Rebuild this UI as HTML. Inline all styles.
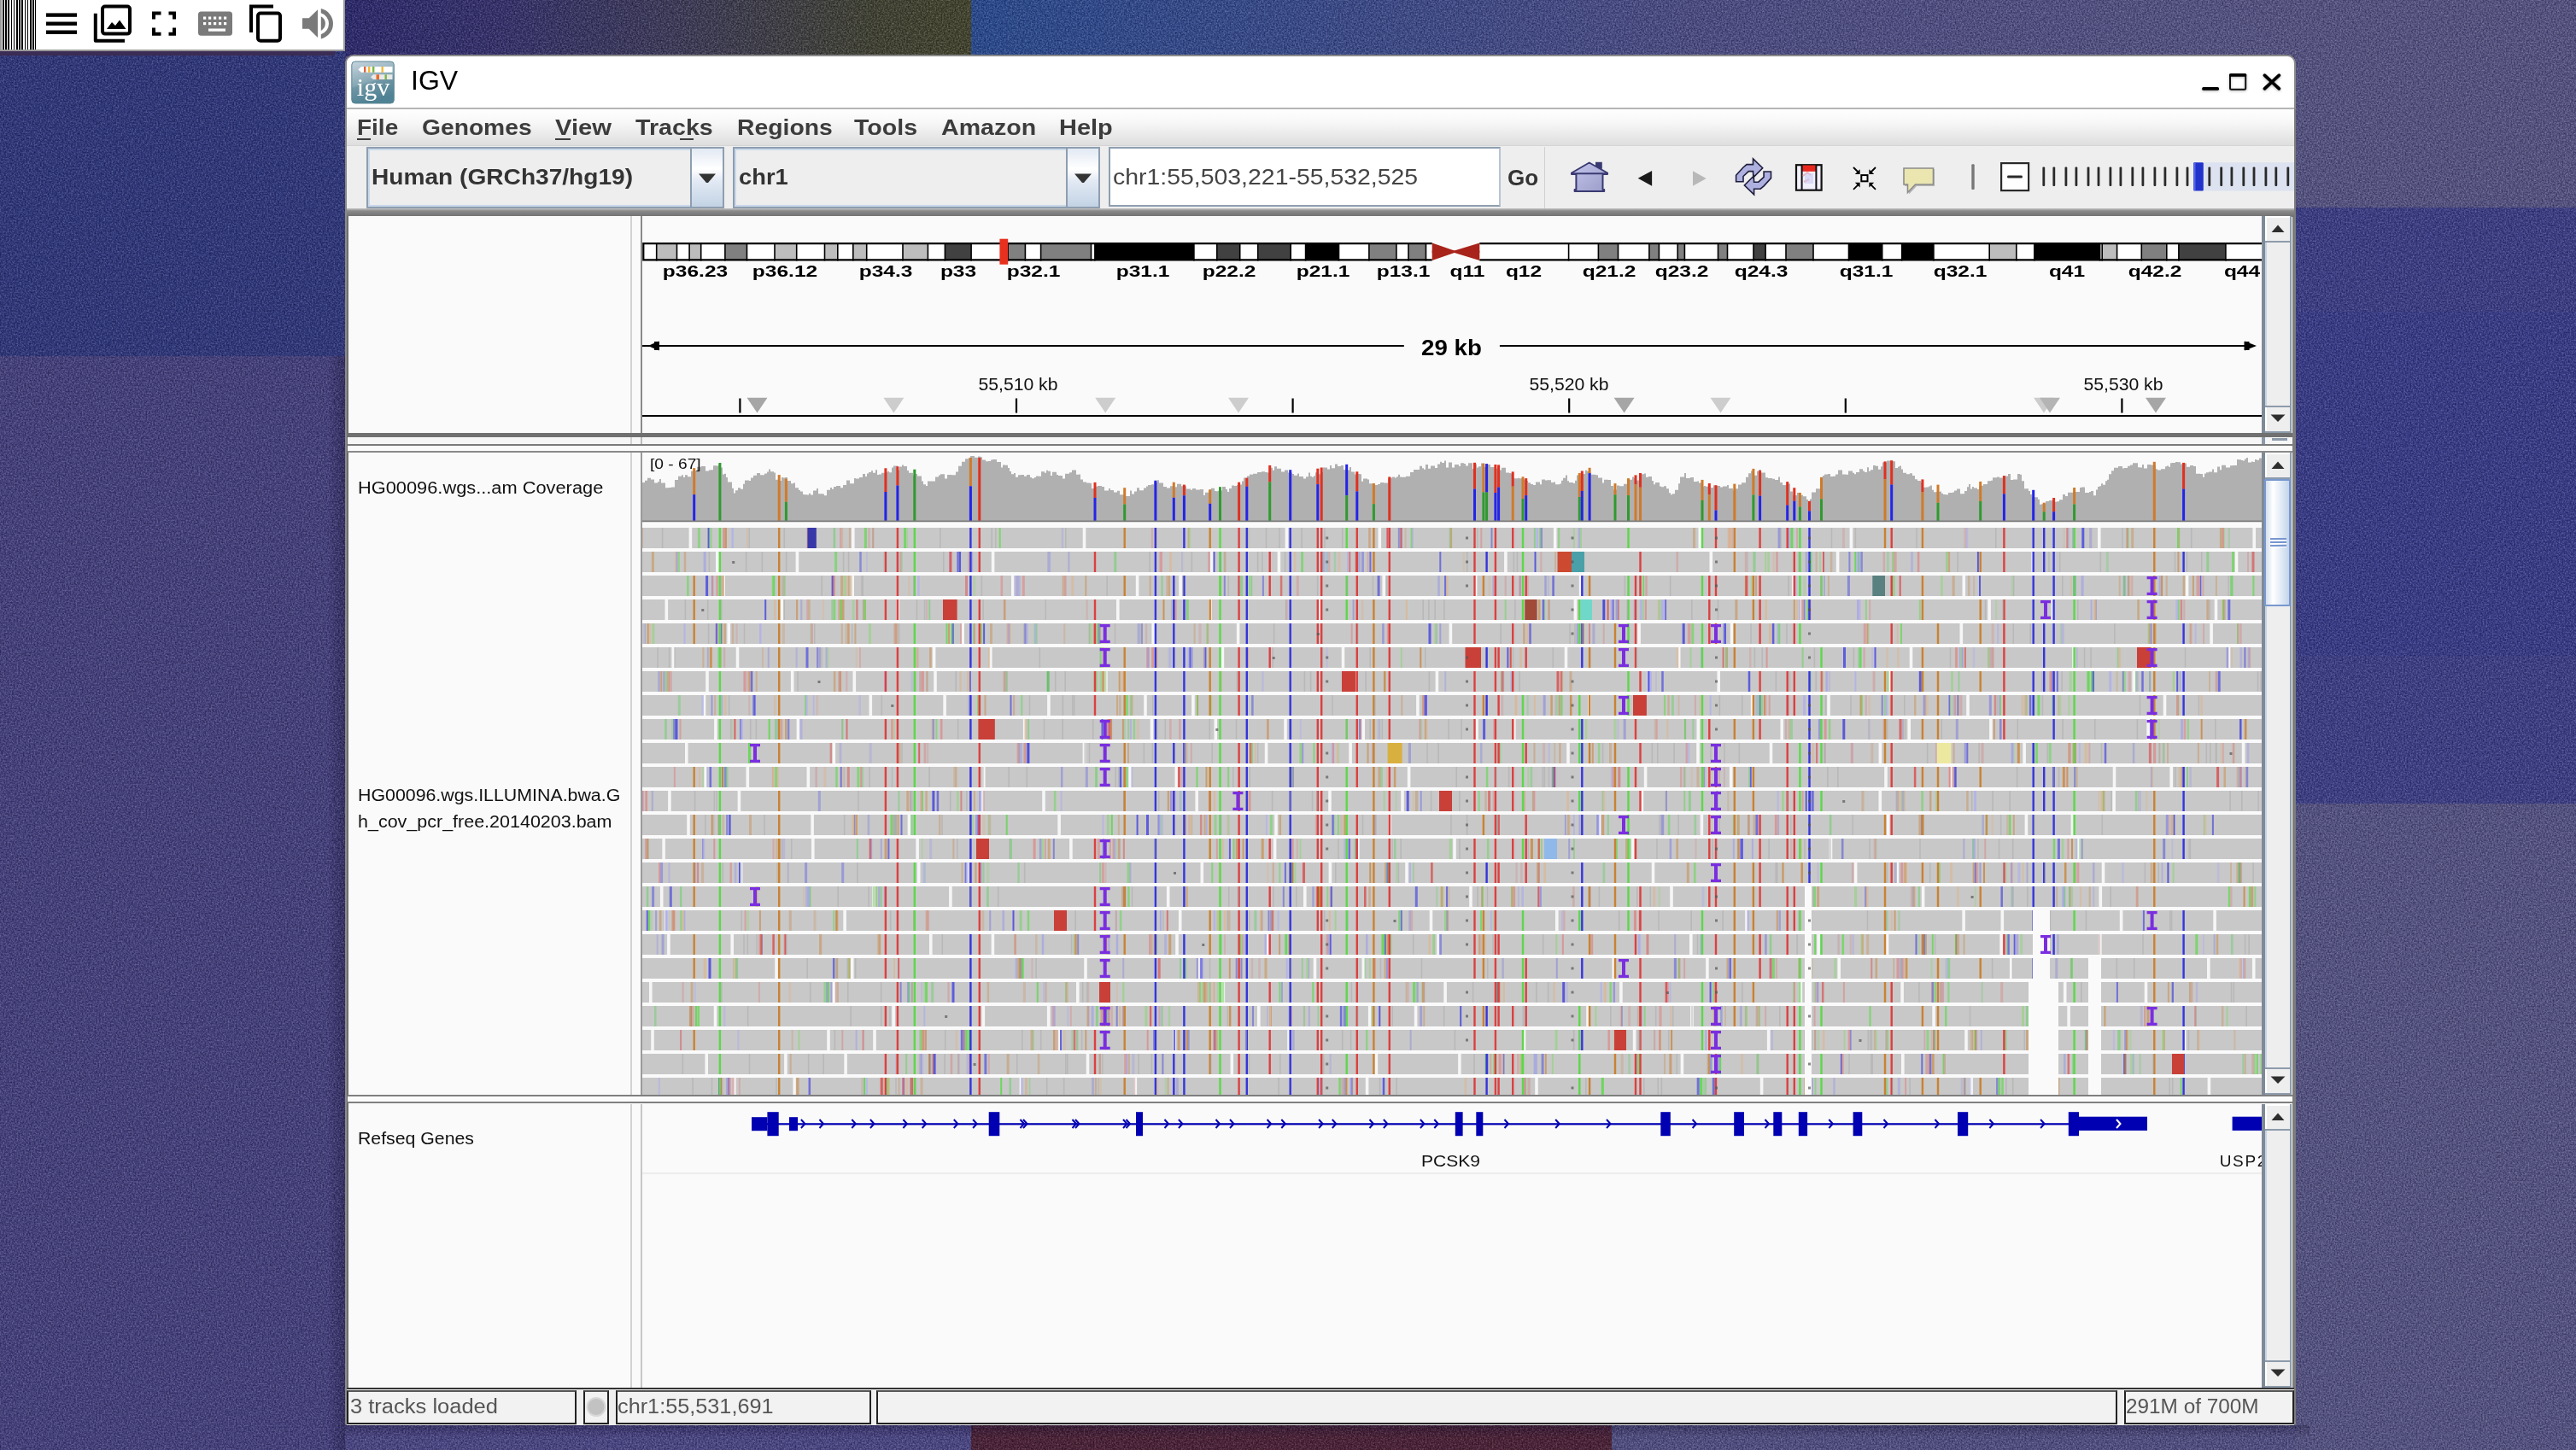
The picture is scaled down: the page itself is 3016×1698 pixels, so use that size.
<!DOCTYPE html><html><head><meta charset="utf-8"><title>IGV</title><style>
html,body{margin:0;padding:0;width:3016px;height:1698px;overflow:hidden;background:#4a4777;font-family:"Liberation Sans",sans-serif;}
.b{position:absolute;box-sizing:border-box;}
.t{position:absolute;white-space:nowrap;}
svg{position:absolute;overflow:hidden;}
</style></head><body>
<div class="b" style="left:0px;top:0px;width:3016px;height:1698px;background:#4a4778;"></div>
<div class="b" style="left:404px;top:0px;width:733px;height:66px;background:linear-gradient(90deg,#2f2b6b 0%,#37336a 25%,#3e3c56 55%,#414234 85%,#43442f 100%);"></div>
<div class="b" style="left:1137px;top:0px;width:1551px;height:66px;background:linear-gradient(90deg,#2c4a8a 0%,#3a4a86 25%,#4c4c80 55%,#55537f 100%);"></div>
<div class="b" style="left:0px;top:58px;width:404px;height:359px;background:#313878;"></div>
<div class="b" style="left:0px;top:417px;width:404px;height:1281px;background:#45417a;"></div>
<div class="b" style="left:2688px;top:0px;width:328px;height:243px;background:#55537f;"></div>
<div class="b" style="left:2688px;top:243px;width:328px;height:122px;background:#3c3e82;"></div>
<div class="b" style="left:2688px;top:365px;width:328px;height:403px;background:#3a3c84;"></div>
<div class="b" style="left:2688px;top:768px;width:328px;height:173px;background:#3d3f82;"></div>
<div class="b" style="left:2688px;top:941px;width:328px;height:757px;background:#54527f;"></div>
<div class="b" style="left:404px;top:1669px;width:733px;height:29px;background:#4a4680;"></div>
<div class="b" style="left:1137px;top:1669px;width:750px;height:29px;background:#4a2438;"></div>
<div class="b" style="left:1887px;top:1669px;width:801px;height:29px;background:#504e7e;"></div>
<div class="b" style="left:384px;top:417px;width:20px;height:1281px;background:linear-gradient(90deg,rgba(20,15,50,0) 0%,rgba(20,15,50,0.35) 100%);"></div>
<div class="b" style="left:404px;top:1669px;width:2300px;height:14px;background:linear-gradient(rgba(20,15,50,0.35) 0%,rgba(20,15,50,0) 100%);"></div>
<svg style="left:0;top:0;mix-blend-mode:soft-light;opacity:0.8" width="3016" height="1698"><filter id="nz" x="0" y="0" width="100%" height="100%" color-interpolation-filters="sRGB"><feTurbulence type="fractalNoise" baseFrequency="0.55" numOctaves="3" seed="3"/><feColorMatrix type="matrix" values="1.0 0 0 0 0  1.0 0 0 0 0  1.0 0 0 0 0  0 0 0 0 1"/></filter><rect width="3016" height="1698" filter="url(#nz)"/></svg>
<div class="b" style="left:0px;top:58px;width:392px;height:7px;background:#3b2c55;"></div>
<div class="b" style="left:0px;top:0px;width:404px;height:60px;background:#fff;border-right:2px solid #9a9a9a;border-bottom:2px solid #9a9a9a;border-left:2px solid #9a9a9a;"></div>
<div class="b" style="left:3px;top:0px;width:39px;height:58px;background:repeating-linear-gradient(90deg,#000 0px,#000 1.6px,#fff 1.6px,#fff 3.2px);"></div>
<svg style="left:0;top:0" width="404" height="60" viewBox="0 0 404 60">
<g fill="#000"><rect x="54" y="15.4" width="36" height="4.4"/><rect x="54" y="25.5" width="36" height="4.4"/><rect x="54" y="35.5" width="36" height="4.4"/></g>
<path d="M111.8 15.7 V47.7 H146" fill="none" stroke="#000" stroke-width="4" stroke-linejoin="round"/>
<rect x="120" y="7.6" width="32" height="32" rx="3" fill="none" stroke="#000" stroke-width="4"/>
<path d="M125 34 L131 26 L135 30 L140 23.5 L147.5 34 Z" fill="#000"/>
<path d="M180 22.5 V15.5 H188.5 M197.5 15.5 H204 V22.5 M204 32.5 V39.7 H197.5 M188.5 39.7 H180 V32.5" fill="none" stroke="#000" stroke-width="4"/>
<rect x="232" y="13.5" width="40" height="28.2" rx="3.5" fill="#7a7a7a"/>
<g fill="#fff"><rect x="238" y="19.5" width="3.2" height="3.2"/><rect x="244" y="19.5" width="3.2" height="3.2"/><rect x="250" y="19.5" width="3.2" height="3.2"/><rect x="256" y="19.5" width="3.2" height="3.2"/><rect x="262" y="19.5" width="3.2" height="3.2"/>
<rect x="238" y="26" width="3.2" height="3.2"/><rect x="244" y="26" width="3.2" height="3.2"/><rect x="250" y="26" width="3.2" height="3.2"/><rect x="256" y="26" width="3.2" height="3.2"/><rect x="262" y="26" width="3.2" height="3.2"/>
<rect x="244" y="33.5" width="20" height="3.2"/></g>
<path d="M294 38 V7.6 H320" fill="none" stroke="#000" stroke-width="4"/>
<rect x="302" y="15.5" width="26" height="32.2" rx="3" fill="none" stroke="#000" stroke-width="4"/>
<path d="M354 21.3 H361.7 L372 11.3 V44 L361.7 33.7 H354 Z" fill="#7a7a7a"/>
<path d="M375.8 19.2 A9.4 9.4 0 0 1 375.8 35.9 Z" fill="#7a7a7a"/>
<path d="M375.8 10 A18.2 18.2 0 0 1 375.8 45.5 V40.25 A13.1 13.1 0 0 0 375.8 15.25 Z" fill="#7a7a7a"/>
</svg>
<div class="b" style="left:404px;top:64px;width:2284px;height:1605px;background:#fafafa;border:2px solid #8a8a8a;border-radius:10px 10px 3px 3px;"></div>
<div class="b" style="left:2684px;top:128px;width:4px;height:1537px;background:#7c7c7c;"></div>
<div class="b" style="left:406px;top:66px;width:2278px;height:60px;background:#fff;border-radius:8px 8px 0 0;"></div>
<div class="b" style="left:406px;top:126px;width:2280px;height:2px;background:#b5b5b5;"></div>
<svg style="left:411px;top:71px" width="52" height="52" viewBox="0 0 52 52">
<defs><linearGradient id="ig" x1="0" y1="0" x2="0.3" y2="1"><stop offset="0" stop-color="#c7d5df"/><stop offset="0.55" stop-color="#86a7b4"/><stop offset="0.6" stop-color="#6f96a5"/><stop offset="1" stop-color="#4f8294"/></linearGradient></defs>
<rect x="0.8" y="1" width="49.5" height="49" rx="4" fill="url(#ig)" stroke="#5b8795" stroke-width="1"/>
<path d="M8.3 10.5 L12 7 H48.5 V13.8 H12 Z" fill="#fff"/>
<rect x="15" y="7" width="2.4" height="6.8" fill="#e0643a"/><rect x="20" y="7" width="2.4" height="6.8" fill="#f3b83c"/><rect x="25" y="7" width="2.4" height="6.8" fill="#79b643"/><rect x="35.5" y="7" width="2.4" height="6.8" fill="#f3b83c"/>
<path d="M22.9 19.2 L26 16.3 H48.5 V22.1 H26 Z" fill="#e9e9e9"/>
<rect x="29.5" y="16.3" width="3.5" height="5.8" fill="#ea6a2a"/><rect x="39.5" y="16.3" width="2.4" height="5.8" fill="#79b643"/>
<text x="26" y="41" text-anchor="middle" font-family="Liberation Serif" font-size="30" fill="#fff">igv</text>
</svg>
<div class="t" style="left:481.0px;top:77.9px;font-size:32px;line-height:32px;font-weight:400;color:#000;letter-spacing:0px;">IGV</div>
<svg style="left:2570px;top:80px;filter:drop-shadow(0 1.5px 1.5px rgba(0,0,0,0.3))" width="110" height="34" viewBox="2570 80 110 34">
<rect x="2578.2" y="101.9" width="19.8" height="3.9" rx="1.6" fill="#000"/>
<rect x="2611" y="87.3" width="18.2" height="17.4" rx="1.5" fill="none" stroke="#111" stroke-width="2"/>
<rect x="2610" y="86.2" width="20.2" height="3.6" rx="1.2" fill="#000"/>
<path d="M2651.4 88.2 L2668.4 103.8 M2668.4 88.2 L2651.4 103.8" stroke="#000" stroke-width="3.8" stroke-linecap="round"/>
</svg>
<div class="b" style="left:406px;top:128px;width:2280px;height:42px;background:linear-gradient(#ffffff 0%,#f6f6f6 40%,#dedede 100%);"></div>
<div class="t" style="left:418.2px;top:136.8px;font-size:25px;line-height:25px;font-weight:700;color:#3c3c3c;letter-spacing:0px;transform:scaleX(1.1189);transform-origin:left top;">File</div>
<div class="t" style="left:493.6px;top:136.8px;font-size:25px;line-height:25px;font-weight:700;color:#3c3c3c;letter-spacing:0px;transform:scaleX(1.1287);transform-origin:left top;">Genomes</div>
<div class="t" style="left:650.2px;top:136.8px;font-size:25px;line-height:25px;font-weight:700;color:#3c3c3c;letter-spacing:0px;transform:scaleX(1.1675);transform-origin:left top;">View</div>
<div class="t" style="left:744.2px;top:136.8px;font-size:25px;line-height:25px;font-weight:700;color:#3c3c3c;letter-spacing:0px;transform:scaleX(1.1457);transform-origin:left top;">Tracks</div>
<div class="t" style="left:863.0px;top:136.8px;font-size:25px;line-height:25px;font-weight:700;color:#3c3c3c;letter-spacing:0px;transform:scaleX(1.1338);transform-origin:left top;">Regions</div>
<div class="t" style="left:1000.3px;top:136.8px;font-size:25px;line-height:25px;font-weight:700;color:#3c3c3c;letter-spacing:0px;transform:scaleX(1.1420);transform-origin:left top;">Tools</div>
<div class="t" style="left:1102.3px;top:136.8px;font-size:25px;line-height:25px;font-weight:700;color:#3c3c3c;letter-spacing:0px;transform:scaleX(1.1428);transform-origin:left top;">Amazon</div>
<div class="t" style="left:1240.3px;top:136.8px;font-size:25px;line-height:25px;font-weight:700;color:#3c3c3c;letter-spacing:0px;transform:scaleX(1.1574);transform-origin:left top;">Help</div>
<div class="b" style="left:418px;top:162px;width:16px;height:2px;background:#3c3c3c;"></div>
<div class="b" style="left:650px;top:162px;width:18px;height:2px;background:#3c3c3c;"></div>
<div class="b" style="left:796px;top:162px;width:16px;height:2px;background:#3c3c3c;"></div>
<div class="b" style="left:406px;top:170px;width:2280px;height:76px;background:#eeeeee;border-top:1px solid #d4d4d4;"></div>
<div class="b" style="left:406px;top:244px;width:2280px;height:10px;background:linear-gradient(#c4c4c4 0%,#8a8a8a 30%,#6f6f6f 100%);"></div>
<div class="b" style="left:429px;top:172px;width:419px;height:72px;background:#eeeeee;border:2px solid #8e9eb0;box-shadow:inset 0 2px 0 #c9d9ea, inset 2px 0 0 #c9d9ea, inset 0 -2px 0 #c9d9ea;"></div><div class="b" style="left:807.6px;top:172px;width:40.39999999999998px;height:72px;background:linear-gradient(#e2e9f3 0%,#ffffff 35%,#e3eaf4 55%,#c3d3e5 100%);border:2px solid #8e9eb0;"></div><svg style="left:816.8px;top:203px" width="22" height="12" viewBox="0 0 22 12"><path d="M1 0.5 H21 L12 11 H10 Z" fill="#333"/></svg>
<div class="t" style="left:435.0px;top:194.0px;font-size:26px;line-height:26px;font-weight:700;color:#333;letter-spacing:0px;transform:scaleX(1.0810);transform-origin:left top;">Human (GRCh37/hg19)</div>
<div class="b" style="left:858px;top:172px;width:430px;height:72px;background:#eeeeee;border:2px solid #8e9eb0;box-shadow:inset 0 2px 0 #c9d9ea, inset 2px 0 0 #c9d9ea, inset 0 -2px 0 #c9d9ea;"></div><div class="b" style="left:1248px;top:172px;width:40px;height:72px;background:linear-gradient(#e2e9f3 0%,#ffffff 35%,#e3eaf4 55%,#c3d3e5 100%);border:2px solid #8e9eb0;"></div><svg style="left:1257.0px;top:203px" width="22" height="12" viewBox="0 0 22 12"><path d="M1 0.5 H21 L12 11 H10 Z" fill="#333"/></svg>
<div class="t" style="left:864.7px;top:194.0px;font-size:26px;line-height:26px;font-weight:700;color:#333;letter-spacing:0px;transform:scaleX(1.0509);transform-origin:left top;">chr1</div>
<div class="b" style="left:1298px;top:172px;width:459px;height:70px;background:#fff;border:2px solid #8e9eb0;border-right-color:#b8c4d2;"></div>
<div class="t" style="left:1303.0px;top:194.0px;font-size:26px;line-height:26px;font-weight:400;color:#444;letter-spacing:0px;transform:scaleX(1.0932);transform-origin:left top;">chr1:55,503,221-55,532,525</div>
<div class="b" style="left:1757px;top:172px;width:52px;height:72px;background:#eeeeee;border-right:1px solid #d0d0d0;"></div>
<div class="t" style="left:1765.0px;top:195.0px;font-size:26px;line-height:26px;font-weight:700;color:#333;letter-spacing:0px;">Go</div>
<svg style="left:0;top:0" width="3016" height="260" viewBox="0 0 3016 260"><defs><linearGradient id="hg" x1="0" y1="0" x2="1" y2="1"><stop offset="0" stop-color="#c4c6ec"/><stop offset="1" stop-color="#9a9cc8"/></linearGradient></defs>
<rect x="1868" y="189.8" width="7.8" height="8" fill="#3a3a72"/>
<path d="M1840 202.5 L1860.7 190.5 L1882 202.5 L1882 204 L1876.5 204 L1876.5 222 L1878.2 222 L1878.2 224 L1843.6 224 L1843.6 222 L1845.4 222 L1845.4 204 L1840 204 Z" fill="url(#hg)" stroke="#3a3a72" stroke-width="2" stroke-linejoin="round"/>
<path d="M1841 203.2 H1881" stroke="#3a3a72" stroke-width="2"/>
<path d="M1917.7 208.7 L1934.1 199.9 V217.7 Z" fill="#1a1a1a"/>
<path d="M1997.7 209 L1982 200.3 V217.7 Z" fill="#b8b8b8"/>
<path d="M2032.6 212.8 L2032.6 205.2 L2041.0 196.0 L2045.0 192.6 L2052.5 192.6 L2052.5 185.9 L2063.7 196.8 L2052.8 207.8 L2052.5 200.6 L2047.3 200.6 L2041.0 206.5 L2041.0 212.8 Z M2073.5 201.0 L2073.5 208.6 L2065.1 217.8 L2061.1 221.2 L2053.6 221.2 L2053.6 227.9 L2042.4 217.0 L2053.3 206.0 L2053.6 213.2 L2058.8 213.2 L2065.1 207.3 L2065.1 201.0 Z" fill="#aeb0e0" stroke="#1e1e3c" stroke-width="1.6" stroke-linejoin="miter"/>
<rect x="2103" y="193.2" width="29.6" height="29.5" fill="#f2f0fa" stroke="#111" stroke-width="2.2"/>
<rect x="2109" y="193.5" width="17.8" height="7.3" fill="#e8281e"/>
<path d="M2109.6 193 V223 M2126.4 193 V223" stroke="#111" stroke-width="2"/>
<path d="M2111 206 l5 -4 l4 3 M2112 213 l6 -3" stroke="#f0b0b0" stroke-width="2" fill="none"/>
<rect x="2113" y="203" width="10" height="12" fill="#c8ccf4" opacity="0.6"/>
<rect x="2179.3" y="205.1" width="7.2" height="7.2" fill="#fff" stroke="#000" stroke-width="2"/>
<g stroke="#000" stroke-width="1.8"><path d="M2170 196 L2175.5 201.5 M2196 196 L2190.5 201.5 M2170 221.8 L2175.5 216.3 M2196 221.8 L2190.5 216.3"/></g>
<g fill="#000"><path d="M2177.6 198.2 V204 H2171.8 Z"/><path d="M2188.4 198.2 V204 H2194.2 Z"/><path d="M2177.6 219.6 V213.8 H2171.8 Z"/><path d="M2188.4 219.6 V213.8 H2194.2 Z"/></g>
<path d="M2230 198 H2265 V218 H2244 L2235 227.5 V218 H2230 Z" fill="#909090" opacity="0.6"/>
<path d="M2229 197 H2263.5 V216 H2242.5 L2233.5 225.5 V216 H2229 Z" fill="#ebe6b0" stroke="#8c8c8c" stroke-width="1.6"/>
<rect x="2308.3" y="192.2" width="3.4" height="29.7" rx="1" fill="#777"/>
<rect x="2343.1" y="191.1" width="32" height="32" fill="#fff" stroke="#2a2a2a" stroke-width="2.2"/><rect x="2350.1" y="205.5" width="17.8" height="3" rx="1.2" fill="#2a2a2a"/>
<rect x="2580" y="190.2" width="106" height="33.3" fill="#dce2f0"/>
<g fill="#2a2a2a"><rect x="2391.4" y="195.5" width="2.8" height="22.4" rx="1"/><rect x="2403.4" y="195.5" width="2.8" height="22.4" rx="1"/><rect x="2417.5" y="195.5" width="2.8" height="22.4" rx="1"/><rect x="2429.5" y="195.5" width="2.8" height="22.4" rx="1"/><rect x="2443.6" y="195.5" width="2.8" height="22.4" rx="1"/><rect x="2455.6" y="195.5" width="2.8" height="22.4" rx="1"/><rect x="2469.5" y="195.5" width="2.8" height="22.4" rx="1"/><rect x="2481.5" y="195.5" width="2.8" height="22.4" rx="1"/><rect x="2495.4" y="195.5" width="2.8" height="22.4" rx="1"/><rect x="2507.5" y="195.5" width="2.8" height="22.4" rx="1"/><rect x="2521.5" y="195.5" width="2.8" height="22.4" rx="1"/><rect x="2533.5" y="195.5" width="2.8" height="22.4" rx="1"/><rect x="2547.5" y="195.5" width="2.8" height="22.4" rx="1"/><rect x="2559.6" y="195.5" width="2.8" height="22.4" rx="1"/><rect x="2585.4" y="195.5" width="2.8" height="22.4" rx="1"/><rect x="2599.3" y="195.5" width="2.8" height="22.4" rx="1"/><rect x="2611.5" y="195.5" width="2.8" height="22.4" rx="1"/><rect x="2625.4" y="195.5" width="2.8" height="22.4" rx="1"/><rect x="2637.6" y="195.5" width="2.8" height="22.4" rx="1"/><rect x="2651.5" y="195.5" width="2.8" height="22.4" rx="1"/><rect x="2663.4" y="195.5" width="2.8" height="22.4" rx="1"/><rect x="2677.4" y="195.5" width="2.8" height="22.4" rx="1"/></g>
<rect x="2568.2" y="190.2" width="11.6" height="33.3" rx="1" fill="#2233cc"/><rect x="2568.5" y="190.5" width="2" height="32.5" fill="#5566ee"/></svg>
<div class="b" style="left:406px;top:253px;width:2px;height:1372px;background:#6e6e6e;"></div>
<div class="b" style="left:408px;top:253px;width:2240px;height:254px;background:#fafafa;"></div>
<div class="b" style="left:738px;top:253px;width:2px;height:254px;background:#d2d2d2;"></div>
<div class="b" style="left:750px;top:253px;width:2px;height:254px;background:#8a8a8a;"></div>
<div class="b" style="left:2648px;top:253px;width:3.5px;height:254px;background:#7f8a96;"></div><div class="b" style="left:2651.5px;top:253px;width:31px;height:254px;background:#eeeeee;border-right:2px solid #8d9bab;box-shadow:inset 2px 0 0 #c6d5e6;"></div><div class="b" style="left:2651.5px;top:253px;width:31px;height:31px;background:#eeeeee;border-right:2px solid #8d9bab;border-bottom:2px solid #8d9bab;box-shadow:inset 2px 2px 0 #fff;"></div><svg style="left:2659px;top:263px" width="16" height="10" viewBox="0 0 16 10"><path d="M8 0.5 L15.5 9 H0.5 Z" fill="#2e2e2e"/></svg><div class="b" style="left:2651.5px;top:475px;width:31px;height:32px;background:#eeeeee;border-right:2px solid #8d9bab;border-bottom:2px solid #8d9bab;border-top:2px solid #8d9bab;box-shadow:inset 2px 0 0 #fff;"></div><svg style="left:2658px;top:485px" width="18" height="10" viewBox="0 0 18 10"><path d="M0.5 0.5 H17.5 L9 9 Z" fill="#2e2e2e"/></svg>
<div class="b" style="left:407px;top:507px;width:2277px;height:5px;background:#707070;"></div>
<div class="b" style="left:407px;top:512px;width:2277px;height:8px;background:#f6f6f6;"></div>
<div class="b" style="left:738px;top:512px;width:2px;height:8px;background:#d2d2d2;"></div>
<div class="b" style="left:750px;top:512px;width:2px;height:8px;background:#bbbbbb;"></div>
<div class="b" style="left:2648px;top:512px;width:3.5px;height:8px;background:#8d9bab;"></div>
<div class="b" style="left:2660px;top:513px;width:18px;height:3px;background:#8d9bab;"></div>
<div class="b" style="left:407px;top:520px;width:2277px;height:2px;background:#7a7a7a;"></div>
<div class="b" style="left:407px;top:522px;width:2277px;height:6px;background:#fafafa;"></div>
<div class="b" style="left:407px;top:528px;width:2277px;height:2px;background:#8a8a8a;"></div>
<div class="b" style="left:408px;top:530px;width:2240px;height:752px;background:#fafafa;"></div>
<div class="b" style="left:738px;top:530px;width:2px;height:752px;background:#d2d2d2;"></div>
<div class="b" style="left:750px;top:530px;width:2px;height:752px;background:#9a9a9a;"></div>
<div class="b" style="left:2648px;top:530px;width:3.5px;height:752px;background:#7f8a96;"></div><div class="b" style="left:2651.5px;top:530px;width:31px;height:752px;background:#eeeeee;border-right:2px solid #8d9bab;box-shadow:inset 2px 0 0 #c6d5e6;"></div><div class="b" style="left:2651.5px;top:530px;width:31px;height:31px;background:#eeeeee;border-right:2px solid #8d9bab;border-bottom:2px solid #8d9bab;box-shadow:inset 2px 2px 0 #fff;"></div><svg style="left:2659px;top:540px" width="16" height="10" viewBox="0 0 16 10"><path d="M8 0.5 L15.5 9 H0.5 Z" fill="#2e2e2e"/></svg><div class="b" style="left:2651.5px;top:1250px;width:31px;height:32px;background:#eeeeee;border-right:2px solid #8d9bab;border-bottom:2px solid #8d9bab;border-top:2px solid #8d9bab;box-shadow:inset 2px 0 0 #fff;"></div><svg style="left:2658px;top:1260px" width="18" height="10" viewBox="0 0 18 10"><path d="M0.5 0.5 H17.5 L9 9 Z" fill="#2e2e2e"/></svg><div class="b" style="left:2651px;top:560.6px;width:31px;height:149.0px;background:linear-gradient(90deg,#d4e0ee 0%,#ffffff 30%,#e6eef7 60%,#c4d5ea 100%);border:2px solid #7898d0;border-radius:2px;"></div><div class="b" style="left:2658px;top:630.1px;width:19px;height:2.2px;background:#7896d0;box-shadow:0 1px 0 #fff;"></div><div class="b" style="left:2658px;top:634.1px;width:19px;height:2.2px;background:#7896d0;box-shadow:0 1px 0 #fff;"></div><div class="b" style="left:2658px;top:638.1px;width:19px;height:2.2px;background:#7896d0;box-shadow:0 1px 0 #fff;"></div>
<div class="b" style="left:407px;top:1282px;width:2277px;height:2px;background:#7f7f7f;"></div>
<div class="b" style="left:407px;top:1284px;width:2277px;height:6px;background:#fbfbfb;"></div>
<div class="b" style="left:407px;top:1290px;width:2277px;height:2px;background:#7f7f7f;"></div>
<div class="b" style="left:408px;top:1292px;width:2240px;height:333px;background:#fafafa;"></div>
<div class="b" style="left:738px;top:1292.5px;width:2px;height:332.5px;background:#d2d2d2;"></div>
<div class="b" style="left:750px;top:1292.5px;width:2px;height:332.5px;background:#c6c6c6;"></div>
<div class="b" style="left:2648px;top:1292.5px;width:3.5px;height:332.5px;background:#7f8a96;"></div><div class="b" style="left:2651.5px;top:1292.5px;width:31px;height:332.5px;background:#eeeeee;border-right:2px solid #8d9bab;box-shadow:inset 2px 0 0 #c6d5e6;"></div><div class="b" style="left:2651.5px;top:1292.5px;width:31px;height:31px;background:#eeeeee;border-right:2px solid #8d9bab;border-bottom:2px solid #8d9bab;box-shadow:inset 2px 2px 0 #fff;"></div><svg style="left:2659px;top:1302.5px" width="16" height="10" viewBox="0 0 16 10"><path d="M8 0.5 L15.5 9 H0.5 Z" fill="#2e2e2e"/></svg><div class="b" style="left:2651.5px;top:1593px;width:31px;height:32px;background:#eeeeee;border-right:2px solid #8d9bab;border-bottom:2px solid #8d9bab;border-top:2px solid #8d9bab;box-shadow:inset 2px 0 0 #fff;"></div><svg style="left:2658px;top:1603px" width="18" height="10" viewBox="0 0 18 10"><path d="M0.5 0.5 H17.5 L9 9 Z" fill="#2e2e2e"/></svg>
<div class="b" style="left:752px;top:1373px;width:1896px;height:1.5px;background:#ececec;"></div>
<div class="b" style="left:406px;top:1625px;width:2280px;height:44px;background:#eeeeee;border-top:2px solid #333;"></div>
<div class="b" style="left:406px;top:1628px;width:269px;height:40px;background:#f2f2f2;border:2px solid #222;border-top-color:#555;"></div>
<div class="b" style="left:682.6px;top:1628px;width:30.399999999999977px;height:40px;background:#f2f2f2;border:2px solid #222;border-top-color:#555;"></div>
<div class="b" style="left:720.6px;top:1628px;width:299.0px;height:40px;background:#f2f2f2;border:2px solid #222;border-top-color:#555;"></div>
<div class="b" style="left:1026px;top:1628px;width:1453px;height:40px;background:#f2f2f2;border:2px solid #222;border-top-color:#555;"></div>
<div class="b" style="left:2486.8px;top:1628px;width:199.19999999999982px;height:40px;background:#f2f2f2;border:2px solid #222;border-top-color:#555;"></div>
<svg style="left:684px;top:1630px" width="28" height="36" viewBox="0 0 28 36"><circle cx="14" cy="17.5" r="10.5" fill="#c2c2c2" stroke="#d8d8d8" stroke-width="2"/></svg>
<div class="t" style="left:409.5px;top:1636.1px;font-size:23px;line-height:23px;font-weight:400;color:#555;letter-spacing:0px;transform:scaleX(1.1089);transform-origin:left top;">3 tracks loaded</div>
<div class="t" style="left:722.8px;top:1636.1px;font-size:23px;line-height:23px;font-weight:400;color:#555;letter-spacing:0px;transform:scaleX(1.0980);transform-origin:left top;">chr1:55,531,691</div>
<div class="t" style="left:2489.0px;top:1636.1px;font-size:23px;line-height:23px;font-weight:400;color:#555;letter-spacing:0px;transform:scaleX(1.0581);transform-origin:left top;">291M of 700M</div>
<svg style="left:0;top:0" width="3016" height="520" viewBox="0 0 3016 520"><rect x="752.3" y="285.3" width="16.4" height="18.9" fill="#ffffff"/><rect x="768.7" y="285.3" width="23.8" height="18.9" fill="#bdbdbd"/><rect x="792.5" y="285.3" width="14.6" height="18.9" fill="#ffffff"/><rect x="807.1" y="285.3" width="13.6" height="18.9" fill="#bdbdbd"/><rect x="820.7" y="285.3" width="28.2" height="18.9" fill="#ffffff"/><rect x="848.9" y="285.3" width="25.6" height="18.9" fill="#808080"/><rect x="874.5" y="285.3" width="32.5" height="18.9" fill="#ffffff"/><rect x="907.0" y="285.3" width="25.7" height="18.9" fill="#bdbdbd"/><rect x="932.7" y="285.3" width="32.8" height="18.9" fill="#ffffff"/><rect x="965.5" y="285.3" width="15.3" height="18.9" fill="#bdbdbd"/><rect x="980.8" y="285.3" width="18.0" height="18.9" fill="#ffffff"/><rect x="998.8" y="285.3" width="15.9" height="18.9" fill="#bdbdbd"/><rect x="1014.7" y="285.3" width="42.3" height="18.9" fill="#ffffff"/><rect x="1057.0" y="285.3" width="29.4" height="18.9" fill="#bdbdbd"/><rect x="1086.4" y="285.3" width="20.0" height="18.9" fill="#ffffff"/><rect x="1106.4" y="285.3" width="30.7" height="18.9" fill="#414141"/><rect x="1137.1" y="285.3" width="43.1" height="18.9" fill="#ffffff"/><rect x="1180.2" y="285.3" width="20.2" height="18.9" fill="#808080"/><rect x="1200.4" y="285.3" width="18.2" height="18.9" fill="#ffffff"/><rect x="1218.6" y="285.3" width="58.9" height="18.9" fill="#808080"/><rect x="1277.5" y="285.3" width="4.4" height="18.9" fill="#ffffff"/><rect x="1281.9" y="285.3" width="116.0" height="18.9" fill="#000000"/><rect x="1397.9" y="285.3" width="26.9" height="18.9" fill="#ffffff"/><rect x="1424.8" y="285.3" width="26.9" height="18.9" fill="#414141"/><rect x="1451.7" y="285.3" width="21.0" height="18.9" fill="#ffffff"/><rect x="1472.7" y="285.3" width="38.5" height="18.9" fill="#414141"/><rect x="1511.2" y="285.3" width="17.4" height="18.9" fill="#ffffff"/><rect x="1528.6" y="285.3" width="38.9" height="18.9" fill="#000000"/><rect x="1567.5" y="285.3" width="35.4" height="18.9" fill="#ffffff"/><rect x="1602.9" y="285.3" width="32.0" height="18.9" fill="#808080"/><rect x="1634.9" y="285.3" width="14.1" height="18.9" fill="#ffffff"/><rect x="1649.0" y="285.3" width="20.5" height="18.9" fill="#808080"/><rect x="1669.5" y="285.3" width="7.2" height="18.9" fill="#ffffff"/><rect x="1732.3" y="285.3" width="104.3" height="18.9" fill="#ffffff"/><rect x="1836.6" y="285.3" width="34.8" height="18.9" fill="#ffffff"/><rect x="1871.4" y="285.3" width="23.1" height="18.9" fill="#808080"/><rect x="1894.5" y="285.3" width="36.4" height="18.9" fill="#ffffff"/><rect x="1930.9" y="285.3" width="11.5" height="18.9" fill="#808080"/><rect x="1942.4" y="285.3" width="21.8" height="18.9" fill="#ffffff"/><rect x="1964.2" y="285.3" width="8.2" height="18.9" fill="#808080"/><rect x="1972.4" y="285.3" width="39.1" height="18.9" fill="#ffffff"/><rect x="2011.5" y="285.3" width="11.0" height="18.9" fill="#808080"/><rect x="2022.5" y="285.3" width="30.5" height="18.9" fill="#ffffff"/><rect x="2053.0" y="285.3" width="14.1" height="18.9" fill="#414141"/><rect x="2067.1" y="285.3" width="23.9" height="18.9" fill="#ffffff"/><rect x="2091.0" y="285.3" width="32.0" height="18.9" fill="#808080"/><rect x="2123.0" y="285.3" width="41.5" height="18.9" fill="#ffffff"/><rect x="2164.5" y="285.3" width="39.2" height="18.9" fill="#000000"/><rect x="2203.7" y="285.3" width="23.0" height="18.9" fill="#ffffff"/><rect x="2226.7" y="285.3" width="37.2" height="18.9" fill="#000000"/><rect x="2263.9" y="285.3" width="65.3" height="18.9" fill="#ffffff"/><rect x="2329.2" y="285.3" width="31.6" height="18.9" fill="#bdbdbd"/><rect x="2360.8" y="285.3" width="21.0" height="18.9" fill="#ffffff"/><rect x="2381.8" y="285.3" width="76.8" height="18.9" fill="#000000"/><rect x="2458.6" y="285.3" width="2.6" height="18.9" fill="#ffffff"/><rect x="2461.2" y="285.3" width="17.4" height="18.9" fill="#bdbdbd"/><rect x="2478.6" y="285.3" width="28.7" height="18.9" fill="#ffffff"/><rect x="2507.3" y="285.3" width="29.5" height="18.9" fill="#808080"/><rect x="2536.8" y="285.3" width="14.1" height="18.9" fill="#ffffff"/><rect x="2550.9" y="285.3" width="55.0" height="18.9" fill="#414141"/><rect x="2605.9" y="285.3" width="42.3" height="18.9" fill="#ffffff"/><path d="M753.3 285.1 H1676.7 M753.3 304.4 H1676.7 M753.3 284.1 V305.4 M1732.3 285.1 H2648 M1732.3 304.4 H2648" stroke="#000" stroke-width="2.2" fill="none"/><path d="M768.7 284.1 V305.4 M792.5 284.1 V305.4 M807.1 284.1 V305.4 M820.7 284.1 V305.4 M848.9 284.1 V305.4 M874.5 284.1 V305.4 M907.0 284.1 V305.4 M932.7 284.1 V305.4 M965.5 284.1 V305.4 M980.8 284.1 V305.4 M998.8 284.1 V305.4 M1014.7 284.1 V305.4 M1057.0 284.1 V305.4 M1086.4 284.1 V305.4 M1106.4 284.1 V305.4 M1137.1 284.1 V305.4 M1180.2 284.1 V305.4 M1200.4 284.1 V305.4 M1218.6 284.1 V305.4 M1277.5 284.1 V305.4 M1281.9 284.1 V305.4 M1397.9 284.1 V305.4 M1424.8 284.1 V305.4 M1451.7 284.1 V305.4 M1472.7 284.1 V305.4 M1511.2 284.1 V305.4 M1528.6 284.1 V305.4 M1567.5 284.1 V305.4 M1602.9 284.1 V305.4 M1634.9 284.1 V305.4 M1649.0 284.1 V305.4 M1669.5 284.1 V305.4 M1836.6 284.1 V305.4 M1871.4 284.1 V305.4 M1894.5 284.1 V305.4 M1930.9 284.1 V305.4 M1942.4 284.1 V305.4 M1964.2 284.1 V305.4 M1972.4 284.1 V305.4 M2011.5 284.1 V305.4 M2022.5 284.1 V305.4 M2053.0 284.1 V305.4 M2067.1 284.1 V305.4 M2091.0 284.1 V305.4 M2123.0 284.1 V305.4 M2164.5 284.1 V305.4 M2203.7 284.1 V305.4 M2226.7 284.1 V305.4 M2263.9 284.1 V305.4 M2329.2 284.1 V305.4 M2360.8 284.1 V305.4 M2381.8 284.1 V305.4 M2458.6 284.1 V305.4 M2461.2 284.1 V305.4 M2478.6 284.1 V305.4 M2507.3 284.1 V305.4 M2536.8 284.1 V305.4 M2550.9 284.1 V305.4 M2605.9 284.1 V305.4" stroke="#000" stroke-width="1.6" fill="none"/><path d="M1676.7 284.6 L1702.8 293.5 L1732.3 284.6 V304.9 L1702.8 296 L1676.7 304.9 Z" fill="#a8231a"/><path d="M1676.7 294.8 H1732.3" stroke="#a8231a" stroke-width="2.5"/><rect x="1170.4" y="279.7" width="9.8" height="30" fill="#e8301f"/></svg>
<div class="t" style="left:-185.7px;width:2000px;text-align:center;top:308.2px;font-size:19px;line-height:19px;font-weight:700;color:#000;letter-spacing:0px;transform:scaleX(1.2900);transform-origin:center top;">p36.23</div>
<div class="t" style="left:-80.7px;width:2000px;text-align:center;top:308.2px;font-size:19px;line-height:19px;font-weight:700;color:#000;letter-spacing:0px;transform:scaleX(1.2900);transform-origin:center top;">p36.12</div>
<div class="t" style="left:37.2px;width:2000px;text-align:center;top:308.2px;font-size:19px;line-height:19px;font-weight:700;color:#000;letter-spacing:0px;transform:scaleX(1.2900);transform-origin:center top;">p34.3</div>
<div class="t" style="left:121.8px;width:2000px;text-align:center;top:308.2px;font-size:19px;line-height:19px;font-weight:700;color:#000;letter-spacing:0px;transform:scaleX(1.2900);transform-origin:center top;">p33</div>
<div class="t" style="left:210.0px;width:2000px;text-align:center;top:308.2px;font-size:19px;line-height:19px;font-weight:700;color:#000;letter-spacing:0px;transform:scaleX(1.2900);transform-origin:center top;">p32.1</div>
<div class="t" style="left:338.3px;width:2000px;text-align:center;top:308.2px;font-size:19px;line-height:19px;font-weight:700;color:#000;letter-spacing:0px;transform:scaleX(1.2900);transform-origin:center top;">p31.1</div>
<div class="t" style="left:438.9px;width:2000px;text-align:center;top:308.2px;font-size:19px;line-height:19px;font-weight:700;color:#000;letter-spacing:0px;transform:scaleX(1.2900);transform-origin:center top;">p22.2</div>
<div class="t" style="left:549.0px;width:2000px;text-align:center;top:308.2px;font-size:19px;line-height:19px;font-weight:700;color:#000;letter-spacing:0px;transform:scaleX(1.2900);transform-origin:center top;">p21.1</div>
<div class="t" style="left:642.6px;width:2000px;text-align:center;top:308.2px;font-size:19px;line-height:19px;font-weight:700;color:#000;letter-spacing:0px;transform:scaleX(1.2900);transform-origin:center top;">p13.1</div>
<div class="t" style="left:717.7px;width:2000px;text-align:center;top:308.2px;font-size:19px;line-height:19px;font-weight:700;color:#000;letter-spacing:0px;transform:scaleX(1.2900);transform-origin:center top;">q11</div>
<div class="t" style="left:784.3px;width:2000px;text-align:center;top:308.2px;font-size:19px;line-height:19px;font-weight:700;color:#000;letter-spacing:0px;transform:scaleX(1.2900);transform-origin:center top;">q12</div>
<div class="t" style="left:883.5px;width:2000px;text-align:center;top:308.2px;font-size:19px;line-height:19px;font-weight:700;color:#000;letter-spacing:0px;transform:scaleX(1.2900);transform-origin:center top;">q21.2</div>
<div class="t" style="left:969.3px;width:2000px;text-align:center;top:308.2px;font-size:19px;line-height:19px;font-weight:700;color:#000;letter-spacing:0px;transform:scaleX(1.2900);transform-origin:center top;">q23.2</div>
<div class="t" style="left:1061.5px;width:2000px;text-align:center;top:308.2px;font-size:19px;line-height:19px;font-weight:700;color:#000;letter-spacing:0px;transform:scaleX(1.2900);transform-origin:center top;">q24.3</div>
<div class="t" style="left:1184.5px;width:2000px;text-align:center;top:308.2px;font-size:19px;line-height:19px;font-weight:700;color:#000;letter-spacing:0px;transform:scaleX(1.2900);transform-origin:center top;">q31.1</div>
<div class="t" style="left:1294.6px;width:2000px;text-align:center;top:308.2px;font-size:19px;line-height:19px;font-weight:700;color:#000;letter-spacing:0px;transform:scaleX(1.2900);transform-origin:center top;">q32.1</div>
<div class="t" style="left:1420.2px;width:2000px;text-align:center;top:308.2px;font-size:19px;line-height:19px;font-weight:700;color:#000;letter-spacing:0px;transform:scaleX(1.2900);transform-origin:center top;">q41</div>
<div class="t" style="left:1522.7px;width:2000px;text-align:center;top:308.2px;font-size:19px;line-height:19px;font-weight:700;color:#000;letter-spacing:0px;transform:scaleX(1.2900);transform-origin:center top;">q42.2</div>
<div class="t" style="left:1625.0px;width:2000px;text-align:center;top:308.2px;font-size:19px;line-height:19px;font-weight:700;color:#000;letter-spacing:0px;transform:scaleX(1.2900);transform-origin:center top;">q44</div>
<div class="b" style="left:2648px;top:300px;width:40px;height:40px;background:transparent;"></div>
<svg style="left:0;top:0" width="3016" height="520" viewBox="0 0 3016 520"><path d="M752 405 H1643.8 M1755.9 405 H2640" stroke="#000" stroke-width="2.2"/><path d="M758.6 405 L771.7 399.5 V410.5 Z" fill="#000"/><rect x="766" y="400" width="6" height="10" fill="#000"/><path d="M2642 405 L2628 399.5 V410.5 Z" fill="#000"/><rect x="2627.5" y="400" width="6" height="10" fill="#000"/><path d="M866.4 466.5 V483.5 M1190.0 466.5 V483.5 M1513.6 466.5 V483.5 M1837.2 466.5 V483.5 M2160.8 466.5 V483.5 M2484.4 466.5 V483.5" stroke="#000" stroke-width="2.2"/><path d="M752 487 H2648" stroke="#000" stroke-width="2.2"/><path d="M874.5 465.7 H898.5 L886.5 483.6 Z" fill="#a6a6a6"/><path d="M1034.4 465.7 H1058.4 L1046.4 483.6 Z" fill="#cdcdcd"/><path d="M1282.2 465.7 H1306.2 L1294.2 483.6 Z" fill="#cdcdcd"/><path d="M1438.0 465.7 H1462.0 L1450.0 483.6 Z" fill="#cdcdcd"/><path d="M1889.6 465.7 H1913.6 L1901.6 483.6 Z" fill="#a6a6a6"/><path d="M2002.5 465.7 H2026.5 L2014.5 483.6 Z" fill="#cdcdcd"/><path d="M2381.0 465.7 H2405.0 L2393.0 483.6 Z" fill="#cdcdcd"/><path d="M2388.0 465.7 H2412.0 L2400.0 483.6 Z" fill="#b4b4b4"/><path d="M2512.0 465.7 H2536.0 L2524.0 483.6 Z" fill="#a6a6a6"/></svg>
<div class="t" style="left:1663.6px;top:395.0px;font-size:25px;line-height:25px;font-weight:700;color:#000;letter-spacing:0px;transform:scaleX(1.1073);transform-origin:left top;">29 kb</div>
<div class="t" style="left:191.9px;width:2000px;text-align:center;top:439.5px;font-size:20px;line-height:20px;font-weight:400;color:#111;letter-spacing:0px;transform:scaleX(1.0583);transform-origin:center top;">55,510 kb</div>
<div class="t" style="left:837.4px;width:2000px;text-align:center;top:439.5px;font-size:20px;line-height:20px;font-weight:400;color:#111;letter-spacing:0px;transform:scaleX(1.0583);transform-origin:center top;">55,520 kb</div>
<div class="t" style="left:1485.7px;width:2000px;text-align:center;top:439.5px;font-size:20px;line-height:20px;font-weight:400;color:#111;letter-spacing:0px;transform:scaleX(1.0583);transform-origin:center top;">55,530 kb</div>
<div class="t" style="left:419.4px;top:561.1px;font-size:20px;line-height:20px;font-weight:400;color:#111;letter-spacing:0px;transform:scaleX(1.0903);transform-origin:left top;">HG00096.wgs...am Coverage</div>
<div class="t" style="left:419.0px;top:920.8px;font-size:20px;line-height:20px;font-weight:400;color:#111;letter-spacing:0px;transform:scaleX(1.0672);transform-origin:left top;">HG00096.wgs.ILLUMINA.bwa.G</div>
<div class="t" style="left:419.0px;top:952.3px;font-size:20px;line-height:20px;font-weight:400;color:#111;letter-spacing:0px;transform:scaleX(1.0744);transform-origin:left top;">h_cov_pcr_free.20140203.bam</div>
<div class="t" style="left:419.0px;top:1323.1px;font-size:20px;line-height:20px;font-weight:400;color:#111;letter-spacing:0px;transform:scaleX(1.0635);transform-origin:left top;">Refseq Genes</div>
<svg style="left:752px;top:530px" width="1896" height="752" viewBox="752 530 1896 752"><path d="M752 610 V565.0 H755.0 V562.7 H758.0 V559.8 H762.0 V561.6 H766.0 V565.4 H770.0 V564.3 H772.0 V561.0 H774.0 V565.6 H779.0 V571.3 H783.0 V570.9 H786.0 V570.4 H790.0 V561.9 H794.0 V557.7 H798.0 V556.3 H800.0 V558.9 H802.0 V556.2 H805.0 V558.2 H809.0 V551.7 H813.0 V551.1 H816.0 V546.7 H821.0 V546.0 H826.0 V551.6 H830.0 V550.6 H832.0 V550.3 H835.0 V545.3 H839.0 V545.6 H841.0 V544.0 H843.0 V547.4 H846.0 V555.6 H848.0 V554.7 H850.0 V558.9 H852.0 V564.5 H857.0 V571.8 H859.0 V577.6 H861.0 V574.3 H864.0 V571.2 H867.0 V572.7 H870.0 V566.7 H872.0 V562.5 H877.0 V562.9 H879.0 V559.6 H882.0 V556.8 H886.0 V554.1 H890.0 V556.3 H895.0 V554.4 H898.0 V552.6 H900.0 V549.4 H902.0 V552.3 H906.0 V553.5 H908.0 V561.8 H911.0 V563.0 H915.0 V558.9 H917.0 V559.6 H919.0 V559.0 H922.0 V563.0 H926.0 V566.2 H929.0 V565.4 H931.0 V571.2 H935.0 V573.9 H937.0 V575.6 H940.0 V579.0 H942.0 V579.2 H945.0 V579.6 H947.0 V577.7 H949.0 V579.6 H952.0 V574.5 H956.0 V572.0 H958.0 V578.3 H963.0 V578.4 H965.0 V580.2 H968.0 V573.8 H972.0 V570.9 H974.0 V572.8 H976.0 V570.1 H979.0 V569.0 H984.0 V571.2 H987.0 V567.9 H991.0 V562.5 H995.0 V566.3 H1000.0 V559.9 H1002.0 V560.6 H1006.0 V559.1 H1010.0 V554.9 H1013.0 V558.1 H1015.0 V554.6 H1017.0 V552.9 H1020.0 V551.3 H1022.0 V553.7 H1025.0 V550.3 H1027.0 V556.0 H1029.0 V555.6 H1032.0 V553.7 H1037.0 V553.2 H1039.0 V552.0 H1041.0 V553.3 H1044.0 V547.4 H1046.0 V545.5 H1051.0 V550.4 H1053.0 V546.5 H1056.0 V544.4 H1058.0 V546.0 H1062.0 V551.1 H1064.0 V553.7 H1069.0 V556.8 H1071.0 V554.9 H1074.0 V557.5 H1079.0 V563.5 H1081.0 V567.2 H1084.0 V568.9 H1086.0 V563.4 H1090.0 V563.5 H1095.0 V558.4 H1099.0 V556.6 H1101.0 V555.2 H1106.0 V560.4 H1109.0 V556.1 H1114.0 V556.3 H1119.0 V552.4 H1122.0 V545.8 H1126.0 V540.7 H1130.0 V537.3 H1134.0 V536.0 H1136.0 V534.0 H1141.0 V535.7 H1145.0 V534.4 H1148.0 V535.3 H1150.0 V538.6 H1152.0 V538.6 H1154.0 V540.3 H1157.0 V539.9 H1160.0 V538.5 H1162.0 V537.9 H1167.0 V541.1 H1172.0 V547.6 H1174.0 V544.6 H1177.0 V544.7 H1180.0 V548.1 H1182.0 V551.9 H1184.0 V555.2 H1187.0 V554.0 H1189.0 V558.8 H1192.0 V556.2 H1195.0 V555.9 H1199.0 V557.8 H1202.0 V556.1 H1206.0 V558.9 H1208.0 V560.2 H1211.0 V559.0 H1213.0 V557.5 H1216.0 V557.8 H1219.0 V552.2 H1223.0 V553.7 H1225.0 V550.8 H1227.0 V551.7 H1230.0 V557.0 H1232.0 V552.8 H1237.0 V555.9 H1239.0 V557.1 H1244.0 V560.4 H1247.0 V554.7 H1252.0 V553.2 H1255.0 V550.5 H1260.0 V555.8 H1263.0 V555.4 H1265.0 V561.6 H1268.0 V564.5 H1272.0 V565.4 H1276.0 V565.7 H1278.0 V571.9 H1283.0 V569.7 H1285.0 V569.0 H1290.0 V569.9 H1293.0 V574.6 H1298.0 V572.0 H1300.0 V573.9 H1304.0 V576.4 H1308.0 V574.7 H1311.0 V579.2 H1316.0 V578.9 H1318.0 V581.0 H1323.0 V574.6 H1325.0 V578.6 H1328.0 V575.4 H1331.0 V571.3 H1334.0 V574.3 H1339.0 V571.4 H1342.0 V569.5 H1344.0 V568.0 H1348.0 V567.3 H1351.0 V564.3 H1353.0 V564.8 H1355.0 V562.3 H1357.0 V565.5 H1360.0 V565.5 H1362.0 V569.9 H1366.0 V571.6 H1370.0 V569.3 H1375.0 V570.3 H1378.0 V566.8 H1383.0 V569.3 H1385.0 V569.2 H1389.0 V572.4 H1394.0 V573.7 H1396.0 V572.1 H1400.0 V573.5 H1405.0 V573.1 H1409.0 V580.1 H1411.0 V576.8 H1415.0 V574.2 H1418.0 V571.8 H1422.0 V575.0 H1424.0 V575.2 H1426.0 V574.8 H1428.0 V574.5 H1431.0 V569.9 H1435.0 V572.9 H1437.0 V575.9 H1439.0 V571.9 H1442.0 V568.6 H1445.0 V569.0 H1448.0 V568.1 H1451.0 V567.6 H1454.0 V563.5 H1456.0 V559.4 H1460.0 V557.6 H1463.0 V555.4 H1465.0 V555.7 H1467.0 V554.8 H1472.0 V553.0 H1477.0 V552.2 H1481.0 V552.9 H1484.0 V553.6 H1486.0 V547.7 H1490.0 V550.8 H1492.0 V546.2 H1495.0 V548.8 H1500.0 V552.4 H1504.0 V550.5 H1508.0 V553.6 H1513.0 V555.1 H1515.0 V556.8 H1519.0 V554.5 H1521.0 V557.9 H1526.0 V560.6 H1529.0 V558.2 H1532.0 V553.6 H1534.0 V557.7 H1536.0 V558.8 H1538.0 V557.3 H1540.0 V553.3 H1543.0 V555.3 H1546.0 V552.9 H1549.0 V547.5 H1554.0 V549.4 H1557.0 V545.0 H1559.0 V548.2 H1563.0 V543.5 H1566.0 V545.9 H1570.0 V545.0 H1573.0 V550.0 H1578.0 V550.4 H1580.0 V547.0 H1582.0 V552.6 H1586.0 V555.5 H1590.0 V554.9 H1592.0 V555.3 H1594.0 V563.7 H1596.0 V560.5 H1601.0 V561.4 H1603.0 V566.2 H1608.0 V568.3 H1610.0 V568.0 H1613.0 V566.9 H1616.0 V564.9 H1620.0 V565.6 H1625.0 V560.3 H1627.0 V559.5 H1630.0 V558.6 H1633.0 V559.4 H1635.0 V558.3 H1637.0 V555.7 H1639.0 V558.4 H1641.0 V558.8 H1646.0 V557.7 H1651.0 V553.0 H1655.0 V550.1 H1659.0 V550.1 H1662.0 V545.7 H1665.0 V548.3 H1667.0 V549.8 H1669.0 V544.1 H1672.0 V548.7 H1675.0 V545.6 H1680.0 V547.9 H1683.0 V543.6 H1686.0 V540.8 H1688.0 V541.9 H1691.0 V539.5 H1693.0 V547.5 H1696.0 V541.6 H1700.0 V547.6 H1703.0 V543.9 H1708.0 V545.9 H1710.0 V542.3 H1714.0 V542.9 H1716.0 V545.6 H1719.0 V542.2 H1724.0 V548.9 H1727.0 V543.6 H1729.0 V547.5 H1731.0 V546.3 H1734.0 V542.6 H1738.0 V546.9 H1740.0 V543.5 H1742.0 V544.1 H1745.0 V546.9 H1748.0 V546.9 H1752.0 V548.6 H1756.0 V550.6 H1758.0 V547.7 H1763.0 V553.6 H1767.0 V553.9 H1769.0 V554.4 H1771.0 V559.5 H1773.0 V560.2 H1777.0 V559.8 H1779.0 V560.3 H1782.0 V561.6 H1786.0 V562.9 H1789.0 V565.3 H1792.0 V567.0 H1795.0 V567.9 H1798.0 V564.5 H1803.0 V567.3 H1805.0 V561.5 H1809.0 V562.5 H1811.0 V562.3 H1816.0 V565.1 H1819.0 V564.5 H1821.0 V567.2 H1826.0 V566.5 H1828.0 V562.8 H1830.0 V559.7 H1833.0 V556.5 H1835.0 V563.3 H1837.0 V565.0 H1842.0 V566.0 H1844.0 V562.8 H1846.0 V556.6 H1848.0 V556.4 H1851.0 V558.5 H1853.0 V554.9 H1856.0 V550.8 H1858.0 V551.8 H1860.0 V553.4 H1863.0 V555.7 H1868.0 V556.2 H1871.0 V559.4 H1876.0 V565.6 H1878.0 V561.8 H1883.0 V562.0 H1886.0 V569.1 H1889.0 V573.6 H1893.0 V568.5 H1896.0 V569.3 H1901.0 V566.8 H1906.0 V561.7 H1911.0 V558.4 H1913.0 V559.7 H1915.0 V562.6 H1920.0 V555.3 H1925.0 V554.6 H1927.0 V558.7 H1930.0 V558.0 H1934.0 V563.1 H1936.0 V567.3 H1938.0 V564.9 H1943.0 V569.4 H1945.0 V570.3 H1948.0 V569.2 H1951.0 V572.3 H1954.0 V577.2 H1956.0 V579.2 H1958.0 V578.2 H1961.0 V573.8 H1965.0 V566.3 H1967.0 V558.6 H1972.0 V554.1 H1974.0 V560.0 H1979.0 V559.1 H1983.0 V564.0 H1987.0 V563.5 H1989.0 V565.4 H1992.0 V569.8 H1995.0 V569.0 H1997.0 V569.8 H2000.0 V573.4 H2003.0 V571.0 H2006.0 V568.3 H2008.0 V574.5 H2010.0 V569.0 H2014.0 V570.6 H2017.0 V569.5 H2022.0 V568.0 H2024.0 V571.9 H2029.0 V574.6 H2032.0 V572.2 H2035.0 V567.4 H2039.0 V565.3 H2044.0 V558.7 H2047.0 V554.2 H2050.0 V551.5 H2052.0 V556.7 H2057.0 V551.8 H2059.0 V550.0 H2062.0 V553.6 H2067.0 V559.3 H2070.0 V560.0 H2075.0 V560.8 H2078.0 V561.9 H2082.0 V558.5 H2084.0 V564.9 H2087.0 V568.0 H2090.0 V568.0 H2092.0 V566.6 H2096.0 V575.6 H2099.0 V580.1 H2104.0 V576.9 H2107.0 V579.8 H2111.0 V581.3 H2115.0 V585.0 H2117.0 V592.7 H2119.0 V584.4 H2121.0 V576.4 H2126.0 V572.2 H2131.0 V561.0 H2134.0 V557.1 H2136.0 V555.4 H2140.0 V554.9 H2143.0 V558.1 H2146.0 V557.7 H2149.0 V555.5 H2152.0 V550.4 H2157.0 V555.6 H2161.0 V555.7 H2164.0 V551.5 H2169.0 V553.8 H2171.0 V555.2 H2173.0 V553.0 H2177.0 V549.2 H2181.0 V551.5 H2183.0 V553.1 H2186.0 V547.3 H2188.0 V551.7 H2190.0 V550.2 H2193.0 V545.0 H2196.0 V545.7 H2199.0 V549.7 H2202.0 V546.3 H2204.0 V541.5 H2209.0 V539.5 H2214.0 V545.4 H2216.0 V540.2 H2219.0 V548.1 H2222.0 V546.5 H2224.0 V545.5 H2226.0 V549.6 H2228.0 V553.7 H2232.0 V555.2 H2236.0 V554.2 H2239.0 V556.9 H2242.0 V561.2 H2245.0 V562.9 H2249.0 V565.0 H2252.0 V570.7 H2255.0 V570.6 H2258.0 V569.4 H2260.0 V568.6 H2262.0 V573.7 H2264.0 V576.2 H2267.0 V576.1 H2271.0 V575.5 H2273.0 V577.7 H2275.0 V579.1 H2278.0 V579.3 H2281.0 V576.9 H2286.0 V576.6 H2288.0 V574.4 H2291.0 V572.4 H2295.0 V578.2 H2300.0 V575.0 H2303.0 V570.3 H2305.0 V566.9 H2307.0 V572.6 H2309.0 V569.9 H2311.0 V571.5 H2315.0 V572.9 H2317.0 V568.7 H2322.0 V567.0 H2327.0 V563.2 H2331.0 V562.8 H2333.0 V559.2 H2338.0 V558.4 H2341.0 V559.6 H2345.0 V557.2 H2348.0 V557.5 H2351.0 V555.0 H2354.0 V562.1 H2357.0 V561.4 H2362.0 V554.9 H2365.0 V555.8 H2367.0 V563.3 H2370.0 V572.3 H2375.0 V575.1 H2377.0 V578.9 H2379.0 V582.2 H2384.0 V582.3 H2386.0 V584.7 H2388.0 V590.7 H2390.0 V590.2 H2395.0 V587.1 H2399.0 V586.1 H2404.0 V587.7 H2408.0 V587.3 H2411.0 V585.3 H2415.0 V579.1 H2418.0 V580.9 H2421.0 V576.8 H2424.0 V576.7 H2427.0 V575.9 H2432.0 V575.9 H2435.0 V571.1 H2437.0 V570.5 H2441.0 V576.9 H2446.0 V576.0 H2448.0 V575.0 H2451.0 V580.2 H2454.0 V573.5 H2456.0 V570.0 H2458.0 V569.3 H2460.0 V566.3 H2462.0 V567.8 H2465.0 V563.3 H2467.0 V561.7 H2469.0 V555.3 H2472.0 V551.2 H2475.0 V547.8 H2480.0 V546.1 H2485.0 V548.4 H2487.0 V547.9 H2491.0 V545.7 H2494.0 V544.6 H2497.0 V542.3 H2500.0 V542.2 H2503.0 V547.3 H2506.0 V547.4 H2508.0 V544.1 H2510.0 V548.6 H2514.0 V544.0 H2518.0 V544.5 H2522.0 V545.3 H2524.0 V549.2 H2526.0 V550.5 H2530.0 V549.2 H2535.0 V546.2 H2537.0 V545.6 H2539.0 V546.7 H2541.0 V542.2 H2543.0 V542.0 H2547.0 V541.1 H2550.0 V541.3 H2553.0 V543.6 H2555.0 V542.4 H2560.0 V546.8 H2564.0 V544.9 H2568.0 V545.9 H2571.0 V554.7 H2576.0 V555.1 H2579.0 V558.7 H2581.0 V554.5 H2583.0 V553.2 H2586.0 V552.4 H2590.0 V549.5 H2592.0 V553.3 H2596.0 V546.5 H2599.0 V550.3 H2601.0 V544.7 H2606.0 V547.4 H2611.0 V545.2 H2614.0 V545.0 H2619.0 V538.1 H2621.0 V538.2 H2624.0 V538.9 H2626.0 V539.5 H2628.0 V537.5 H2630.0 V536.0 H2632.0 V541.4 H2636.0 V540.5 H2638.0 V540.9 H2640.0 V538.1 H2642.0 V538.7 H2645.0 V536.5 H2648.0 V610 Z" fill="#b0b0b0"/><rect x="811.2" y="548.1" width="3" height="30.9" fill="#d07a2a"/><rect x="811.2" y="579.1" width="3" height="30.9" fill="#2424e8"/><rect x="841.4" y="542.0" width="3" height="68.0" fill="#2f9a2f"/><rect x="910.7" y="556.1" width="3" height="53.9" fill="#d07a2a"/><rect x="918.9" y="560.6" width="3" height="27.2" fill="#d07a2a"/><rect x="918.9" y="587.8" width="3" height="22.2" fill="#2f9a2f"/><rect x="1035.4" y="548.3" width="3" height="27.8" fill="#e03020"/><rect x="1035.4" y="576.0" width="3" height="34.0" fill="#2424e8"/><rect x="1049.4" y="546.2" width="3" height="22.3" fill="#e03020"/><rect x="1049.4" y="568.5" width="3" height="41.5" fill="#2424e8"/><rect x="1069.3" y="549.7" width="3" height="60.3" fill="#2f9a2f"/><rect x="1134.9" y="536.0" width="3" height="33.3" fill="#d07a2a"/><rect x="1134.9" y="569.3" width="3" height="40.7" fill="#2424e8"/><rect x="1145.3" y="536.0" width="3" height="74.0" fill="#e03020"/><rect x="1280.5" y="564.9" width="3" height="18.0" fill="#e03020"/><rect x="1280.5" y="582.9" width="3" height="27.1" fill="#2424e8"/><rect x="1315.2" y="571.2" width="3" height="19.4" fill="#d07a2a"/><rect x="1315.2" y="590.6" width="3" height="19.4" fill="#2f9a2f"/><rect x="1351.4" y="562.7" width="3" height="47.3" fill="#2424e8"/><rect x="1372.8" y="564.7" width="3" height="18.1" fill="#d07a2a"/><rect x="1372.8" y="582.8" width="3" height="27.2" fill="#2424e8"/><rect x="1384.9" y="567.6" width="3" height="12.7" fill="#e03020"/><rect x="1384.9" y="580.3" width="3" height="29.7" fill="#2424e8"/><rect x="1415.2" y="573.2" width="3" height="16.6" fill="#d07a2a"/><rect x="1415.2" y="589.8" width="3" height="20.2" fill="#2424e8"/><rect x="1427.0" y="570.2" width="3" height="39.8" fill="#2f9a2f"/><rect x="1449.1" y="564.7" width="3" height="45.3" fill="#e03020"/><rect x="1458.3" y="559.7" width="3" height="10.1" fill="#e03020"/><rect x="1458.3" y="569.7" width="3" height="40.3" fill="#2424e8"/><rect x="1485.2" y="544.9" width="3" height="19.5" fill="#e03020"/><rect x="1485.2" y="564.4" width="3" height="45.6" fill="#2f9a2f"/><rect x="1509.2" y="550.2" width="3" height="59.8" fill="#2424e8"/><rect x="1541.3" y="548.7" width="3" height="18.4" fill="#e03020"/><rect x="1541.3" y="567.1" width="3" height="42.9" fill="#2424e8"/><rect x="1545.7" y="547.5" width="3" height="62.5" fill="#e03020"/><rect x="1575.2" y="543.8" width="3" height="36.4" fill="#2424e8"/><rect x="1575.2" y="580.2" width="3" height="29.8" fill="#2f9a2f"/><rect x="1587.3" y="552.3" width="3" height="23.1" fill="#e03020"/><rect x="1587.3" y="575.4" width="3" height="34.6" fill="#2424e8"/><rect x="1606.9" y="566.0" width="3" height="24.2" fill="#d07a2a"/><rect x="1606.9" y="590.2" width="3" height="19.8" fill="#2f9a2f"/><rect x="1625.3" y="558.4" width="3" height="51.6" fill="#e03020"/><rect x="1725.0" y="541.8" width="3" height="30.7" fill="#e03020"/><rect x="1725.0" y="572.5" width="3" height="37.5" fill="#2424e8"/><rect x="1735.4" y="542.8" width="3" height="33.6" fill="#d07a2a"/><rect x="1735.4" y="576.4" width="3" height="33.6" fill="#2f9a2f"/><rect x="1739.1" y="543.1" width="3" height="33.5" fill="#2424e8"/><rect x="1739.1" y="576.5" width="3" height="33.5" fill="#2f9a2f"/><rect x="1749.4" y="544.0" width="3" height="33.0" fill="#e03020"/><rect x="1749.4" y="577.0" width="3" height="33.0" fill="#2424e8"/><rect x="1753.1" y="544.4" width="3" height="26.3" fill="#e03020"/><rect x="1753.1" y="570.6" width="3" height="39.4" fill="#2424e8"/><rect x="1769.7" y="552.4" width="3" height="17.3" fill="#e03020"/><rect x="1769.7" y="569.7" width="3" height="40.3" fill="#d07a2a"/><rect x="1781.5" y="558.3" width="3" height="25.9" fill="#d07a2a"/><rect x="1781.5" y="584.1" width="3" height="25.9" fill="#2f9a2f"/><rect x="1785.2" y="560.1" width="3" height="19.9" fill="#e03020"/><rect x="1785.2" y="580.1" width="3" height="29.9" fill="#2424e8"/><rect x="1847.8" y="554.0" width="3" height="28.0" fill="#d07a2a"/><rect x="1847.8" y="582.0" width="3" height="28.0" fill="#2f9a2f"/><rect x="1850.8" y="551.5" width="3" height="23.4" fill="#e03020"/><rect x="1850.8" y="574.9" width="3" height="35.1" fill="#2424e8"/><rect x="1859.6" y="547.8" width="3" height="6.2" fill="#d07a2a"/><rect x="1859.6" y="554.1" width="3" height="55.9" fill="#2424e8"/><rect x="1889.5" y="566.1" width="3" height="13.2" fill="#d07a2a"/><rect x="1889.5" y="579.3" width="3" height="30.7" fill="#2f9a2f"/><rect x="1905.0" y="560.1" width="3" height="20.0" fill="#d07a2a"/><rect x="1905.0" y="580.1" width="3" height="29.9" fill="#2f9a2f"/><rect x="1913.5" y="556.4" width="3" height="10.7" fill="#e03020"/><rect x="1913.5" y="567.1" width="3" height="42.9" fill="#d07a2a"/><rect x="1919.0" y="554.0" width="3" height="16.8" fill="#e03020"/><rect x="1919.0" y="570.8" width="3" height="39.2" fill="#d07a2a"/><rect x="1991.5" y="561.9" width="3" height="24.1" fill="#d07a2a"/><rect x="1991.5" y="585.9" width="3" height="24.1" fill="#2f9a2f"/><rect x="1999.8" y="566.0" width="3" height="13.2" fill="#e03020"/><rect x="1999.8" y="579.2" width="3" height="30.8" fill="#d07a2a"/><rect x="2007.5" y="568.2" width="3" height="29.3" fill="#e03020"/><rect x="2007.5" y="597.5" width="3" height="12.5" fill="#2424e8"/><rect x="2029.3" y="566.6" width="3" height="43.4" fill="#d07a2a"/><rect x="2051.4" y="548.9" width="3" height="30.5" fill="#d07a2a"/><rect x="2051.4" y="579.5" width="3" height="30.5" fill="#2f9a2f"/><rect x="2059.1" y="551.2" width="3" height="29.4" fill="#e03020"/><rect x="2059.1" y="580.6" width="3" height="29.4" fill="#2424e8"/><rect x="2091.2" y="564.1" width="3" height="27.6" fill="#e03020"/><rect x="2091.2" y="591.6" width="3" height="18.4" fill="#2424e8"/><rect x="2099.3" y="571.2" width="3" height="15.5" fill="#e03020"/><rect x="2099.3" y="586.7" width="3" height="23.3" fill="#2424e8"/><rect x="2105.9" y="577.0" width="3" height="16.5" fill="#d07a2a"/><rect x="2105.9" y="593.5" width="3" height="16.5" fill="#2f9a2f"/><rect x="2117.0" y="586.8" width="3" height="11.6" fill="#e03020"/><rect x="2117.0" y="598.4" width="3" height="11.6" fill="#2424e8"/><rect x="2131.0" y="558.9" width="3" height="25.6" fill="#d07a2a"/><rect x="2131.0" y="584.4" width="3" height="25.6" fill="#2f9a2f"/><rect x="2205.5" y="540.4" width="3" height="20.9" fill="#e03020"/><rect x="2205.5" y="561.3" width="3" height="48.7" fill="#d07a2a"/><rect x="2213.2" y="539.2" width="3" height="28.3" fill="#e03020"/><rect x="2213.2" y="567.5" width="3" height="42.5" fill="#2424e8"/><rect x="2249.4" y="561.4" width="3" height="14.6" fill="#e03020"/><rect x="2249.4" y="576.0" width="3" height="34.0" fill="#d07a2a"/><rect x="2267.5" y="567.6" width="3" height="21.2" fill="#d07a2a"/><rect x="2267.5" y="588.8" width="3" height="21.2" fill="#2f9a2f"/><rect x="2317.2" y="563.9" width="3" height="23.1" fill="#d07a2a"/><rect x="2317.2" y="586.9" width="3" height="23.1" fill="#2f9a2f"/><rect x="2344.9" y="557.1" width="3" height="21.2" fill="#e03020"/><rect x="2344.9" y="578.3" width="3" height="31.7" fill="#2424e8"/><rect x="2379.2" y="573.8" width="3" height="36.2" fill="#2424e8"/><rect x="2391.7" y="588.7" width="3" height="10.7" fill="#d07a2a"/><rect x="2391.7" y="599.3" width="3" height="10.7" fill="#2f9a2f"/><rect x="2403.1" y="583.0" width="3" height="16.2" fill="#e03020"/><rect x="2403.1" y="599.2" width="3" height="10.8" fill="#2424e8"/><rect x="2427.1" y="571.0" width="3" height="19.5" fill="#d07a2a"/><rect x="2427.1" y="590.5" width="3" height="19.5" fill="#2f9a2f"/><rect x="2520.8" y="540.8" width="3" height="69.2" fill="#d07a2a"/><rect x="2555.1" y="541.9" width="3" height="30.7" fill="#e03020"/><rect x="2555.1" y="572.5" width="3" height="37.5" fill="#2424e8"/><rect x="752" y="609.5" width="1896" height="2" fill="#7a7a7a"/><rect x="752" y="611.5" width="1896" height="6.5" fill="#fafafa"/><rect x="752" y="618" width="1896" height="24" fill="#c8c8c8"/><rect x="752" y="646" width="1896" height="24" fill="#c8c8c8"/><rect x="752" y="674" width="1896" height="24" fill="#c8c8c8"/><rect x="752" y="702" width="1896" height="24" fill="#c8c8c8"/><rect x="752" y="730" width="1896" height="24" fill="#c8c8c8"/><rect x="752" y="758" width="1896" height="24" fill="#c8c8c8"/><rect x="752" y="786" width="1896" height="24" fill="#c8c8c8"/><rect x="752" y="814" width="1896" height="24" fill="#c8c8c8"/><rect x="752" y="842" width="1896" height="24" fill="#c8c8c8"/><rect x="752" y="870" width="1896" height="24" fill="#c8c8c8"/><rect x="752" y="898" width="1896" height="24" fill="#c8c8c8"/><rect x="752" y="926" width="1896" height="24" fill="#c8c8c8"/><rect x="752" y="954" width="1896" height="24" fill="#c8c8c8"/><rect x="752" y="982" width="1896" height="24" fill="#c8c8c8"/><rect x="752" y="1010" width="1896" height="24" fill="#c8c8c8"/><rect x="752" y="1038" width="1896" height="24" fill="#c8c8c8"/><rect x="752" y="1066" width="1896" height="24" fill="#c8c8c8"/><rect x="752" y="1094" width="1896" height="24" fill="#c8c8c8"/><rect x="752" y="1122" width="1896" height="24" fill="#c8c8c8"/><rect x="752" y="1150" width="1896" height="24" fill="#c8c8c8"/><rect x="752" y="1178" width="1896" height="24" fill="#c8c8c8"/><rect x="752" y="1206" width="1896" height="24" fill="#c8c8c8"/><rect x="752" y="1234" width="1896" height="24" fill="#c8c8c8"/><rect x="752" y="1262" width="1896" height="24" fill="#c8c8c8"/><path d="M808.4 618v24M998.8 618v24M1269.5 618v24M1506.4 618v24M1615.3 618v24M1820.7 618v24M1990.3 618v24M2167.4 618v24M2457.8 618v24M2639.2 618v24M839.8 646v24M933.4 646v24M1162.6 646v24M1418.8 646v24M1497.4 646v24M1762.9 646v24M2003.3 646v24M2151.6 646v24M2380.2 646v24M2618.5 646v24M847.2 674v24M998.2 674v24M1185.8 674v24M1331.6 674v24M1382.1 674v24M1620.2 674v24M1727.6 674v24M1850.6 674v24M2099.7 674v24M2299.3 674v24M2560.6 674v24M780.3 702v24M915.4 702v24M1051.3 702v24M1308.8 702v24M1416.9 702v24M1544.6 702v24M1844.4 702v24M2108.3 702v24M2329.1 702v24M2403.5 702v24M2594.5 702v24M853.2 730v24M1127.2 730v24M1350.2 730v24M1449.6 730v24M1698.4 730v24M1919.1 730v24M2027.6 730v24M2296.3 730v24M2589.1 730v24M788.2 758v24M863.5 758v24M1093.6 758v24M1159.8 758v24M1431.4 758v24M1572.5 758v24M1833.5 758v24M1965.7 758v24M2237.5 758v24M2428.0 758v24M2609.5 758v24M828.0 786v24M927.7 786v24M1000.3 786v24M1095.0 786v24M1294.9 786v24M1580.9 786v24M1682.4 786v24M1930.1 786v24M2012.2 786v24M2212.8 786v24M2498.2 786v24M824.5 814v24M1019.3 814v24M1106.1 814v24M1227.9 814v24M1341.0 814v24M1396.9 814v24M1659.9 814v24M1861.0 814v24M2051.6 814v24M2141.0 814v24M2304.0 814v24M2534.5 814v24M837.9 842v24M934.4 842v24M1199.7 842v24M1348.5 842v24M1423.3 842v24M1505.0 842v24M1596.2 842v24M1729.0 842v24M1772.8 842v24M1988.3 842v24M2086.2 842v24M2235.2 842v24M2330.9 842v24M2515.1 842v24M803.8 870v24M976.3 870v24M1269.4 870v24M1482.6 870v24M1581.1 870v24M1836.0 870v24M1988.0 870v24M2073.5 870v24M2201.4 870v24M2370.1 870v24M2626.6 870v24M825.6 898v24M875.3 898v24M946.3 898v24M1151.8 898v24M1323.2 898v24M1377.3 898v24M1649.6 898v24M1926.6 898v24M2026.7 898v24M2208.0 898v24M2283.7 898v24M2475.5 898v24M2542.2 898v24M783.9 926v24M865.4 926v24M1149.6 926v24M1222.0 926v24M1401.2 926v24M1557.0 926v24M1642.0 926v24M1922.4 926v24M2201.3 926v24M2475.1 926v24M806.0 954v24M951.1 954v24M1064.4 954v24M1240.1 954v24M1494.0 954v24M1627.1 954v24M1872.2 954v24M1992.4 954v24M2210.6 954v24M2372.4 954v24M2426.4 954v24M777.1 982v24M951.8 982v24M1074.1 982v24M1253.9 982v24M1492.6 982v24M1589.9 982v24M1703.0 982v24M1911.4 982v24M2143.5 982v24M2433.9 982v24M868.1 1010v24M1075.7 1010v24M1132.4 1010v24M1407.3 1010v24M1557.4 1010v24M1647.0 1010v24M1935.5 1010v24M2172.6 1010v24M2221.2 1010v24M2462.5 1010v24M774.7 1038v24M1022.9 1038v24M1112.9 1038v24M1367.7 1038v24M1527.8 1038v24M1722.0 1038v24M1957.0 1038v24M2251.6 1038v24M2459.3 1038v24M780.1 1066v24M989.1 1066v24M1241.5 1066v24M1381.7 1066v24M1675.5 1066v24M1822.8 1066v24M2045.0 1066v24M2299.1 1066v24M2344.3 1066v24M2483.6 1066v24M2593.1 1066v24M782.9 1094v24M857.2 1094v24M1089.8 1094v24M1162.4 1094v24M1378.0 1094v24M1483.7 1094v24M1684.0 1094v24M1979.8 1094v24M2129.1 1094v24M2209.6 1094v24M2343.1 1094v24M2458.8 1094v24M860.8 1122v24M909.0 1122v24M997.7 1122v24M1271.0 1122v24M1404.9 1122v24M1539.5 1122v24M1596.3 1122v24M1889.2 1122v24M1998.9 1122v24M2153.2 1122v24M2354.7 1122v24M2585.8 1122v24M2638.7 1122v24M761.8 1150v24M976.3 1150v24M1261.8 1150v24M1432.4 1150v24M1692.1 1150v24M1897.9 1150v24M2108.4 1150v24M2227.1 1150v24M2417.7 1150v24M2512.5 1150v24M837.5 1178v24M1046.1 1178v24M1151.3 1178v24M1227.7 1178v24M1473.8 1178v24M1603.7 1178v24M1657.6 1178v24M1859.0 1178v24M1980.9 1178v24M2264.1 1178v24M2422.1 1178v24M764.0 1206v24M970.0 1206v24M1024.0 1206v24M1240.9 1206v24M1375.3 1206v24M1509.0 1206v24M1784.5 1206v24M1913.6 1206v24M2070.7 1206v24M2302.0 1206v24M2557.6 1206v24M827.2 1234v24M919.9 1234v24M990.1 1234v24M1273.5 1234v24M1442.3 1234v24M1611.4 1234v24M1708.9 1234v24M1969.4 1234v24M2227.8 1234v24M2404.5 1234v24M859.8 1262v24M930.2 1262v24M1195.4 1262v24M1329.3 1262v24M1600.6 1262v24M1799.0 1262v24M2062.6 1262v24M2308.1 1262v24M2586.4 1262v24" stroke="#f6f6f6" stroke-width="3.6"/><path d="M1746.5 618v24M1844.7 646v24M2112.5 702v24M2018.6 730v24M1336.8 730v24M2485.8 786v24M2203.7 814v24M1511.2 842v24M851.2 954v24M823.1 982v24M1233.8 982v24M1485.5 1066v24M2566.2 1150v24M1054.6 1150v24M809.0 1178v24M1307.7 1178v24M2166.6 1206v24M1088.4 1234v24M1361.4 1234v24M2300.1 1262v24" stroke="#3535dc" stroke-opacity="0.45" stroke-width="2"/><path d="M923.1 842v24M1092.5 842v24M1820.2 898v24M1048.8 954v24M2157.2 982v24" stroke="#3535dc" stroke-opacity="0.45" stroke-width="2.5"/><path d="M1804.4 618v24M1638.4 618v24M2630.7 898v24M1806.1 1234v24" stroke="#3535dc" stroke-opacity="0.45" stroke-width="3"/><path d="M2176.0 646v24M1878.4 702v24M1136.0 786v24M1183.5 814v24M984.8 898v24M2590.9 954v24M1504.9 1010v24M1694.0 1038v24M1694.6 1066v24M1488.5 1066v24M980.0 1122v24M2442.3 1206v24M1127.9 1206v24M1760.4 1234v24" stroke="#3535dc" stroke-opacity="0.6" stroke-width="2"/><path d="M1818.6 674v24M2518.5 842v24M867.3 842v24M1097.9 926v24M1356.9 954v24M1130.9 1010v24M2343.7 1038v24M976.2 1122v24M1570.1 1178v24" stroke="#3535dc" stroke-opacity="0.6" stroke-width="2.5"/><path d="M1614.1 674v24M2122.2 926v24M2250.8 954v24M2313.3 1010v24M785.3 1038v24M1406.4 1122v24M2259.8 1234v24M2006.3 1262v24" stroke="#3535dc" stroke-opacity="0.6" stroke-width="3"/><path d="M1421.5 646v24M2315.9 646v24M1797.5 646v24M974.6 674v24M2318.0 674v24M2549.2 786v24M2623.3 898v24M2114.7 926v24M2545.4 954v24M866.0 1010v24M2538.4 1010v24M1186.5 1066v24M2253.3 1094v24M2262.6 1150v24M1615.3 1178v24M1898.4 1178v24M1710.2 1178v24M1242.0 1206v24M2155.9 1234v24M1741.3 1234v24M842.2 1262v24" stroke="#3535dc" stroke-opacity="0.75" stroke-width="2"/><path d="M1123.8 646v24M1877.5 702v24M2623.3 842v24M1558.6 1038v24M2025.6 1122v24M853.5 1262v24M1582.6 1262v24" stroke="#3535dc" stroke-opacity="0.75" stroke-width="2.5"/><path d="M830.1 618v24M1971.2 730v24M2248.3 786v24M792.0 842v24M2158.8 842v24M1818.4 898v24M2289.2 898v24M1092.9 926v24M1544.5 1038v24M831.0 1122v24M1830.7 1150v24M1753.9 1150v24M1094.1 1234v24M2487.7 1234v24" stroke="#3535dc" stroke-opacity="0.75" stroke-width="3"/><path d="M2165.4 646v24M1478.9 674v24M1433.8 674v24M1992.7 758v24M957.1 758v24M882.1 814v24M2356.2 870v24M2429.1 898v24M1065.7 926v24M2010.4 926v24M1950.9 926v24M1000.2 954v24M842.2 954v24M1291.8 982v24M1502.8 1038v24M1262.2 1094v24M891.8 1094v24M1447.7 1122v24M1453.5 1122v24M1467.0 1178v24M1129.1 1206v24M1154.4 1234v24" stroke="#4a4ae0" stroke-opacity="0.5" stroke-width="2"/><path d="M2179.6 646v24M1007.5 646v24M1200.4 730v24M2628.4 758v24M2402.0 786v24M1466.4 814v24M2342.3 842v24M1351.3 1206v24M1153.5 1234v24M2338.3 1262v24" stroke="#4a4ae0" stroke-opacity="0.5" stroke-width="2.5"/><path d="M2164.4 674v24M2428.9 674v24M1286.9 730v24M789.5 842v24M849.4 898v24M1870.9 954v24M2038.3 982v24M2533.7 982v24M764.6 1038v24M1316.7 1038v24M1686.4 1094v24M1961.4 1122v24M1510.3 1178v24" stroke="#4a4ae0" stroke-opacity="0.5" stroke-width="3"/><path d="M1686.3 646v24M1604.4 646v24M1121.4 646v24M2492.5 674v24M1950.1 702v24M2408.8 786v24M2060.7 814v24M2282.5 814v24M1592.3 842v24M2303.3 870v24M1055.5 954v24M1040.4 982v24M1587.9 982v24M1640.8 1066v24M2509.9 1066v24M2243.5 1094v24M2478.9 1150v24M1315.6 1178v24M1125.8 1206v24M2250.3 1234v24" stroke="#4a4ae0" stroke-opacity="0.7" stroke-width="2"/><path d="M1692.3 674v24M1791.5 730v24M880.1 786v24M2508.5 786v24M1946.5 786v24M2377.1 814v24M2465.0 870v24M831.8 898v24M1560.7 954v24M1145.5 954v24M1579.8 982v24M2184.7 1038v24M757.9 1066v24M947.8 1262v24" stroke="#4a4ae0" stroke-opacity="0.7" stroke-width="2.5"/><path d="M2609.8 702v24M1888.1 702v24M844.2 730v24M945.0 758v24M2598.2 786v24M2056.9 954v24M2410.4 982v24M1658.3 1038v24M2351.3 1094v24M1988.2 1262v24" stroke="#4a4ae0" stroke-opacity="0.7" stroke-width="3"/><path d="M1428.7 646v24M2576.3 674v24M896.2 702v24M2020.0 730v24M1152.1 730v24M1765.4 758v24M2195.5 758v24M1226.9 786v24M2292.4 814v24M883.6 814v24M1667.0 814v24M1290.5 842v24M1297.0 842v24M1204.3 870v24M1627.9 870v24M2049.7 898v24M2119.1 926v24M1331.6 954v24M1439.9 982v24M2358.7 1094v24M1621.8 1094v24M1557.7 1094v24M2543.8 1150v24M2002.6 1150v24M1375.1 1206v24" stroke="#4a4ae0" stroke-opacity="0.85" stroke-width="2"/><path d="M1807.1 702v24M839.1 730v24M1115.5 730v24M2076.1 730v24M1393.2 758v24M2048.0 786v24M1312.0 898v24M854.4 954v24M2039.6 982v24M1620.0 1262v24" stroke="#4a4ae0" stroke-opacity="0.85" stroke-width="2.5"/><path d="M2438.8 618v24M827.6 674v24M1674.0 730v24M1410.9 758v24M2159.5 758v24M1930.4 786v24M2450.5 786v24M1669.4 814v24M1737.6 842v24M1203.7 870v24M1648.2 926v24M1343.5 954v24M2622.1 1010v24M1625.0 1010v24M1116.0 1150v24M1574.3 1178v24" stroke="#4a4ae0" stroke-opacity="0.85" stroke-width="3"/><path d="M1462.7 674v24M2184.9 702v24M2247.8 702v24M1762.7 702v24M1942.5 702v24M1048.8 730v24M1758.6 786v24M2501.2 786v24M1794.8 926v24M1804.8 982v24M1498.4 1010v24M797.2 1038v24M1769.8 1038v24M1554.2 1038v24M965.5 1150v24M1261.4 1206v24M2210.3 1206v24M2125.5 1262v24" stroke="#5cd84a" stroke-opacity="0.45" stroke-width="2"/><path d="M2487.4 786v24M1327.9 842v24M1872.1 870v24M1756.1 870v24M847.1 898v24M1731.6 926v24M1235.1 926v24M1742.2 982v24M2116.5 1122v24M2281.3 1150v24M2348.4 1206v24M2002.9 1234v24" stroke="#5cd84a" stroke-opacity="0.45" stroke-width="2.5"/><path d="M2216.5 646v24M2487.0 674v24M983.0 786v24M2058.0 814v24M2380.8 814v24M1283.5 898v24M1048.4 954v24M1423.0 954v24M2270.5 1010v24M1692.5 1066v24M1195.1 1066v24M1618.4 1094v24" stroke="#5cd84a" stroke-opacity="0.45" stroke-width="3"/><path d="M1825.1 618v24M794.8 646v24M2279.3 646v24M2117.9 702v24M2110.6 758v24M2328.1 758v24M1196.3 814v24M844.5 814v24M1096.4 842v24M2561.9 842v24M1972.3 926v24M1026.3 1038v24M2640.4 1038v24M976.3 1066v24M2424.8 1122v24M2005.7 1150v24M1753.3 1150v24M1665.6 1150v24M1925.6 1178v24M2060.0 1178v24M1360.6 1178v24M1061.2 1234v24M2497.8 1234v24M2647.5 1234v24" stroke="#5cd84a" stroke-opacity="0.5" stroke-width="2"/><path d="M2217.4 674v24M2507.4 758v24M2142.1 842v24M1538.5 870v24M2250.6 926v24M1566.9 954v24M1954.1 954v24M1312.1 1066v24M797.5 1066v24M1678.7 1094v24M1432.0 1150v24M1135.4 1206v24M1600.2 1206v24M2639.4 1234v24M843.5 1262v24" stroke="#5cd84a" stroke-opacity="0.5" stroke-width="2.5"/><path d="M818.4 618v24M1011.5 702v24M1285.3 730v24M1178.0 786v24M2207.3 814v24M2062.3 814v24M2400.1 870v24M1522.9 870v24M1488.4 954v24M1321.0 1010v24M1387.8 1122v24M2044.3 1178v24M2257.0 1206v24M2057.9 1234v24" stroke="#5cd84a" stroke-opacity="0.5" stroke-width="3"/><path d="M1652.6 618v24M904.8 674v24M2602.8 702v24M1789.4 702v24M1211.7 730v24M1413.5 730v24M1288.6 758v24M2179.9 814v24M943.0 814v24M986.4 842v24M1438.2 898v24M1893.0 982v24M1444.6 982v24M1310.3 982v24M1419.3 1010v24M1405.1 1150v24M1918.0 1234v24" stroke="#5cd84a" stroke-opacity="0.6" stroke-width="2"/><path d="M979.5 898v24M1741.1 898v24M1321.4 1038v24M1204.0 1066v24M2254.7 1094v24M1885.7 1150v24M1297.0 1178v24" stroke="#5cd84a" stroke-opacity="0.6" stroke-width="2.5"/><path d="M978.6 646v24M1390.3 702v24M1981.8 730v24M1145.6 814v24M1004.9 898v24M2124.5 1038v24M861.8 1122v24M1078.0 1206v24" stroke="#5cd84a" stroke-opacity="0.6" stroke-width="3"/><path d="M1170.7 618v24M805.4 674v24M2638.4 674v24M2550.6 702v24M2116.8 702v24M2226.0 730v24M1949.0 814v24M1319.3 898v24M1401.5 898v24M1046.3 954v24M1752.0 954v24M1513.4 1010v24M1734.1 1066v24M2179.9 1094v24M1498.5 1150v24M2265.5 1150v24M2107.3 1150v24M1537.3 1150v24M2189.5 1178v24M818.0 1178v24M1920.3 1234v24M2553.7 1262v24" stroke="#5cd84a" stroke-opacity="0.7" stroke-width="2"/><path d="M1524.6 646v24M1428.8 674v24M2550.0 814v24M1319.4 814v24M2462.4 926v24M2405.0 982v24M1625.6 1010v24M2157.8 1094v24M2344.5 1262v24M1568.6 1262v24" stroke="#5cd84a" stroke-opacity="0.7" stroke-width="2.5"/><path d="M1013.4 618v24M2614.6 646v24M2176.0 646v24M2120.0 646v24M2082.8 730v24M2021.5 758v24M2384.4 870v24M1513.5 898v24M2571.8 1094v24M2076.4 1122v24M969.8 1150v24" stroke="#5cd84a" stroke-opacity="0.7" stroke-width="3"/><path d="M1924.2 674v24M1108.5 730v24M1114.4 730v24M2341.9 814v24M1828.5 814v24M2281.9 870v24M1080.0 926v24M1178.7 954v24M1984.3 1010v24M2609.9 1038v24M1735.8 1038v24M2262.8 1094v24M1214.8 1150v24M2278.3 1178v24M2264.7 1206v24M1780.9 1234v24M1749.4 1234v24M2642.8 1234v24" stroke="#5cd84a" stroke-opacity="0.75" stroke-width="2"/><path d="M1148.9 730v24M2449.1 786v24M1043.7 954v24M2634.1 1038v24M2290.2 1094v24M2226.4 1122v24M2340.9 1262v24" stroke="#5cd84a" stroke-opacity="0.75" stroke-width="2.5"/><path d="M984.5 702v24M2386.9 814v24M908.9 898v24M1049.7 954v24M947.8 1038v24M1619.8 1094v24M1084.5 1150v24" stroke="#5cd84a" stroke-opacity="0.75" stroke-width="3"/><path d="M2172.4 646v24M906.3 674v24M977.1 702v24M2620.0 730v24M1402.0 814v24M1972.9 842v24M900.7 842v24M2353.3 954v24M1301.8 954v24M2310.3 982v24M2423.1 1038v24M760.2 1066v24M1638.5 1066v24M1452.1 1094v24M1429.4 1094v24M2125.2 1094v24M2425.8 1122v24M1965.8 1122v24M1064.3 1150v24M1134.6 1206v24M2014.1 1234v24M1172.2 1262v24M1012.0 1262v24" stroke="#5cd84a" stroke-opacity="0.85" stroke-width="2"/><path d="M1059.6 618v24M1012.7 702v24M2178.3 758v24M2622.5 1010v24M1545.3 1038v24M1655.5 1150v24M815.2 1178v24M1131.5 1206v24M1040.1 1262v24" stroke="#5cd84a" stroke-opacity="0.85" stroke-width="2.5"/><path d="M2097.9 618v24M2550.6 618v24M2612.9 674v24M1227.3 786v24M2445.0 786v24M2445.1 786v24M877.5 870v24M2462.4 926v24M1511.3 1010v24M2416.7 1038v24M1505.8 1094v24M1197.1 1122v24M2276.1 1234v24M1991.5 1262v24M1876.3 1262v24" stroke="#5cd84a" stroke-opacity="0.85" stroke-width="3"/><path d="M2609.9 618v24M1852.2 646v24M2115.7 702v24M1808.3 702v24M2119.9 786v24M1788.6 814v24M1316.8 842v24M1664.2 842v24M1562.4 954v24M2435.1 982v24M2196.3 982v24M1082.6 1010v24M1654.9 1010v24M1682.4 1038v24M1257.5 1094v24M2350.0 1094v24M1598.3 1122v24M979.7 1122v24M2320.6 1150v24M2057.2 1178v24M1606.4 1178v24M2482.1 1206v24M2505.6 1234v24M1205.5 1262v24" stroke="#88cc88" stroke-opacity="0.5" stroke-width="2"/><path d="M1835.9 646v24M1563.0 646v24M1085.4 786v24M1972.8 898v24M1438.2 954v24M2425.8 1038v24M2223.4 1066v24M2124.8 1150v24M1915.8 1234v24M1907.5 1234v24M1994.3 1262v24" stroke="#88cc88" stroke-opacity="0.5" stroke-width="2.5"/><path d="M1850.4 618v24M2210.4 646v24M2467.3 646v24M1893.5 702v24M1923.8 702v24M1823.5 814v24M2533.1 870v24M1359.7 954v24M1297.3 954v24M1158.1 954v24M2209.2 1066v24M1255.8 1206v24" stroke="#88cc88" stroke-opacity="0.5" stroke-width="3"/><path d="M1055.6 646v24M2488.2 674v24M1139.9 730v24M1851.2 730v24M2514.7 758v24M2517.0 786v24M2293.4 786v24M1321.2 842v24M1982.4 842v24M1009.8 898v24M1818.0 898v24M1283.8 898v24M2048.1 898v24M1052.4 926v24M1051.2 954v24M2580.8 954v24M2326.2 954v24M1842.9 982v24M1151.5 1010v24M797.3 1038v24M2355.7 1038v24M1628.6 1094v24M2118.4 1094v24M1524.8 1122v24M1247.9 1150v24M1543.6 1178v24M2441.7 1206v24M2626.4 1234v24M2427.2 1234v24" stroke="#88cc88" stroke-opacity="0.7" stroke-width="2"/><path d="M1803.2 618v24M1360.6 674v24M2612.6 674v24M1792.9 898v24M1067.5 954v24M1984.8 954v24M1633.3 982v24M1192.5 1010v24M1877.9 1010v24M1031.8 1038v24M2613.3 1094v24M2114.3 1094v24M767.3 1178v24M2444.8 1206v24M2265.0 1206v24M1996.8 1262v24" stroke="#88cc88" stroke-opacity="0.7" stroke-width="2.5"/><path d="M918.3 674v24M974.8 702v24M2480.1 758v24M841.7 758v24M779.9 786v24M795.3 814v24M1958.4 814v24M2097.5 842v24M1617.4 898v24M2030.4 954v24M1469.9 1066v24M1091.7 1150v24M1416.2 1150v24" stroke="#88cc88" stroke-opacity="0.7" stroke-width="3"/><path d="M1796.9 618v24M1465.3 674v24M1088.3 702v24M2176.5 758v24M1282.5 786v24M1204.1 842v24M2621.0 898v24M2561.0 898v24M851.5 898v24M1876.6 926v24M2221.0 926v24M1882.8 954v24M1003.8 982v24M1288.1 1010v24M2246.9 1038v24M1638.6 1066v24M1382.0 1122v24M967.5 1150v24M1287.6 1234v24M2209.2 1262v24" stroke="#88cc88" stroke-opacity="0.85" stroke-width="2"/><path d="M976.9 618v24M1213.3 730v24M1282.7 786v24M779.5 842v24M1465.8 870v24M2501.1 926v24M2143.1 954v24M758.1 1038v24M1156.5 1038v24M2073.0 1094v24M1192.1 1122v24M2100.7 1150v24M1209.3 1206v24M2312.1 1206v24M1182.8 1262v24" stroke="#88cc88" stroke-opacity="0.85" stroke-width="2.5"/><path d="M832.0 618v24M2054.0 646v24M2584.8 646v24M1549.4 646v24M1305.8 646v24M1453.6 674v24M842.9 674v24M1324.4 814v24M908.4 842v24M1978.4 926v24M1183.5 982v24M2281.7 1122v24M862.6 1122v24M1284.4 1178v24M2373.4 1178v24M2480.6 1206v24" stroke="#88cc88" stroke-opacity="0.85" stroke-width="3"/><path d="M2427.1 618v24M1251.4 646v24M1050.8 646v24M2136.0 674v24M2487.1 674v24M2107.0 702v24M1913.8 702v24M938.3 702v24M899.8 758v24M828.8 758v24M2517.1 786v24M1760.1 786v24M1134.4 814v24M911.2 842v24M2136.6 870v24M1316.1 898v24M763.8 926v24M2299.4 982v24M1031.8 982v24M1323.4 1010v24M2373.5 1010v24M2416.0 1038v24M2239.6 1038v24M1860.3 1038v24M2207.4 1066v24M2409.5 1094v24M1961.2 1094v24M2152.6 1094v24M2592.6 1094v24M1532.1 1122v24M1315.2 1122v24M1297.9 1178v24M1651.6 1206v24M2122.0 1262v24" stroke="#9090d8" stroke-opacity="0.5" stroke-width="2"/><path d="M1227.6 646v24M1137.9 646v24M1813.6 702v24M2632.9 758v24M2498.1 870v24M1734.2 870v24M1610.3 954v24M2081.8 954v24M1016.9 954v24M2321.7 954v24M2451.3 1010v24M1148.7 1010v24M1029.3 1038v24M1577.3 1066v24M1555.2 1094v24M1759.6 1122v24M851.2 1262v24" stroke="#9090d8" stroke-opacity="0.5" stroke-width="2.5"/><path d="M2447.7 618v24M2115.2 646v24M1591.4 646v24M1190.9 674v24M1865.9 730v24M2332.0 758v24M771.5 786v24M2219.4 1010v24M1650.8 1066v24M2361.8 1094v24M2407.8 1122v24M968.7 1150v24M1514.2 1206v24M1279.7 1262v24M1378.4 1262v24" stroke="#9090d8" stroke-opacity="0.5" stroke-width="3"/><path d="M2575.1 674v24M1779.8 674v24M1584.6 702v24M2118.3 702v24M2453.8 702v24M1686.3 730v24M1846.7 730v24M1181.5 730v24M848.1 758v24M777.3 786v24M2225.5 842v24M1316.2 926v24M1832.9 954v24M1020.1 982v24M1837.2 982v24M2318.4 1010v24M1159.2 1066v24M768.1 1066v24M1822.8 1122v24M1501.0 1150v24M973.4 1150v24M1234.5 1178v24M1860.9 1178v24" stroke="#9090d8" stroke-opacity="0.7" stroke-width="2"/><path d="M1638.3 618v24M792.2 646v24M1809.5 674v24M959.6 758v24M1243.2 898v24M1143.3 954v24M1955.9 982v24M1537.5 1038v24M2083.7 1066v24M2024.5 1122v24M1063.2 1150v24M2015.4 1178v24M2011.7 1234v24" stroke="#9090d8" stroke-opacity="0.7" stroke-width="2.5"/><path d="M1893.1 702v24M2297.2 758v24M1344.2 758v24M1808.2 814v24M1902.2 842v24M2291.3 842v24M1650.5 870v24M1272.3 898v24M1147.6 926v24M959.3 926v24M1218.3 982v24M776.1 1094v24M1659.2 1150v24M1663.7 1178v24M1574.2 1262v24" stroke="#9090d8" stroke-opacity="0.7" stroke-width="3"/><path d="M833.9 674v24M1681.6 730v24M833.5 814v24M2289.1 814v24M1525.2 870v24M1193.3 870v24M2300.8 870v24M1995.2 898v24M1514.0 898v24M1663.7 926v24M1050.2 954v24M1947.2 954v24M2437.7 982v24M2355.1 1010v24M1195.3 1122v24M1401.8 1122v24M2128.2 1150v24M1921.6 1178v24M1422.3 1206v24M1078.5 1234v24" stroke="#9090d8" stroke-opacity="0.85" stroke-width="2"/><path d="M2518.6 730v24M1619.4 730v24M2608.0 758v24M1395.3 758v24M2519.3 898v24M1371.1 926v24M1945.7 954v24M1803.7 1038v24M2067.4 1094v24M1624.2 1122v24M1889.8 1150v24M1391.5 1206v24M2488.5 1206v24M1057.8 1262v24" stroke="#9090d8" stroke-opacity="0.85" stroke-width="2.5"/><path d="M2083.1 618v24M1595.5 646v24M2330.3 814v24M2253.1 814v24M2227.0 842v24M2130.4 842v24M2537.3 954v24M986.7 1010v24M774.6 1010v24M943.6 1010v24M2002.9 1234v24" stroke="#9090d8" stroke-opacity="0.85" stroke-width="3"/><path d="M1247.0 674v24M977.4 702v24M2337.2 702v24M2110.3 702v24M2332.3 758v24M2527.9 842v24M857.3 842v24M2358.3 870v24M1567.2 870v24M1993.8 898v24M1634.6 926v24M1079.7 982v24M1307.3 982v24M2348.8 1010v24M1983.7 1010v24M2312.8 1038v24M1942.9 1038v24M762.7 1066v24M1292.2 1178v24M1788.3 1262v24" stroke="#a0d090" stroke-opacity="0.5" stroke-width="2"/><path d="M2112.6 674v24M2187.6 730v24M1281.2 786v24M2208.0 814v24M1949.1 814v24M1297.8 954v24M2034.3 954v24M1801.3 1010v24M1749.1 1066v24M1354.1 1094v24M1678.5 1094v24M2246.7 1094v24M2261.5 1122v24M1425.9 1150v24M2444.4 1206v24M2128.9 1206v24" stroke="#a0d090" stroke-opacity="0.5" stroke-width="2.5"/><path d="M989.8 674v24M2356.4 674v24M1140.8 674v24M2422.5 814v24M2284.5 814v24M1156.7 1010v24M875.7 1066v24M2494.2 1206v24M1365.1 1262v24" stroke="#a0d090" stroke-opacity="0.5" stroke-width="3"/><path d="M1062.2 618v24M1850.9 618v24M1842.8 618v24M2131.0 646v24M1943.7 702v24M2412.8 730v24M1294.4 786v24M2251.7 786v24M1771.5 842v24M1789.4 898v24M823.4 898v24M1620.6 926v24M1635.5 1010v24M1603.9 1122v24M2099.9 1150v24M1658.0 1150v24M1082.2 1150v24M1425.5 1206v24M2159.5 1206v24" stroke="#a0d090" stroke-opacity="0.7" stroke-width="2"/><path d="M2051.1 674v24M2515.7 730v24M1277.6 730v24M2512.9 758v24M2296.0 758v24M969.1 758v24M1284.4 786v24M2373.0 814v24M1857.1 842v24M1908.8 982v24M1586.2 982v24M1527.0 1178v24M1369.0 1178v24M2495.3 1234v24" stroke="#a0d090" stroke-opacity="0.7" stroke-width="2.5"/><path d="M1392.6 618v24M999.2 702v24M2424.2 786v24M2411.8 814v24M1891.0 842v24M1046.3 842v24M1121.3 926v24M2267.4 926v24M1382.6 926v24M1138.5 954v24M1023.1 1038v24M2366.6 1094v24M2148.7 1122v24" stroke="#a0d090" stroke-opacity="0.7" stroke-width="3"/><path d="M831.7 618v24M2491.7 618v24M2603.8 618v24M2067.2 646v24M949.5 730v24M1275.7 730v24M1979.5 758v24M1640.9 758v24M2403.0 814v24M787.1 842v24M1522.4 982v24M912.8 982v24M1516.4 1010v24M2544.6 1010v24M1688.4 1038v24M1563.7 1066v24M1822.3 1094v24M1407.5 1150v24M2607.6 1178v24M1868.4 1178v24M2196.6 1206v24M935.5 1206v24M1147.4 1234v24M1817.9 1234v24" stroke="#a0d090" stroke-opacity="0.85" stroke-width="2"/><path d="M1433.8 646v24M2070.6 646v24M2273.4 674v24M988.7 674v24M1288.9 786v24M2545.0 786v24M2210.4 786v24M2415.0 982v24M1530.5 1122v24M1315.3 1150v24M2532.6 1206v24M2649.9 1234v24" stroke="#a0d090" stroke-opacity="0.85" stroke-width="2.5"/><path d="M1698.1 618v24M1553.6 646v24M1681.0 730v24M764.9 730v24M1018.4 730v24M2285.5 786v24M1417.6 814v24M2226.9 926v24M2087.5 926v24M1698.3 982v24M1220.9 982v24M2172.6 1038v24M1425.9 1066v24M994.0 1122v24M1341.9 1178v24M2368.4 1178v24M2533.0 1206v24M1822.1 1206v24M1739.4 1234v24" stroke="#a0d090" stroke-opacity="0.85" stroke-width="3"/><path d="M2421.7 618v24M1624.9 618v24M1653.9 618v24M1384.1 646v24M1812.8 674v24M2415.6 730v24M2431.7 758v24M2141.8 786v24M1200.6 870v24M1886.8 898v24M1048.5 954v24M2431.4 982v24M2451.2 1038v24M1777.9 1038v24M1455.1 1094v24M1484.0 1178v24M1458.5 1206v24M2106.5 1234v24M1783.8 1262v24M2296.8 1262v24" stroke="#a8a8e0" stroke-opacity="0.5" stroke-width="2"/><path d="M2095.2 618v24M1244.0 618v24M754.6 730v24M1370.4 758v24M1607.5 870v24M2564.6 898v24M2505.6 926v24M783.5 1010v24M2355.9 1038v24M2169.5 1094v24M2360.3 1094v24M2572.0 1150v24M808.9 1178v24M2074.7 1206v24M1557.7 1234v24M1915.8 1234v24M1132.9 1234v24" stroke="#a8a8e0" stroke-opacity="0.5" stroke-width="2.5"/><path d="M953.2 618v24M1019.1 870v24M2622.3 898v24M1375.1 926v24M1089.7 982v24M1293.1 982v24M917.6 982v24M2115.6 1094v24M2279.2 1122v24M2274.4 1150v24M1667.1 1150v24M1319.8 1234v24M1326.9 1234v24" stroke="#a8a8e0" stroke-opacity="0.5" stroke-width="3"/><path d="M1229.2 646v24M1202.6 730v24M932.7 758v24M2294.4 758v24M2502.5 786v24M1692.3 786v24M2340.9 814v24M845.3 814v24M1323.9 842v24M1304.6 982v24M2531.5 1010v24M769.7 1094v24M2010.4 1178v24M2319.8 1206v24M1002.7 1206v24M1796.5 1234v24" stroke="#a8a8e0" stroke-opacity="0.7" stroke-width="2"/><path d="M1848.7 618v24M2238.5 646v24M1193.3 674v24M1893.8 702v24M1946.1 702v24M2623.8 758v24M2552.6 786v24M984.0 870v24M2632.0 870v24M861.1 1010v24M1798.8 1234v24M2147.5 1262v24" stroke="#a8a8e0" stroke-opacity="0.7" stroke-width="2.5"/><path d="M985.0 618v24M938.0 842v24M2227.8 926v24M944.5 1038v24M1489.7 1066v24M1364.7 1094v24M1457.9 1094v24M2223.3 1262v24" stroke="#a8a8e0" stroke-opacity="0.7" stroke-width="3"/><path d="M2448.6 702v24M967.5 758v24M1769.6 786v24M2047.6 954v24M1412.7 954v24M1849.3 954v24M2029.8 982v24M2051.9 982v24M1861.3 1038v24M1358.9 1066v24M801.4 1066v24M2046.5 1066v24M2627.1 1122v24M1190.2 1122v24M1067.6 1150v24M1997.3 1206v24M1196.4 1262v24M1581.6 1262v24" stroke="#a8a8e0" stroke-opacity="0.85" stroke-width="2"/><path d="M2093.9 618v24M1549.9 646v24M1684.5 674v24M2528.7 674v24M2175.3 702v24M2138.7 786v24M1293.4 842v24M1195.5 870v24M814.0 1010v24M1036.1 1038v24M780.3 1066v24M1174.8 1066v24M1600.3 1094v24M1991.8 1094v24M1919.0 1094v24M1221.0 1094v24M1308.0 1094v24M1481.9 1094v24M2224.9 1122v24M2038.1 1178v24M2417.3 1234v24M1545.2 1262v24" stroke="#a8a8e0" stroke-opacity="0.85" stroke-width="2.5"/><path d="M825.2 646v24M2438.1 674v24M1748.9 674v24M1333.0 730v24M2554.6 842v24M2221.1 926v24M2311.3 982v24M946.8 1038v24M1297.9 1094v24M1279.1 1178v24M1797.6 1234v24" stroke="#a8a8e0" stroke-opacity="0.85" stroke-width="3"/><path d="M1022.1 618v24M1550.6 646v24M1015.0 646v24M1368.7 758v24M1553.5 758v24M2192.3 758v24M1939.0 786v24M1775.0 814v24M1782.6 814v24M1826.2 814v24M956.3 814v24M1894.4 842v24M2523.9 842v24M2188.9 842v24M1522.8 842v24M1813.7 870v24M828.4 898v24M1374.6 926v24M2543.4 982v24M922.8 1010v24M2128.6 1010v24M2580.0 1094v24M1408.7 1122v24M1079.1 1150v24M813.8 1150v24M1233.5 1178v24M1250.4 1178v24M2447.5 1206v24M2306.7 1262v24" stroke="#b0b0e8" stroke-opacity="0.5" stroke-width="2"/><path d="M2177.0 646v24M1188.3 674v24M1787.5 702v24M2311.0 758v24M1067.7 786v24M1006.7 814v24M2092.3 814v24M1325.3 898v24M1242.7 926v24M1360.4 954v24M1570.2 954v24M2597.1 1010v24M1782.7 1038v24M2416.8 1038v24M1834.6 1150v24M1353.9 1178v24M1358.7 1178v24M848.2 1178v24M1574.0 1178v24M2475.0 1206v24M864.3 1206v24M1080.0 1234v24M2497.3 1234v24" stroke="#b0b0e8" stroke-opacity="0.5" stroke-width="2.5"/><path d="M1850.5 646v24M1994.0 1038v24M1049.5 1234v24" stroke="#b0b0e8" stroke-opacity="0.5" stroke-width="3"/><path d="M1112.3 646v24M1578.0 646v24M2081.5 730v24M2339.1 730v24M2570.7 730v24M1478.4 786v24M952.7 814v24M1613.8 842v24M2434.8 870v24M2081.7 926v24M1148.1 926v24M1357.3 954v24M1482.9 954v24M1046.8 954v24M1291.4 954v24M1842.9 954v24M2485.4 1010v24M1782.6 1038v24M1496.6 1066v24M1828.9 1066v24M1745.9 1066v24M1477.5 1066v24M1920.3 1094v24M2073.4 1122v24M1354.1 1122v24M1955.5 1150v24M1222.4 1150v24M2508.0 1178v24M2314.5 1206v24M1319.6 1234v24M771.8 1262v24" stroke="#b0b0e8" stroke-opacity="0.7" stroke-width="2"/><path d="M2303.0 618v24M1554.0 646v24M1075.5 674v24M2177.3 702v24M1212.4 730v24M2414.3 730v24M822.8 814v24M1753.7 954v24M823.9 982v24M1132.2 1010v24M1490.0 1066v24M1014.7 1262v24" stroke="#b0b0e8" stroke-opacity="0.7" stroke-width="2.5"/><path d="M2548.8 702v24M1036.6 786v24M868.4 842v24M1976.7 870v24M2355.5 870v24M1082.1 1010v24M2363.9 1010v24M1233.3 1178v24" stroke="#b0b0e8" stroke-opacity="0.7" stroke-width="3"/><path d="M801.5 730v24M1391.6 758v24M2172.4 786v24M944.5 814v24M844.1 814v24M2056.3 814v24M2002.7 814v24M2168.6 870v24M1381.7 926v24M752.7 926v24M1305.6 982v24M813.8 1010v24M1651.0 1010v24M2414.9 1038v24M780.7 1066v24M1506.7 1122v24M1874.7 1150v24M1532.6 1178v24M1082.3 1178v24M2125.1 1206v24" stroke="#b0b0e8" stroke-opacity="0.85" stroke-width="2"/><path d="M857.7 618v24M1799.7 618v24M2174.7 646v24M1886.7 702v24M1921.1 702v24M1947.3 702v24M890.3 730v24M1932.7 786v24M2208.6 814v24M1889.3 898v24M1574.5 982v24M1421.9 1066v24M1189.7 1122v24M2228.6 1122v24M1274.4 1178v24M1122.4 1234v24" stroke="#b0b0e8" stroke-opacity="0.85" stroke-width="2.5"/><path d="M2101.9 674v24M2470.7 786v24M2556.6 786v24M2112.5 814v24M1560.4 870v24M2312.5 926v24M2272.4 1150v24M1374.6 1262v24" stroke="#b0b0e8" stroke-opacity="0.85" stroke-width="3"/><path d="M1391.5 618v24M994.9 618v24M985.5 618v24M2536.7 674v24M2594.9 674v24M2305.2 674v24M2140.9 674v24M2523.7 730v24M985.8 730v24M823.4 758v24M885.7 786v24M1079.4 786v24M2595.1 786v24M1641.3 814v24M1402.2 814v24M2094.8 842v24M2538.0 870v24M1512.5 898v24M1836.0 954v24M1116.4 982v24M1126.5 1010v24M2446.7 1038v24M1067.9 1150v24M1421.5 1150v24M1412.8 1150v24M2533.9 1206v24M2208.7 1206v24M2546.8 1234v24M2628.8 1234v24M1745.4 1234v24M1322.0 1234v24M932.8 1262v24M1367.7 1262v24" stroke="#c89868" stroke-opacity="0.5" stroke-width="2"/><path d="M2453.2 702v24M1953.5 814v24M1666.3 814v24M1200.8 842v24M1053.3 870v24M1451.3 1122v24M1403.2 1150v24M1156.9 1150v24" stroke="#c89868" stroke-opacity="0.5" stroke-width="2.5"/><path d="M982.7 702v24M947.3 702v24M1885.5 870v24M1784.3 926v24M2053.9 954v24M2519.1 1010v24M2502.3 1038v24M925.3 1066v24M1624.1 1094v24M1249.0 1150v24" stroke="#c89868" stroke-opacity="0.5" stroke-width="3"/><path d="M1603.5 618v24M2056.0 674v24M1271.3 674v24M2584.5 702v24M1141.0 730v24M1001.4 730v24M1769.0 758v24M1071.4 786v24M1153.5 814v24M1200.3 870v24M2615.3 870v24M2357.8 954v24M1410.5 954v24M1800.1 1010v24M1541.6 1038v24M1735.1 1038v24M1188.2 1094v24M2230.9 1122v24M2022.5 1122v24M2538.9 1150v24M2309.3 1206v24M2447.2 1206v24M2125.2 1206v24M2410.4 1262v24" stroke="#c89868" stroke-opacity="0.7" stroke-width="2"/><path d="M2281.9 646v24M2503.6 702v24M848.7 730v24M1784.4 730v24M2513.6 758v24M1089.4 758v24M782.8 786v24M2133.2 786v24M1826.0 814v24M1669.0 842v24M1601.5 870v24M2554.5 898v24M2260.2 926v24M1062.6 926v24M1387.7 954v24M1498.8 954v24M1963.7 982v24M1142.4 1010v24M2241.1 1038v24M773.2 1066v24M1085.5 1066v24M1732.2 1094v24M2596.0 1094v24M2196.8 1122v24M2272.8 1150v24M2564.2 1150v24M1273.8 1178v24" stroke="#c89868" stroke-opacity="0.7" stroke-width="2.5"/><path d="M2600.4 618v24M846.4 674v24M2032.9 702v24M2422.7 870v24M2035.3 954v24M1228.2 982v24M1976.3 1010v24M1770.9 1038v24M2128.6 1038v24M787.9 1066v24M960.6 1094v24M1290.0 1178v24M2007.4 1178v24M2373.5 1206v24M2455.1 1206v24M934.2 1262v24" stroke="#c89868" stroke-opacity="0.7" stroke-width="3"/><path d="M847.7 618v24M751.5 618v24M2550.4 646v24M2567.9 674v24M2043.9 674v24M933.1 702v24M2186.5 730v24M1111.0 730v24M1854.0 730v24M774.3 786v24M2334.8 842v24M2427.6 870v24M1864.8 870v24M2310.7 1010v24M979.1 1066v24M2218.6 1066v24M2080.8 1066v24M889.9 1066v24M1625.0 1094v24M1498.1 1094v24M807.9 1178v24M2443.7 1206v24M1271.3 1206v24M1084.0 1206v24" stroke="#c89868" stroke-opacity="0.85" stroke-width="2"/><path d="M2490.6 618v24M1176.2 702v24M993.4 730v24M1484.4 842v24M2629.0 842v24M2047.3 954v24M1801.4 982v24M1448.0 982v24M1914.6 1066v24M1234.2 1206v24" stroke="#c89868" stroke-opacity="0.85" stroke-width="2.5"/><path d="M987.0 702v24M1876.7 954v24M1037.1 982v24M2636.7 1038v24M1029.7 1094v24M1666.5 1150v24M2515.0 1178v24M1487.5 1178v24M1380.1 1206v24M1080.7 1206v24M1955.9 1234v24" stroke="#c89868" stroke-opacity="0.85" stroke-width="3"/><path d="M2551.0 618v24M1645.6 618v24M2311.1 674v24M1288.2 730v24M1246.3 730v24M2506.9 758v24M893.0 758v24M2478.6 786v24M1965.5 814v24M2410.2 814v24M1937.9 842v24M2136.5 870v24M2528.6 870v24M1820.2 870v24M1972.0 898v24M1117.2 898v24M2229.6 926v24M2023.4 926v24M757.1 926v24M910.3 1010v24M1696.2 1038v24M2121.2 1122v24M1417.1 1150v24M2020.0 1178v24M2261.6 1206v24M2616.5 1206v24M927.7 1206v24" stroke="#c8a888" stroke-opacity="0.5" stroke-width="2"/><path d="M917.6 674v24M846.8 954v24M1213.3 1094v24M1028.1 1094v24M2227.4 1122v24M1756.0 1150v24M2255.4 1234v24M1201.5 1262v24" stroke="#c8a888" stroke-opacity="0.5" stroke-width="2.5"/><path d="M1833.4 646v24M2217.8 646v24M917.4 730v24M991.0 730v24M2292.9 814v24M2191.8 870v24M1394.9 954v24M1158.7 954v24M2350.7 954v24M1150.7 1066v24M954.0 1066v24M1199.4 1150v24M2307.6 1206v24M1899.1 1234v24M1999.8 1234v24M1034.0 1262v24" stroke="#c8a888" stroke-opacity="0.5" stroke-width="3"/><path d="M1352.0 618v24M2126.6 646v24M1821.1 646v24M2481.7 674v24M1414.2 730v24M1398.6 730v24M844.2 758v24M2587.0 786v24M837.1 814v24M2254.6 814v24M1309.9 954v24M909.9 982v24M2612.0 1010v24M2424.1 1038v24M2217.3 1122v24M2398.8 1122v24M1755.4 1150v24M1646.7 1150v24M1224.7 1150v24M2007.8 1150v24M2194.9 1206v24M1949.0 1234v24M1122.0 1234v24M1052.5 1262v24M2299.7 1262v24" stroke="#c8a888" stroke-opacity="0.7" stroke-width="2"/><path d="M2144.1 646v24M1813.3 702v24M1011.6 702v24M858.0 730v24M1325.4 814v24M1389.0 870v24M2431.4 898v24M1615.2 898v24M1739.6 926v24M1100.2 954v24M886.3 1038v24M1454.5 1094v24M1348.4 1094v24M2602.2 1178v24M1216.0 1234v24" stroke="#c8a888" stroke-opacity="0.7" stroke-width="2.5"/><path d="M1366.8 674v24M2346.2 702v24M1074.0 758v24M2371.9 814v24M1988.0 898v24M2222.1 926v24M2181.0 926v24M2463.0 926v24M2543.4 954v24M1836.7 954v24M822.6 1010v24M1438.9 1066v24M2186.7 1094v24M859.7 1122v24M2058.8 1178v24M1079.1 1262v24M843.3 1262v24" stroke="#c8a888" stroke-opacity="0.7" stroke-width="3"/><path d="M2602.6 618v24M1346.7 674v24M1244.6 674v24M1813.3 702v24M1280.8 730v24M781.9 786v24M1187.1 814v24M1311.3 814v24M2207.7 842v24M1796.5 870v24M2287.6 870v24M2573.9 870v24M1140.9 926v24M1490.7 1010v24M2299.6 1094v24M980.8 1150v24M2511.2 1178v24M1667.3 1178v24M2573.8 1206v24M925.7 1234v24M1283.0 1262v24M1576.5 1262v24" stroke="#c8a888" stroke-opacity="0.85" stroke-width="2"/><path d="M1603.5 618v24M802.0 646v24M2585.0 702v24M2242.2 814v24M1666.2 814v24M1119.2 898v24M905.1 898v24M1078.7 926v24M1084.6 926v24M2303.4 926v24M1658.2 926v24M1603.5 1038v24M1489.7 1066v24M2292.9 1094v24M1424.3 1206v24" stroke="#c8a888" stroke-opacity="0.85" stroke-width="2.5"/><path d="M2496.7 618v24M1983.5 618v24M2287.2 674v24M1050.0 730v24M1160.5 730v24M1047.9 730v24M1839.0 786v24M1614.7 898v24M878.5 954v24M1051.6 954v24M2619.9 1010v24M979.8 1122v24M810.1 1150v24M1208.0 1206v24M1180.2 1234v24" stroke="#c8a888" stroke-opacity="0.85" stroke-width="3"/><path d="M1699.1 618v24M1022.2 618v24M1608.6 646v24M993.7 674v24M1369.1 674v24M2564.7 730v24M2516.6 730v24M2290.7 758v24M1308.1 814v24M1464.7 870v24M1826.4 870v24M1321.0 870v24M1993.4 898v24M1622.0 1010v24M2180.9 1094v24M994.4 1122v24M1621.7 1122v24" stroke="#c98232" stroke-opacity="0.45" stroke-width="2"/><path d="M2556.9 674v24M2603.8 702v24M1429.1 786v24M1828.8 786v24M977.1 786v24M1607.9 870v24M2604.8 898v24M1314.5 1038v24M1389.6 1038v24" stroke="#c98232" stroke-opacity="0.45" stroke-width="2.5"/><path d="M764.4 646v24M985.6 674v24M2247.9 954v24M1904.6 982v24M1688.1 1038v24M1482.0 1122v24" stroke="#c98232" stroke-opacity="0.45" stroke-width="3"/><path d="M2492.3 674v24M2100.8 702v24M1310.7 786v24M2251.1 786v24M2178.5 814v24M1314.9 842v24M920.1 842v24M2629.4 842v24M1412.5 898v24M1367.8 926v24M1455.6 982v24M891.1 1094v24M1439.8 1122v24M2464.4 1178v24M809.7 1178v24M1809.8 1234v24" stroke="#c98232" stroke-opacity="0.6" stroke-width="2"/><path d="M1802.2 702v24M877.5 786v24M1816.6 814v24M1633.1 898v24M1002.7 954v24M1574.6 954v24M980.0 1066v24M789.1 1066v24M1477.0 1066v24M1352.0 1094v24M2490.2 1206v24" stroke="#c98232" stroke-opacity="0.6" stroke-width="2.5"/><path d="M1291.7 786v24M1478.2 982v24M1369.7 1094v24M1410.2 1150v24M1389.7 1206v24M2263.2 1234v24" stroke="#c98232" stroke-opacity="0.6" stroke-width="3"/><path d="M2531.1 674v24M1362.5 702v24M759.0 730v24M1663.3 758v24M2065.9 814v24M2577.7 842v24M2420.4 898v24M751.6 926v24M833.7 954v24M2426.0 982v24M2087.5 1010v24M2323.0 1010v24M1604.3 1010v24M2627.6 1038v24M1509.5 1094v24M2232.4 1122v24M2313.3 1206v24M1957.1 1206v24M1943.6 1206v24M2000.7 1234v24M2488.4 1234v24M1088.4 1234v24M1576.2 1262v24" stroke="#c98232" stroke-opacity="0.75" stroke-width="2"/><path d="M849.6 618v24M1621.2 786v24M983.8 786v24M1839.2 814v24M1300.8 842v24M2325.8 954v24M2035.4 982v24M2109.7 1010v24M2418.2 1010v24M1545.5 1038v24M1259.5 1094v24M1193.9 1122v24M1293.1 1178v24M1920.0 1178v24M1440.1 1178v24M1050.7 1234v24M2113.8 1262v24" stroke="#c98232" stroke-opacity="0.75" stroke-width="2.5"/><path d="M832.3 758v24M2363.3 870v24M2416.3 898v24M1793.4 982v24M757.9 982v24M2231.1 1010v24" stroke="#c98232" stroke-opacity="0.75" stroke-width="3"/><path d="M1085.1 702v24M1272.6 702v24M1342.1 730v24M862.6 730v24M877.3 814v24M2018.9 898v24M2419.5 898v24M1392.3 954v24M2081.5 954v24M2097.1 982v24M1985.5 982v24M913.2 982v24M1294.5 1010v24M2237.7 1038v24M2458.1 1094v24M2166.6 1094v24M1734.6 1094v24M1434.0 1094v24M1208.5 1122v24M1648.7 1150v24M2262.1 1150v24M1274.2 1150v24M1346.6 1178v24M2044.1 1178v24M2119.9 1234v24M1328.2 1262v24M1009.4 1262v24" stroke="#d0a0a0" stroke-opacity="0.5" stroke-width="2"/><path d="M1358.1 646v24M840.4 730v24M1291.5 758v24M2049.2 758v24M991.3 786v24M1086.0 870v24M1200.4 870v24M2012.8 898v24M1151.8 926v24M2540.2 954v24M1518.9 982v24M1775.5 1010v24M1781.4 1010v24M1474.5 1122v24M1466.0 1122v24" stroke="#d0a0a0" stroke-opacity="0.5" stroke-width="2.5"/><path d="M2300.9 618v24M1017.5 618v24M2158.5 618v24M1749.7 674v24M1506.4 702v24M2565.3 730v24M2333.2 730v24M1405.0 730v24M875.8 786v24M1758.7 814v24M2521.2 842v24M1807.6 870v24M1373.0 926v24M1191.7 1122v24M1907.6 1178v24" stroke="#d0a0a0" stroke-opacity="0.5" stroke-width="3"/><path d="M2104.1 618v24M2028.1 618v24M1348.9 618v24M1556.3 646v24M1601.6 646v24M1134.2 646v24M1762.7 674v24M2579.4 674v24M2557.3 702v24M2580.1 730v24M1877.7 730v24M2620.3 730v24M785.9 786v24M1984.9 814v24M2205.4 842v24M2091.1 842v24M2614.7 870v24M2446.4 870v24M2266.9 870v24M1394.8 870v24M1748.6 926v24M1540.9 954v24M905.5 982v24M2355.7 1010v24M1306.8 1066v24M1084.6 1066v24M1861.2 1094v24M2079.9 1122v24M799.6 1150v24M978.7 1150v24M2067.1 1178v24M1357.3 1178v24M2253.4 1206v24M1157.8 1234v24M2009.2 1234v24M845.6 1262v24" stroke="#d0a0a0" stroke-opacity="0.7" stroke-width="2"/><path d="M2205.8 646v24M1179.9 730v24M2296.1 814v24M2619.9 898v24M1384.2 898v24M955.7 898v24M2169.1 1010v24M2430.3 1010v24M1842.4 1038v24M2612.3 1038v24M1652.9 1066v24M1863.6 1094v24M2628.3 1122v24M1110.5 1150v24M2452.3 1206v24M2637.5 1234v24" stroke="#d0a0a0" stroke-opacity="0.7" stroke-width="2.5"/><path d="M984.5 618v24M1519.3 674v24M2623.2 730v24M2330.2 758v24M2493.3 786v24M2194.1 786v24M2321.0 870v24M1346.6 1094v24M2343.7 1150v24M1237.1 1206v24M1790.3 1262v24" stroke="#d0a0a0" stroke-opacity="0.7" stroke-width="3"/><path d="M848.3 618v24M1963.7 646v24M1054.3 646v24M1125.0 730v24M2288.9 814v24M2324.3 982v24M1223.9 982v24M1695.2 1066v24M918.6 1094v24M1972.1 1122v24M1347.6 1178v24M2124.6 1178v24M986.3 1206v24M1937.1 1206v24M2276.6 1234v24M1571.4 1262v24" stroke="#d0a0a0" stroke-opacity="0.85" stroke-width="2"/><path d="M1927.5 674v24M2594.9 786v24M1147.2 814v24M1296.3 842v24M1082.9 870v24M1968.2 898v24M756.2 982v24M1303.6 982v24M1291.8 1178v24M1511.7 1178v24M1114.0 1234v24M2256.0 1234v24" stroke="#d0a0a0" stroke-opacity="0.85" stroke-width="2.5"/><path d="M2219.2 646v24M2080.5 646v24M2574.6 674v24M950.5 730v24M1749.7 842v24M2168.3 870v24M2314.8 1010v24M2274.4 1150v24M1316.1 1178v24" stroke="#d0a0a0" stroke-opacity="0.85" stroke-width="3"/><path d="M847.1 618v24M2043.9 646v24M1804.4 646v24M2632.0 646v24M2496.3 674v24M2189.2 702v24M945.2 702v24M1976.7 730v24M2634.2 758v24M1343.0 758v24M2182.9 758v24M1007.0 758v24M2182.4 758v24M1344.0 758v24M784.0 786v24M2401.4 786v24M1760.0 786v24M1315.5 786v24M2184.8 814v24M1666.4 814v24M2602.9 870v24M1450.8 898v24M841.2 954v24M1046.5 954v24M2501.9 1038v24M1087.1 1066v24M1346.2 1094v24M888.9 1150v24M2126.2 1150v24M2511.2 1178v24M2056.7 1178v24M1301.8 1178v24M1253.8 1178v24M812.1 1178v24M1134.9 1234v24M865.9 1262v24" stroke="#d89090" stroke-opacity="0.5" stroke-width="2"/><path d="M1434.3 646v24M1788.5 674v24M2021.7 758v24M2067.1 814v24M1592.9 842v24M1370.4 842v24M1831.3 1066v24M2623.6 1122v24M1082.3 1206v24M1777.4 1234v24" stroke="#d89090" stroke-opacity="0.5" stroke-width="2.5"/><path d="M1779.5 674v24M2119.1 702v24M1078.2 786v24M2093.7 814v24M1199.6 870v24M2287.0 898v24M2195.3 982v24M1553.8 1094v24M1966.1 1122v24M1233.1 1178v24" stroke="#d89090" stroke-opacity="0.5" stroke-width="3"/><path d="M1734.3 618v24M2603.0 618v24M2572.5 674v24M834.4 674v24M1582.7 730v24M1048.9 730v24M1085.4 786v24M2071.7 814v24M1939.7 842v24M1381.4 842v24M1299.7 842v24M796.5 842v24M1974.6 870v24M789.9 898v24M2110.6 926v24M2421.4 982v24M1299.9 982v24M1424.9 982v24M2624.1 1010v24M1137.1 1010v24M872.6 1066v24M788.8 1066v24M1427.5 1066v24M1864.2 1094v24M1189.0 1094v24M2106.3 1122v24M2227.3 1122v24M2158.9 1150v24M1298.9 1178v24M1943.1 1206v24M2258.4 1234v24M2231.1 1262v24M858.6 1262v24" stroke="#d89090" stroke-opacity="0.7" stroke-width="2"/><path d="M1172.8 674v24M839.6 674v24M1625.1 730v24M2333.4 758v24M1460.8 758v24M2558.0 842v24M2623.5 898v24M2433.1 1010v24M855.7 1010v24M1128.7 1206v24M2164.9 1206v24M2157.4 1234v24" stroke="#d89090" stroke-opacity="0.7" stroke-width="2.5"/><path d="M946.0 618v24M1198.3 674v24M1247.1 674v24M2110.1 702v24M1376.2 702v24M2183.3 730v24M1978.1 730v24M2290.4 758v24M2400.8 786v24M1176.1 786v24M1298.6 842v24M1192.2 870v24M1889.0 898v24M1286.3 982v24M1310.2 982v24M1291.4 1010v24M1944.0 1178v24M1317.7 1234v24" stroke="#d89090" stroke-opacity="0.7" stroke-width="3"/><path d="M1415.5 646v24M1926.9 702v24M2068.6 758v24M1080.9 786v24M915.1 842v24M1662.5 842v24M2423.5 870v24M1561.1 870v24M1008.1 898v24M836.3 982v24M772.1 1010v24M1773.1 1038v24M2254.7 1094v24M1829.9 1094v24M889.4 1094v24M1609.7 1122v24M2100.9 1150v24M1343.7 1206v24M1287.8 1234v24" stroke="#d89090" stroke-opacity="0.85" stroke-width="2"/><path d="M2246.1 646v24M1359.6 646v24M1044.5 842v24M1102.2 842v24M756.6 926v24M2079.1 954v24M1513.4 982v24M1883.7 1206v24M854.3 1262v24" stroke="#d89090" stroke-opacity="0.85" stroke-width="2.5"/><path d="M2024.8 618v24M1349.7 758v24M872.0 786v24M983.2 786v24M2549.5 814v24M2137.1 842v24M2522.6 870v24M1795.8 926v24M1463.0 926v24M751.8 926v24M1211.1 982v24M2226.8 1010v24M1914.4 1066v24M2222.0 1122v24M1952.1 1150v24M1756.1 1234v24" stroke="#d89090" stroke-opacity="0.85" stroke-width="3"/><path d="M2416.7 618v24M875.0 618v24M1841.0 646v24M1713.7 646v24M1064.2 674v24M1743.7 674v24M2424.7 674v24M963.9 702v24M1941.7 702v24M2613.0 758v24M1002.9 758v24M915.7 842v24M1670.8 842v24M986.5 898v24M1980.8 898v24M2628.9 898v24M2513.3 926v24M2457.2 926v24M1437.7 954v24M1151.6 954v24M1152.4 954v24M2332.7 954v24M1484.4 1010v24M941.2 1038v24M1477.1 1066v24M1307.7 1150v24M1403.2 1150v24M1583.7 1262v24" stroke="#d8b898" stroke-opacity="0.5" stroke-width="2"/><path d="M1409.8 758v24M2209.6 758v24M2188.8 814v24M1091.4 842v24M2280.0 870v24M2601.0 870v24M1469.7 870v24M2443.2 870v24M1655.0 926v24M1049.8 954v24M2368.5 1010v24M1557.0 1038v24M2180.1 1094v24M1738.9 1094v24M2152.8 1094v24M1543.8 1150v24M1420.8 1150v24M1119.8 1206v24" stroke="#d8b898" stroke-opacity="0.5" stroke-width="2.5"/><path d="M1567.9 646v24M846.5 730v24M1990.9 814v24M2256.5 814v24M957.0 814v24M1332.2 842v24M2225.1 926v24M2582.1 954v24M924.9 1150v24M1246.1 1206v24M1288.1 1262v24" stroke="#d8b898" stroke-opacity="0.5" stroke-width="3"/><path d="M2026.9 618v24M1516.2 646v24M791.2 646v24M2076.7 646v24M996.5 674v24M991.1 674v24M1595.1 702v24M1148.0 730v24M2221.8 730v24M1183.0 730v24M2513.7 758v24M1158.1 758v24M2222.5 758v24M848.1 758v24M907.2 814v24M1952.3 842v24M1046.0 842v24M1623.9 898v24M2551.6 898v24M905.3 898v24M1431.7 982v24M908.2 982v24M2435.9 1038v24M2214.8 1066v24M2622.3 1122v24M2229.9 1122v24M1956.3 1178v24M2007.5 1206v24M1237.5 1206v24M1780.0 1234v24M1759.2 1234v24M1201.4 1262v24M1355.3 1262v24M1041.0 1262v24" stroke="#d8b898" stroke-opacity="0.7" stroke-width="2"/><path d="M985.9 618v24M2104.1 702v24M2452.5 702v24M2577.7 814v24M819.1 898v24M965.9 898v24M910.6 898v24M1878.0 926v24M2092.1 926v24M1427.8 1010v24M2407.8 1038v24M2292.5 1038v24M799.7 1066v24M1890.2 1206v24M2039.5 1234v24M1061.9 1262v24M1715.9 1262v24" stroke="#d8b898" stroke-opacity="0.7" stroke-width="2.5"/><path d="M1370.6 646v24M1255.8 674v24M760.6 730v24M2481.6 758v24M1780.5 758v24M2368.1 814v24M849.2 814v24M2226.3 842v24M2122.3 870v24M1835.5 926v24M2284.5 1010v24M1936.6 1038v24M1434.3 1066v24" stroke="#d8b898" stroke-opacity="0.7" stroke-width="3"/><path d="M1646.8 702v24M907.4 702v24M1850.2 730v24M1964.2 758v24M1354.9 758v24M1124.5 786v24M1796.9 814v24M2441.7 870v24M1565.9 870v24M2519.8 898v24M1422.0 926v24M1065.3 926v24M1393.7 954v24M2231.8 1010v24M1426.4 1066v24M1556.9 1066v24M1047.0 1122v24M1819.7 1150v24M1760.8 1150v24M2566.3 1150v24M1487.2 1178v24M1897.7 1178v24M1311.1 1178v24M2135.2 1206v24M2574.7 1206v24" stroke="#d8b898" stroke-opacity="0.85" stroke-width="2"/><path d="M1694.3 674v24M2067.7 702v24M1788.5 730v24M1314.2 786v24M2460.8 926v24M1571.2 954v24M998.7 954v24M2108.7 982v24M1808.8 1010v24M1673.7 1094v24M1296.2 1094v24" stroke="#d8b898" stroke-opacity="0.85" stroke-width="2.5"/><path d="M2024.2 618v24M2493.4 674v24M2072.5 730v24M1133.5 786v24M1774.9 814v24M2186.0 1038v24M825.3 1122v24M2117.0 1122v24M1879.2 1150v24" stroke="#d8b898" stroke-opacity="0.85" stroke-width="3"/><path d="M2420.3 618v24M1894.9 702v24M1861.0 730v24M1451.0 898v24M1125.4 926v24M1315.9 982v24M1801.8 1010v24M817.1 1010v24M1070.5 1066v24M2290.5 1094v24M2191.3 1122v24M2570.3 1178v24M1010.6 1206v24M797.1 1206v24M1092.4 1234v24M1785.6 1262v24" stroke="#dc4040" stroke-opacity="0.45" stroke-width="2"/><path d="M976.4 674v24M2553.9 702v24M1003.4 702v24M2336.0 814v24M972.9 870v24M1406.2 954v24M1489.9 1066v24M891.3 1094v24M2264.3 1206v24" stroke="#dc4040" stroke-opacity="0.45" stroke-width="2.5"/><path d="M1131.5 674v24M1788.0 702v24M1758.7 786v24M993.3 898v24M1895.8 898v24M1929.0 1094v24M1422.0 1206v24M1057.7 1262v24" stroke="#dc4040" stroke-opacity="0.45" stroke-width="3"/><path d="M1580.3 646v24M2300.9 758v24M2017.6 758v24M1827.8 786v24M2132.6 786v24M1299.2 842v24M991.5 842v24M2127.1 870v24M1463.7 870v24M2429.7 870v24M1819.8 898v24M2282.7 898v24M845.8 898v24M1802.0 982v24M1513.3 1010v24M1366.8 1066v24M1919.8 1066v24M1347.0 1178v24" stroke="#dc4040" stroke-opacity="0.6" stroke-width="2"/><path d="M1500.1 674v24M2134.2 1150v24M1258.1 1206v24M2421.8 1234v24" stroke="#dc4040" stroke-opacity="0.6" stroke-width="2.5"/><path d="M2638.0 646v24M2224.9 842v24M2517.4 870v24M1743.6 926v24M2073.1 1122v24M1357.2 1122v24" stroke="#dc4040" stroke-opacity="0.6" stroke-width="3"/><path d="M1624.4 618v24M1640.7 618v24M2135.0 646v24M2224.7 674v24M1882.6 702v24M1768.6 758v24M860.4 842v24M1076.2 870v24M1416.4 926v24M1018.7 982v24M1801.3 1038v24M919.5 1094v24M1052.1 1122v24M843.7 1262v24M1066.5 1262v24" stroke="#dc4040" stroke-opacity="0.75" stroke-width="2"/><path d="M2242.1 898v24M1754.7 954v24M1676.4 1010v24M1598.3 1038v24M905.6 1094v24M1950.8 1150v24M1067.7 1262v24" stroke="#dc4040" stroke-opacity="0.75" stroke-width="2.5"/><path d="M1112.9 646v24M1588.3 646v24M2044.9 674v24M1824.0 786v24M2596.6 898v24M1380.4 898v24M1526.5 1010v24M1032.2 1262v24" stroke="#dc4040" stroke-opacity="0.75" stroke-width="3"/><path d="M842.9 618v24M842.9 646v24M842.9 674v24M842.9 702v24M842.9 730v24M842.9 758v24M842.9 786v24M842.9 814v24M842.9 842v24M842.9 870v24M842.9 898v24M842.9 926v24M842.9 954v24M842.9 982v24M842.9 1010v24M842.9 1038v24M842.9 1066v24M842.9 1094v24M842.9 1122v24M842.9 1150v24M842.9 1178v24M842.9 1206v24M842.9 1234v24M842.9 1262v24M1070.8 618v24M1070.8 646v24M1070.8 674v24M1070.8 730v24M1070.8 758v24M1070.8 786v24M1070.8 814v24M1070.8 842v24M1070.8 870v24M1070.8 898v24M1070.8 926v24M1070.8 954v24M1070.8 1010v24M1070.8 1038v24M1070.8 1066v24M1070.8 1094v24M1070.8 1122v24M1070.8 1150v24M1070.8 1178v24M1070.8 1206v24M1070.8 1234v24M1070.8 1262v24M1428.5 618v24M1428.5 646v24M1428.5 674v24M1428.5 702v24M1428.5 730v24M1428.5 758v24M1428.5 786v24M1428.5 814v24M1428.5 842v24M1428.5 870v24M1428.5 898v24M1428.5 926v24M1428.5 954v24M1428.5 982v24M1428.5 1010v24M1428.5 1038v24M1428.5 1066v24M1428.5 1094v24M1428.5 1122v24M1428.5 1150v24M1428.5 1178v24M1428.5 1206v24M1428.5 1234v24M1428.5 1262v24M1576.7 618v24M1576.7 674v24M1576.7 702v24M1576.7 786v24M1576.7 842v24M1576.7 898v24M1576.7 926v24M1576.7 954v24M1576.7 982v24M1576.7 1010v24M1576.7 1038v24M1576.7 1066v24M1576.7 1094v24M1576.7 1150v24M1576.7 1178v24M1576.7 1234v24M1783.0 618v24M1783.0 646v24M1783.0 674v24M1783.0 702v24M1783.0 814v24M1783.0 842v24M1783.0 870v24M1783.0 898v24M1783.0 926v24M1783.0 982v24M1783.0 1066v24M1783.0 1094v24M1783.0 1122v24M1783.0 1150v24M1783.0 1206v24M1783.0 1234v24M1783.0 1262v24M1849.3 702v24M1849.3 730v24M1849.3 814v24M1849.3 842v24M1849.3 870v24M1849.3 926v24M1849.3 1066v24M1849.3 1178v24M1849.3 1206v24M1849.3 1234v24M1849.3 1262v24M1906.5 618v24M1906.5 674v24M1906.5 702v24M1906.5 730v24M1906.5 786v24M1906.5 814v24M1906.5 898v24M1906.5 926v24M1906.5 954v24M1906.5 982v24M1906.5 1010v24M1906.5 1038v24M1906.5 1066v24M1993.0 618v24M1993.0 674v24M1993.0 730v24M1993.0 758v24M1993.0 814v24M1993.0 842v24M1993.0 870v24M1993.0 898v24M1993.0 926v24M1993.0 1066v24M1993.0 1094v24M1993.0 1150v24M1993.0 1178v24M1993.0 1206v24M2107.4 618v24M2107.4 646v24M2107.4 674v24M2107.4 730v24M2107.4 870v24M2107.4 898v24M2107.4 926v24M2107.4 982v24M2107.4 1066v24M2107.4 1122v24M2107.4 1178v24M2107.4 1206v24M2107.4 1234v24M2107.4 1262v24M2132.5 674v24M2132.5 758v24M2132.5 814v24M2132.5 842v24M2132.5 870v24M2132.5 926v24M2132.5 1010v24M2132.5 1094v24M2132.5 1178v24M2132.5 1234v24M2132.5 1262v24M2428.6 618v24M2428.6 674v24M2428.6 702v24M2428.6 758v24M2428.6 786v24M2428.6 814v24M2428.6 842v24M2428.6 870v24M2428.6 926v24M2428.6 954v24M2428.6 1010v24M2428.6 1066v24M2428.6 1150v24M2428.6 1206v24M2428.6 1234v24M2428.6 1262v24" stroke="#5cd84a" stroke-width="2.4"/><path d="M1136.4 618v24M1136.4 646v24M1136.4 674v24M1136.4 702v24M1136.4 730v24M1136.4 758v24M1136.4 814v24M1136.4 842v24M1136.4 898v24M1136.4 926v24M1136.4 954v24M1136.4 982v24M1136.4 1010v24M1136.4 1038v24M1136.4 1094v24M1136.4 1122v24M1136.4 1150v24M1136.4 1178v24M1136.4 1206v24M1136.4 1234v24M1136.4 1262v24M1352.9 618v24M1352.9 646v24M1352.9 674v24M1352.9 702v24M1352.9 730v24M1352.9 758v24M1352.9 786v24M1352.9 814v24M1352.9 842v24M1352.9 870v24M1352.9 898v24M1352.9 926v24M1352.9 982v24M1352.9 1010v24M1352.9 1038v24M1352.9 1066v24M1352.9 1094v24M1352.9 1122v24M1352.9 1150v24M1352.9 1178v24M1352.9 1206v24M1352.9 1234v24M1352.9 1262v24M1374.3 674v24M1374.3 702v24M1374.3 730v24M1374.3 758v24M1374.3 870v24M1374.3 926v24M1374.3 954v24M1374.3 1234v24M1374.3 1262v24M1386.4 618v24M1386.4 674v24M1386.4 702v24M1386.4 758v24M1386.4 786v24M1386.4 814v24M1386.4 842v24M1386.4 870v24M1386.4 898v24M1386.4 926v24M1386.4 954v24M1386.4 982v24M1386.4 1010v24M1386.4 1038v24M1386.4 1094v24M1386.4 1122v24M1386.4 1178v24M1386.4 1206v24M1386.4 1234v24M1386.4 1262v24M1459.8 618v24M1459.8 646v24M1459.8 674v24M1459.8 702v24M1459.8 730v24M1459.8 758v24M1459.8 786v24M1459.8 814v24M1459.8 842v24M1459.8 870v24M1459.8 898v24M1459.8 926v24M1459.8 954v24M1459.8 982v24M1459.8 1010v24M1459.8 1038v24M1459.8 1066v24M1459.8 1094v24M1459.8 1122v24M1459.8 1150v24M1459.8 1178v24M1459.8 1206v24M1459.8 1234v24M1459.8 1262v24M1510.7 618v24M1510.7 646v24M1510.7 674v24M1510.7 702v24M1510.7 730v24M1510.7 758v24M1510.7 786v24M1510.7 814v24M1510.7 842v24M1510.7 870v24M1510.7 898v24M1510.7 926v24M1510.7 954v24M1510.7 982v24M1510.7 1010v24M1510.7 1038v24M1510.7 1066v24M1510.7 1094v24M1510.7 1122v24M1510.7 1150v24M1510.7 1178v24M1510.7 1206v24M1510.7 1234v24M1510.7 1262v24M1740.6 646v24M1740.6 758v24M1740.6 814v24M1740.6 1010v24M1740.6 1178v24M1740.6 1234v24M1740.6 1262v24M1852.3 646v24M1852.3 674v24M1852.3 730v24M1852.3 758v24M1852.3 842v24M1852.3 870v24M1852.3 898v24M1852.3 926v24M1852.3 954v24M1852.3 1010v24M1852.3 1038v24M1852.3 1066v24M1852.3 1122v24M1852.3 1206v24M2118.5 618v24M2118.5 646v24M2118.5 674v24M2118.5 702v24M2118.5 786v24M2118.5 814v24M2118.5 842v24M2118.5 870v24M2118.5 898v24M2118.5 926v24M2118.5 954v24M2118.5 982v24M2118.5 1010v24M2118.5 1066v24M2118.5 1094v24M2118.5 1122v24M2118.5 1150v24M2118.5 1178v24M2118.5 1206v24M2118.5 1234v24M2380.7 618v24M2380.7 646v24M2380.7 674v24M2380.7 702v24M2380.7 730v24M2380.7 786v24M2380.7 814v24M2380.7 870v24M2380.7 898v24M2380.7 926v24M2380.7 954v24M2380.7 982v24M2380.7 1010v24M2380.7 1038v24M2380.7 1066v24M2380.7 1122v24M2380.7 1150v24M2380.7 1178v24M2380.7 1206v24M2380.7 1234v24M2380.7 1262v24M2393.2 618v24M2393.2 646v24M2393.2 730v24M2393.2 758v24M2393.2 786v24M2393.2 898v24M2393.2 926v24M2393.2 1010v24M2393.2 1066v24M2393.2 1094v24M2393.2 1150v24M2393.2 1234v24M2393.2 1262v24M2404.6 618v24M2404.6 646v24M2404.6 674v24M2404.6 702v24M2404.6 730v24M2404.6 786v24M2404.6 814v24M2404.6 842v24M2404.6 898v24M2404.6 926v24M2404.6 954v24M2404.6 1010v24M2404.6 1038v24M2404.6 1094v24M2404.6 1150v24M2404.6 1206v24M2404.6 1234v24M2404.6 1262v24M2556.6 646v24M2556.6 730v24M2556.6 786v24M2556.6 814v24M2556.6 898v24M2556.6 926v24M2556.6 954v24M2556.6 982v24M2556.6 1066v24M2556.6 1094v24M2556.6 1122v24M2556.6 1178v24M2556.6 1206v24M2556.6 1234v24M2556.6 1262v24" stroke="#3535dc" stroke-width="2.4"/><path d="M812.7 674v24M812.7 702v24M812.7 730v24M812.7 898v24M812.7 954v24M812.7 982v24M812.7 1010v24M812.7 1038v24M812.7 1094v24M812.7 1122v24M812.7 1206v24M912.2 618v24M912.2 646v24M912.2 674v24M912.2 702v24M912.2 730v24M912.2 758v24M912.2 786v24M912.2 814v24M912.2 842v24M912.2 870v24M912.2 926v24M912.2 954v24M912.2 982v24M912.2 1010v24M912.2 1038v24M912.2 1066v24M912.2 1094v24M912.2 1122v24M912.2 1150v24M912.2 1178v24M912.2 1206v24M912.2 1234v24M912.2 1262v24M1316.7 618v24M1316.7 674v24M1316.7 758v24M1316.7 786v24M1316.7 814v24M1316.7 870v24M1316.7 898v24M1316.7 926v24M1316.7 954v24M1316.7 1038v24M1316.7 1094v24M1316.7 1178v24M1316.7 1206v24M1316.7 1262v24M1416.7 618v24M1416.7 702v24M1416.7 758v24M1416.7 786v24M1416.7 814v24M1416.7 898v24M1416.7 926v24M1416.7 954v24M1416.7 982v24M1416.7 1066v24M1416.7 1094v24M1416.7 1178v24M1416.7 1206v24M1416.7 1234v24M1608.4 618v24M1608.4 646v24M1608.4 702v24M1608.4 730v24M1608.4 758v24M1608.4 786v24M1608.4 814v24M1608.4 842v24M1608.4 870v24M1608.4 898v24M1608.4 926v24M1608.4 954v24M1608.4 982v24M1608.4 1010v24M1608.4 1038v24M1608.4 1066v24M1608.4 1094v24M1608.4 1122v24M1608.4 1150v24M1608.4 1178v24M1608.4 1206v24M1608.4 1234v24M1736.9 674v24M1736.9 814v24M1736.9 954v24M1736.9 1066v24M1736.9 1094v24M1736.9 1122v24M1736.9 1178v24M1861.1 674v24M1861.1 758v24M1861.1 814v24M1861.1 870v24M1861.1 1038v24M1861.1 1094v24M1861.1 1178v24M1861.1 1262v24M1891.0 730v24M1891.0 758v24M1891.0 814v24M1891.0 870v24M1891.0 898v24M1891.0 926v24M1891.0 982v24M1891.0 1010v24M1891.0 1038v24M1891.0 1094v24M1891.0 1122v24M1891.0 1234v24M2030.8 618v24M2030.8 646v24M2030.8 730v24M2030.8 758v24M2030.8 842v24M2030.8 898v24M2030.8 926v24M2030.8 954v24M2030.8 1010v24M2030.8 1038v24M2030.8 1066v24M2030.8 1094v24M2030.8 1122v24M2030.8 1150v24M2030.8 1178v24M2052.9 674v24M2052.9 702v24M2052.9 814v24M2052.9 842v24M2052.9 898v24M2052.9 926v24M2052.9 1010v24M2052.9 1038v24M2052.9 1066v24M2052.9 1094v24M2052.9 1150v24M2207.0 618v24M2207.0 786v24M2207.0 842v24M2207.0 870v24M2207.0 954v24M2207.0 1010v24M2207.0 1038v24M2207.0 1066v24M2207.0 1094v24M2207.0 1150v24M2207.0 1234v24M2207.0 1262v24M2250.9 618v24M2250.9 674v24M2250.9 702v24M2250.9 758v24M2250.9 786v24M2250.9 842v24M2250.9 898v24M2250.9 954v24M2250.9 1010v24M2250.9 1094v24M2250.9 1178v24M2250.9 1262v24M2269.0 730v24M2269.0 786v24M2269.0 814v24M2269.0 842v24M2269.0 898v24M2269.0 926v24M2269.0 1010v24M2269.0 1038v24M2269.0 1122v24M2269.0 1150v24M2269.0 1178v24M2269.0 1206v24M2269.0 1262v24M2318.7 646v24M2318.7 702v24M2318.7 730v24M2318.7 786v24M2318.7 898v24M2318.7 1038v24M2318.7 1122v24M2318.7 1262v24M2522.3 618v24M2522.3 646v24M2522.3 674v24M2522.3 702v24M2522.3 730v24M2522.3 758v24M2522.3 786v24M2522.3 814v24M2522.3 842v24M2522.3 926v24M2522.3 954v24M2522.3 982v24M2522.3 1010v24M2522.3 1038v24M2522.3 1094v24M2522.3 1122v24M2522.3 1150v24M2522.3 1206v24M2522.3 1234v24M2522.3 1262v24" stroke="#c98232" stroke-width="2.4"/><path d="M1036.9 646v24M1036.9 702v24M1036.9 786v24M1036.9 842v24M1036.9 898v24M1036.9 926v24M1036.9 954v24M1036.9 1038v24M1036.9 1066v24M1036.9 1094v24M1036.9 1122v24M1036.9 1178v24M1036.9 1234v24M1036.9 1262v24M1050.9 618v24M1050.9 646v24M1050.9 674v24M1050.9 702v24M1050.9 758v24M1050.9 786v24M1050.9 814v24M1050.9 842v24M1050.9 870v24M1050.9 898v24M1050.9 982v24M1050.9 1010v24M1050.9 1038v24M1050.9 1066v24M1050.9 1094v24M1050.9 1150v24M1050.9 1178v24M1050.9 1206v24M1050.9 1234v24M1146.8 618v24M1146.8 646v24M1146.8 702v24M1146.8 730v24M1146.8 758v24M1146.8 786v24M1146.8 814v24M1146.8 842v24M1146.8 870v24M1146.8 898v24M1146.8 954v24M1146.8 982v24M1146.8 1010v24M1146.8 1038v24M1146.8 1066v24M1146.8 1094v24M1146.8 1122v24M1146.8 1150v24M1146.8 1178v24M1146.8 1206v24M1146.8 1234v24M1146.8 1262v24M1282.0 646v24M1282.0 702v24M1282.0 730v24M1282.0 786v24M1282.0 814v24M1282.0 982v24M1282.0 1038v24M1282.0 1066v24M1282.0 1206v24M1282.0 1234v24M1450.6 618v24M1450.6 646v24M1450.6 674v24M1450.6 702v24M1450.6 758v24M1450.6 786v24M1450.6 814v24M1450.6 870v24M1450.6 898v24M1450.6 926v24M1450.6 954v24M1450.6 982v24M1450.6 1010v24M1450.6 1038v24M1450.6 1066v24M1450.6 1094v24M1450.6 1122v24M1450.6 1150v24M1450.6 1178v24M1450.6 1206v24M1450.6 1234v24M1450.6 1262v24M1486.7 646v24M1486.7 674v24M1486.7 758v24M1486.7 982v24M1486.7 1038v24M1486.7 1094v24M1486.7 1150v24M1486.7 1206v24M1486.7 1234v24M1542.8 618v24M1542.8 646v24M1542.8 702v24M1542.8 730v24M1542.8 786v24M1542.8 842v24M1542.8 870v24M1542.8 898v24M1542.8 926v24M1542.8 954v24M1542.8 982v24M1542.8 1038v24M1542.8 1066v24M1542.8 1150v24M1542.8 1206v24M1542.8 1262v24M1547.2 618v24M1547.2 646v24M1547.2 674v24M1547.2 702v24M1547.2 730v24M1547.2 758v24M1547.2 786v24M1547.2 814v24M1547.2 842v24M1547.2 870v24M1547.2 926v24M1547.2 954v24M1547.2 982v24M1547.2 1010v24M1547.2 1038v24M1547.2 1066v24M1547.2 1094v24M1547.2 1122v24M1547.2 1150v24M1547.2 1178v24M1547.2 1206v24M1547.2 1234v24M1547.2 1262v24M1588.8 618v24M1588.8 646v24M1588.8 674v24M1588.8 702v24M1588.8 730v24M1588.8 758v24M1588.8 786v24M1588.8 814v24M1588.8 842v24M1588.8 870v24M1588.8 898v24M1588.8 954v24M1588.8 982v24M1588.8 1010v24M1588.8 1038v24M1588.8 1066v24M1588.8 1094v24M1588.8 1122v24M1588.8 1150v24M1588.8 1178v24M1588.8 1206v24M1588.8 1234v24M1588.8 1262v24M1626.8 618v24M1626.8 646v24M1626.8 674v24M1626.8 702v24M1626.8 730v24M1626.8 758v24M1626.8 786v24M1626.8 814v24M1626.8 842v24M1626.8 870v24M1626.8 898v24M1626.8 926v24M1626.8 954v24M1626.8 982v24M1626.8 1010v24M1626.8 1038v24M1626.8 1094v24M1626.8 1122v24M1626.8 1150v24M1626.8 1178v24M1626.8 1206v24M1626.8 1234v24M1626.8 1262v24M1726.5 618v24M1726.5 646v24M1726.5 674v24M1726.5 702v24M1726.5 730v24M1726.5 758v24M1726.5 786v24M1726.5 814v24M1726.5 842v24M1726.5 870v24M1726.5 898v24M1726.5 926v24M1726.5 982v24M1726.5 1010v24M1726.5 1066v24M1726.5 1094v24M1726.5 1122v24M1726.5 1178v24M1726.5 1206v24M1726.5 1262v24M1750.9 618v24M1750.9 646v24M1750.9 674v24M1750.9 702v24M1750.9 758v24M1750.9 786v24M1750.9 842v24M1750.9 870v24M1750.9 898v24M1750.9 926v24M1750.9 954v24M1750.9 982v24M1750.9 1010v24M1750.9 1038v24M1750.9 1066v24M1750.9 1094v24M1750.9 1122v24M1750.9 1150v24M1750.9 1178v24M1750.9 1206v24M1750.9 1234v24M1750.9 1262v24M1754.6 758v24M1754.6 814v24M1754.6 870v24M1754.6 1010v24M1754.6 1094v24M1754.6 1150v24M1754.6 1178v24M1754.6 1262v24M1771.2 618v24M1771.2 674v24M1771.2 730v24M1771.2 786v24M1771.2 842v24M1771.2 898v24M1771.2 926v24M1771.2 982v24M1771.2 1178v24M1771.2 1234v24M1771.2 1262v24M1786.7 674v24M1786.7 702v24M1786.7 758v24M1786.7 870v24M1786.7 954v24M1786.7 982v24M1786.7 1010v24M1786.7 1122v24M1786.7 1150v24M1786.7 1178v24M1915.0 674v24M1915.0 702v24M1915.0 730v24M1915.0 758v24M1915.0 842v24M1915.0 898v24M1915.0 982v24M1915.0 1094v24M1915.0 1234v24M1915.0 1262v24M1920.5 646v24M1920.5 674v24M1920.5 786v24M1920.5 814v24M1920.5 870v24M1920.5 926v24M1920.5 1038v24M1920.5 1066v24M1920.5 1122v24M1920.5 1150v24M1920.5 1178v24M1920.5 1206v24M1920.5 1234v24M1920.5 1262v24M2001.3 674v24M2001.3 702v24M2001.3 730v24M2001.3 842v24M2001.3 898v24M2001.3 954v24M2001.3 982v24M2001.3 1038v24M2001.3 1206v24M2009.0 618v24M2009.0 674v24M2009.0 730v24M2009.0 898v24M2009.0 982v24M2009.0 1038v24M2009.0 1094v24M2009.0 1150v24M2009.0 1234v24M2009.0 1262v24M2060.6 618v24M2060.6 674v24M2060.6 702v24M2060.6 730v24M2060.6 786v24M2060.6 842v24M2060.6 954v24M2060.6 982v24M2060.6 1010v24M2060.6 1038v24M2060.6 1094v24M2060.6 1122v24M2092.7 618v24M2092.7 786v24M2092.7 814v24M2092.7 870v24M2092.7 898v24M2092.7 926v24M2092.7 954v24M2092.7 982v24M2092.7 1038v24M2092.7 1066v24M2092.7 1094v24M2092.7 1178v24M2092.7 1234v24M2092.7 1262v24M2100.8 646v24M2100.8 674v24M2100.8 730v24M2100.8 786v24M2100.8 814v24M2100.8 926v24M2100.8 954v24M2100.8 982v24M2100.8 1038v24M2100.8 1066v24M2100.8 1178v24M2100.8 1206v24M2100.8 1234v24M2100.8 1262v24M2214.7 618v24M2214.7 674v24M2214.7 730v24M2214.7 786v24M2214.7 814v24M2214.7 870v24M2214.7 898v24M2214.7 954v24M2214.7 1010v24M2214.7 1150v24M2214.7 1178v24M2214.7 1206v24M2214.7 1234v24M2214.7 1262v24M2346.4 618v24M2346.4 646v24M2346.4 702v24M2346.4 730v24M2346.4 758v24M2346.4 786v24M2346.4 814v24M2346.4 842v24M2346.4 1010v24M2346.4 1094v24M2346.4 1206v24M2346.4 1234v24" stroke="#dc4040" stroke-width="2.4"/><path d="M1697.8 618v24M775.6 618v24M1551.0 618v24M1165.8 618v24M2085.1 618v24M1161.2 618v24M2144.5 618v24M2172.4 618v24M1524.2 618v24M1729.6 618v24M1639.0 618v24M2491.0 618v24M2244.0 618v24M918.3 618v24M1571.7 618v24M1498.0 618v24M1482.5 618v24M2565.7 618v24M1247.8 618v24M1461.7 618v24M1100.8 618v24M2485.0 618v24M2336.8 618v24M877.3 618v24M993.6 646v24M2411.7 646v24M2577.8 646v24M892.4 646v24M830.4 646v24M2459.4 646v24M1717.7 646v24M2292.1 646v24M987.6 646v24M2106.0 646v24M1772.4 646v24M2560.4 646v24M2546.5 646v24M1504.5 646v24M1104.8 646v24M1395.4 646v24M920.6 646v24M1472.6 646v24M873.6 646v24M1346.2 646v24M2045.9 646v24M1035.3 646v24M1477.9 646v24M2399.0 646v24M1776.4 646v24M1902.4 674v24M2132.4 674v24M2492.5 674v24M1438.3 674v24M1149.4 674v24M1070.0 674v24M1010.1 674v24M843.6 674v24M2609.4 674v24M1451.5 674v24M2094.2 674v24M2414.8 674v24M1296.2 674v24M1009.0 674v24M1623.9 674v24M1577.8 674v24M1542.6 674v24M1384.8 674v24M915.6 674v24M2357.7 674v24M962.2 674v24M1607.5 674v24M1955.6 674v24M2011.5 702v24M1773.9 702v24M1371.6 702v24M1505.8 702v24M1151.1 702v24M1224.3 702v24M1905.3 702v24M1680.1 702v24M1690.9 702v24M1010.5 702v24M802.4 702v24M1672.9 702v24M828.7 702v24M844.7 702v24M1115.9 702v24M2432.8 702v24M1073.5 702v24M1082.6 702v24M2587.1 702v24M1666.2 702v24M1388.8 702v24M2324.6 702v24M2345.4 702v24M2605.3 702v24M918.2 702v24M1980.9 702v24M2092.0 730v24M997.7 730v24M1198.7 730v24M871.5 730v24M1844.0 730v24M1052.7 730v24M1757.2 730v24M1275.5 730v24M1336.4 730v24M1589.7 730v24M2050.0 730v24M2357.3 730v24M829.6 730v24M1491.6 730v24M756.0 730v24M1838.0 730v24M1334.1 730v24M953.8 730v24M1852.3 730v24M2377.2 730v24M2475.9 730v24M1305.5 730v24M1305.5 730v24M2124.4 758v24M1490.1 758v24M2558.5 758v24M1548.5 758v24M1668.8 758v24M1771.5 758v24M962.0 758v24M1217.3 758v24M2170.4 758v24M1818.3 758v24M1548.4 758v24M1916.3 758v24M1604.2 758v24M770.1 758v24M2448.1 758v24M2054.4 758v24M783.5 758v24M2063.3 758v24M2440.5 758v24M789.8 758v24M2283.5 758v24M2079.4 786v24M1235.7 786v24M1119.2 786v24M2126.2 786v24M2647.2 786v24M1178.9 786v24M2643.5 786v24M1599.1 786v24M2414.2 786v24M2095.5 786v24M1228.3 786v24M2391.0 786v24M1176.1 786v24M1534.6 786v24M1076.9 786v24M1448.4 786v24M1673.4 786v24M934.0 786v24M1527.4 786v24M1247.2 786v24M1779.1 786v24M2338.6 814v24M1257.7 814v24M2167.0 814v24M2505.5 814v24M1244.4 814v24M1032.3 814v24M1349.8 814v24M853.6 814v24M1609.9 814v24M2391.4 814v24M2137.6 814v24M1205.5 814v24M2574.5 814v24M2229.8 814v24M1255.9 814v24M2287.2 814v24M1560.0 814v24M2013.4 814v24M2039.7 814v24M1821.4 814v24M986.0 842v24M1416.3 842v24M2452.8 842v24M1618.3 842v24M1604.2 842v24M1222.5 842v24M1711.1 842v24M1354.8 842v24M1696.1 842v24M2209.8 842v24M2188.0 842v24M1576.6 842v24M2273.3 842v24M1364.3 842v24M1279.8 842v24M1121.6 842v24M1447.5 842v24M878.7 842v24M1615.5 842v24M2230.5 842v24M855.7 842v24M885.4 842v24M1973.5 842v24M2415.2 842v24M2502.4 842v24M2362.3 842v24M2593.8 842v24M1244.1 842v24M1472.6 870v24M2460.5 870v24M1349.4 870v24M2528.2 870v24M1940.8 870v24M1419.1 870v24M2317.1 870v24M1876.6 870v24M2256.7 870v24M2533.3 870v24M1671.0 870v24M2594.3 870v24M1275.5 870v24M1960.1 870v24M1056.0 870v24M2587.9 870v24M1339.4 870v24M2397.2 870v24M1684.2 870v24M2036.4 870v24M1649.4 870v24M1270.2 870v24M2003.0 870v24M2019.0 870v24M2583.3 870v24M1193.0 870v24M1386.7 870v24M2595.1 870v24M1934.4 870v24M1088.1 898v24M2430.5 898v24M1705.3 898v24M1766.6 898v24M2404.7 898v24M1309.6 898v24M1971.9 898v24M1202.3 898v24M1443.8 898v24M1813.5 898v24M2361.6 898v24M2151.9 898v24M1808.4 898v24M2139.9 898v24M1463.3 898v24M2546.8 898v24M988.4 898v24M1150.9 898v24M1044.5 898v24M1751.5 898v24M2410.6 898v24M1181.2 898v24M1806.4 898v24M1306.1 898v24M1018.1 898v24M2472.0 926v24M1005.0 926v24M2228.0 926v24M2624.8 926v24M2503.6 926v24M2353.2 926v24M839.0 926v24M2644.0 926v24M1536.5 926v24M1659.9 926v24M1131.9 926v24M836.3 926v24M1510.7 926v24M1708.9 926v24M1112.7 926v24M1542.0 926v24M2333.1 926v24M2092.5 926v24M1356.7 926v24M1489.6 926v24M2308.7 926v24M1950.8 926v24M1068.0 926v24M813.6 926v24M2611.1 926v24M1675.5 926v24M2342.7 954v24M2096.8 954v24M2461.3 954v24M825.9 954v24M988.7 954v24M1942.8 954v24M1965.2 954v24M1699.0 954v24M1103.1 954v24M1753.2 954v24M1595.5 954v24M1717.6 954v24M895.1 954v24M1429.6 954v24M1850.3 954v24M835.6 954v24M2169.0 954v24M2381.6 954v24M2013.0 954v24M1945.9 954v24M2143.0 982v24M1352.1 982v24M1708.9 982v24M2248.0 982v24M926.8 982v24M1940.0 982v24M2340.5 982v24M2010.5 982v24M1630.0 982v24M2563.2 982v24M915.4 982v24M1567.0 982v24M1120.8 982v24M2113.0 982v24M2005.1 982v24M2071.1 982v24M2189.2 982v24M1182.2 982v24M2564.4 982v24M1292.8 982v24M2356.7 982v24M2438.2 982v24M1789.3 982v24M1640.2 982v24M2316.0 982v24M1304.6 982v24M758.8 982v24M2638.1 1010v24M1199.7 1010v24M1637.5 1010v24M2079.2 1010v24M2209.2 1010v24M2394.3 1010v24M846.3 1010v24M922.7 1010v24M2527.3 1010v24M2345.7 1010v24M2259.6 1010v24M868.7 1010v24M1003.9 1010v24M2511.4 1010v24M2219.9 1010v24M2080.7 1010v24M1563.8 1010v24M2239.2 1038v24M2373.8 1038v24M1730.1 1038v24M2123.0 1038v24M1438.8 1038v24M2422.8 1038v24M2357.1 1038v24M1872.4 1038v24M1450.3 1038v24M2471.2 1038v24M1741.5 1038v24M2408.2 1038v24M1517.8 1038v24M1490.9 1038v24M1325.5 1038v24M1916.8 1038v24M1168.7 1038v24M1137.1 1038v24M981.2 1038v24M1932.3 1038v24M1017.1 1038v24M2373.9 1038v24M1361.8 1066v24M1259.2 1066v24M1042.7 1066v24M2540.8 1066v24M2017.1 1066v24M1895.7 1066v24M2542.6 1066v24M2120.5 1066v24M1980.2 1066v24M1942.0 1066v24M868.2 1066v24M1306.7 1066v24M2186.5 1066v24M1462.6 1066v24M2442.4 1066v24M2106.0 1066v24M1550.6 1066v24M1437.3 1066v24M2400.4 1066v24M1103.3 1094v24M920.9 1094v24M1254.5 1094v24M1748.0 1094v24M2291.7 1094v24M1806.7 1094v24M2628.6 1094v24M2104.1 1094v24M1987.5 1094v24M2509.0 1094v24M1654.7 1094v24M886.0 1094v24M2633.2 1094v24M871.0 1094v24M2265.7 1094v24M875.3 1094v24M1616.5 1122v24M1741.7 1122v24M2332.6 1122v24M1511.5 1122v24M1416.5 1122v24M1664.5 1122v24M2425.0 1122v24M862.5 1122v24M945.2 1122v24M2498.6 1122v24M1213.1 1122v24M2478.4 1122v24M2356.3 1122v24M1001.6 1122v24M992.2 1122v24M2115.6 1150v24M1812.6 1150v24M2542.7 1150v24M2246.9 1150v24M1267.7 1150v24M1272.7 1150v24M1582.4 1150v24M992.8 1150v24M2612.5 1150v24M948.7 1150v24M2267.0 1150v24M1798.9 1150v24M1031.6 1150v24M2039.9 1150v24M2436.8 1150v24M2615.3 1150v24M1724.6 1150v24M844.9 1150v24M2630.2 1178v24M2306.5 1178v24M1630.2 1178v24M1437.3 1178v24M2083.8 1178v24M1917.6 1178v24M1783.2 1178v24M1589.6 1178v24M1958.8 1178v24M875.7 1178v24M1042.0 1178v24M2506.6 1178v24M1031.7 1178v24M1981.0 1178v24M996.1 1178v24M2038.8 1178v24M1690.7 1178v24M1938.7 1178v24M2571.3 1178v24M1885.8 1178v24M1785.0 1178v24M1527.0 1178v24M1533.3 1178v24M1297.1 1178v24M2370.3 1206v24M1106.7 1206v24M2187.3 1206v24M1850.0 1206v24M1581.6 1206v24M1919.9 1206v24M1196.8 1206v24M977.4 1206v24M1218.7 1206v24M2191.4 1206v24M2113.2 1206v24M1459.2 1206v24M1571.7 1206v24M2264.7 1206v24M1918.3 1206v24M1294.4 1206v24M1260.6 1206v24M2121.2 1206v24M2208.2 1206v24M2562.5 1206v24M1953.8 1206v24M2189.7 1206v24M2208.5 1206v24M2573.1 1206v24M1703.4 1206v24M1842.7 1206v24M1266.6 1206v24M1091.0 1234v24M946.6 1234v24M2058.2 1234v24M799.4 1234v24M1549.6 1234v24M2190.9 1234v24M964.2 1234v24M877.5 1234v24M1076.5 1234v24M2521.1 1234v24M1726.0 1234v24M1247.8 1234v24M2192.1 1234v24M1290.7 1234v24M1462.3 1234v24M1963.3 1234v24M1249.8 1234v24M1190.8 1234v24M1106.1 1234v24M1417.8 1234v24M1498.8 1234v24M2165.0 1234v24M1348.4 1234v24M1333.1 1234v24M1635.2 1262v24M833.5 1262v24M1285.8 1262v24M2215.7 1262v24M811.2 1262v24M1072.4 1262v24M2356.7 1262v24M1941.3 1262v24M1225.7 1262v24M1245.7 1262v24M2543.7 1262v24M1945.4 1262v24M1615.6 1262v24M2348.9 1262v24M1856.8 1262v24M909.0 1262v24M2236.1 1262v24M2114.1 1262v24M1497.1 1262v24M1067.0 1262v24M2301.3 1262v24M1548.2 1262v24M1049.0 1262v24M2540.2 1262v24M1924.8 1262v24" stroke="#a8a8a8" stroke-opacity="0.5" stroke-width="1.5"/><rect x="2375" y="1150" width="35" height="24" fill="#fafafa"/><rect x="2375" y="1178" width="35" height="24" fill="#fafafa"/><rect x="2375" y="1206" width="35" height="24" fill="#fafafa"/><rect x="2375" y="1234" width="35" height="24" fill="#fafafa"/><rect x="2375" y="1262" width="35" height="24" fill="#fafafa"/><rect x="2445" y="1122" width="15" height="24" fill="#fafafa"/><rect x="2445" y="1150" width="15" height="24" fill="#fafafa"/><rect x="2445" y="1178" width="15" height="24" fill="#fafafa"/><rect x="2445" y="1206" width="15" height="24" fill="#fafafa"/><rect x="2445" y="1234" width="15" height="24" fill="#fafafa"/><rect x="2445" y="1262" width="15" height="24" fill="#fafafa"/><rect x="2113" y="1038" width="8" height="24" fill="#fafafa"/><rect x="2113" y="1066" width="8" height="24" fill="#fafafa"/><rect x="2113" y="1094" width="8" height="24" fill="#fafafa"/><rect x="2113" y="1122" width="8" height="24" fill="#fafafa"/><rect x="2113" y="1150" width="8" height="24" fill="#fafafa"/><rect x="2113" y="1178" width="8" height="24" fill="#fafafa"/><rect x="2113" y="1206" width="8" height="24" fill="#fafafa"/><rect x="2113" y="1234" width="8" height="24" fill="#fafafa"/><rect x="2113" y="1262" width="8" height="24" fill="#fafafa"/><rect x="2380" y="1066" width="20" height="24" fill="#fafafa"/><rect x="2380" y="1094" width="20" height="24" fill="#fafafa"/><rect x="2380" y="1122" width="20" height="24" fill="#fafafa"/><rect x="945.4" y="618" width="10.4" height="24" fill="#3838a8"/><rect x="1104.0" y="702" width="16.6" height="24" fill="#c84038"/><rect x="1145.6" y="842" width="19.2" height="24" fill="#c84038"/><rect x="1234.0" y="1066" width="15.0" height="24" fill="#c84038"/><rect x="1143.0" y="982" width="15.0" height="24" fill="#c84038"/><rect x="1287.0" y="1150" width="13.0" height="24" fill="#c84038"/><rect x="1571.0" y="786" width="16.0" height="24" fill="#c84038"/><rect x="1624.6" y="870" width="17.0" height="24" fill="#d8b040"/><rect x="1685.0" y="926" width="15.0" height="24" fill="#c84038"/><rect x="1715.5" y="758" width="18.5" height="24" fill="#c84038"/><rect x="1823.5" y="646" width="16.5" height="24" fill="#cc4a30"/><rect x="1840.0" y="646" width="15.0" height="24" fill="#4aa0a8"/><rect x="1785.5" y="702" width="14.1" height="24" fill="#a04a38"/><rect x="1850.4" y="702" width="13.6" height="24" fill="#70d8c8"/><rect x="1912.0" y="814" width="15.9" height="24" fill="#c84038"/><rect x="1808.0" y="982" width="15.0" height="24" fill="#90b8e8"/><rect x="2192.3" y="674" width="14.7" height="24" fill="#5a8080"/><rect x="2267.8" y="870" width="16.6" height="24" fill="#ece8a0"/><rect x="2502.0" y="758" width="16.6" height="24" fill="#c84038"/><rect x="2543.0" y="1234" width="14.0" height="24" fill="#c84038"/><rect x="1890.0" y="1206" width="14.0" height="24" fill="#c84038"/><path d="M857.2 657h3v3h-3zM821.3 713h3v3h-3zM1541.8 741h3v3h-3zM1489.7 769h3v3h-3zM957.5 797h3v3h-3zM1043.3 825h3v3h-3zM1423.3 853h3v3h-3zM2610.5 881h3v3h-3zM2157.2 937h3v3h-3zM1374.0 1021h3v3h-3zM2307.6 1049h3v3h-3zM1631.5 1077h3v3h-3zM1407.3 1105h3v3h-3zM1950.9 1161h3v3h-3zM1106.2 1189h3v3h-3zM2176.5 1217h3v3h-3zM1139.6 1245h3v3h-3zM1552.2 628.5h3v3h-3zM1552.2 656.5h3v3h-3zM1552.2 684.5h3v3h-3zM1552.2 712.5h3v3h-3zM1552.2 768.5h3v3h-3zM1552.2 796.5h3v3h-3zM1552.2 880.5h3v3h-3zM1552.2 908.5h3v3h-3zM1552.2 936.5h3v3h-3zM1552.2 964.5h3v3h-3zM1552.2 992.5h3v3h-3zM1552.2 1076.5h3v3h-3zM1552.2 1104.5h3v3h-3zM1552.2 1132.5h3v3h-3zM1552.2 1188.5h3v3h-3zM1552.2 1216.5h3v3h-3zM1552.2 1244.5h3v3h-3zM1552.2 1272.5h3v3h-3zM1716.0 628.5h3v3h-3zM1716.0 656.5h3v3h-3zM1716.0 684.5h3v3h-3zM1716.0 768.5h3v3h-3zM1716.0 796.5h3v3h-3zM1716.0 824.5h3v3h-3zM1716.0 852.5h3v3h-3zM1716.0 908.5h3v3h-3zM1716.0 936.5h3v3h-3zM1716.0 964.5h3v3h-3zM1716.0 992.5h3v3h-3zM1716.0 1020.5h3v3h-3zM1716.0 1048.5h3v3h-3zM1716.0 1076.5h3v3h-3zM1716.0 1104.5h3v3h-3zM1716.0 1160.5h3v3h-3zM1716.0 1188.5h3v3h-3zM1716.0 1216.5h3v3h-3zM2117.0 628.5h3v3h-3zM2117.0 656.5h3v3h-3zM2117.0 684.5h3v3h-3zM2117.0 712.5h3v3h-3zM2117.0 740.5h3v3h-3zM2117.0 768.5h3v3h-3zM2117.0 824.5h3v3h-3zM2117.0 852.5h3v3h-3zM2117.0 880.5h3v3h-3zM2117.0 908.5h3v3h-3zM2117.0 936.5h3v3h-3zM2117.0 964.5h3v3h-3zM2117.0 992.5h3v3h-3zM2117.0 1020.5h3v3h-3zM2117.0 1076.5h3v3h-3zM2117.0 1104.5h3v3h-3zM2117.0 1132.5h3v3h-3zM2117.0 1188.5h3v3h-3zM2117.0 1244.5h3v3h-3zM2117.0 1272.5h3v3h-3zM1839.5 628.5h3v3h-3zM1839.5 656.5h3v3h-3zM1839.5 684.5h3v3h-3zM1839.5 712.5h3v3h-3zM1839.5 740.5h3v3h-3zM1839.5 796.5h3v3h-3zM1839.5 824.5h3v3h-3zM1839.5 852.5h3v3h-3zM1839.5 880.5h3v3h-3zM1839.5 908.5h3v3h-3zM1839.5 936.5h3v3h-3zM1839.5 964.5h3v3h-3zM1839.5 992.5h3v3h-3zM1839.5 1020.5h3v3h-3zM1839.5 1048.5h3v3h-3zM1839.5 1076.5h3v3h-3zM1839.5 1104.5h3v3h-3zM1839.5 1132.5h3v3h-3zM1839.5 1160.5h3v3h-3zM1839.5 1188.5h3v3h-3zM1839.5 1216.5h3v3h-3zM1839.5 1272.5h3v3h-3zM2008.0 628.5h3v3h-3zM2008.0 656.5h3v3h-3zM2008.0 684.5h3v3h-3zM2008.0 712.5h3v3h-3zM2008.0 740.5h3v3h-3zM2008.0 768.5h3v3h-3zM2008.0 796.5h3v3h-3zM2008.0 824.5h3v3h-3zM2008.0 852.5h3v3h-3zM2008.0 880.5h3v3h-3zM2008.0 908.5h3v3h-3zM2008.0 936.5h3v3h-3zM2008.0 964.5h3v3h-3zM2008.0 992.5h3v3h-3zM2008.0 1020.5h3v3h-3zM2008.0 1048.5h3v3h-3zM2008.0 1076.5h3v3h-3zM2008.0 1132.5h3v3h-3zM2008.0 1160.5h3v3h-3zM2008.0 1188.5h3v3h-3zM2008.0 1216.5h3v3h-3zM2008.0 1272.5h3v3h-3z" fill="#555" fill-opacity="0.7"/><path d="M1287.7 731h12v3.3h-4v15.4h4v3.3h-12v-3.3h4v-15.4h-4zM1287.7 759h12v3.3h-4v15.4h4v3.3h-12v-3.3h4v-15.4h-4zM1287.7 843h12v3.3h-4v15.4h4v3.3h-12v-3.3h4v-15.4h-4zM1287.7 871h12v3.3h-4v15.4h4v3.3h-12v-3.3h4v-15.4h-4zM1287.7 899h12v3.3h-4v15.4h4v3.3h-12v-3.3h4v-15.4h-4zM1287.7 983h12v3.3h-4v15.4h4v3.3h-12v-3.3h4v-15.4h-4zM1287.7 1039h12v3.3h-4v15.4h4v3.3h-12v-3.3h4v-15.4h-4zM1287.7 1067h12v3.3h-4v15.4h4v3.3h-12v-3.3h4v-15.4h-4zM1287.7 1095h12v3.3h-4v15.4h4v3.3h-12v-3.3h4v-15.4h-4zM1287.7 1123h12v3.3h-4v15.4h4v3.3h-12v-3.3h4v-15.4h-4zM1287.7 1179h12v3.3h-4v15.4h4v3.3h-12v-3.3h4v-15.4h-4zM1287.7 1207h12v3.3h-4v15.4h4v3.3h-12v-3.3h4v-15.4h-4zM1895.0 731h12v3.3h-4v15.4h4v3.3h-12v-3.3h4v-15.4h-4zM1895.0 759h12v3.3h-4v15.4h4v3.3h-12v-3.3h4v-15.4h-4zM1895.0 815h12v3.3h-4v15.4h4v3.3h-12v-3.3h4v-15.4h-4zM1895.0 955h12v3.3h-4v15.4h4v3.3h-12v-3.3h4v-15.4h-4zM1895.0 1123h12v3.3h-4v15.4h4v3.3h-12v-3.3h4v-15.4h-4zM2003.0 731h12v3.3h-4v15.4h4v3.3h-12v-3.3h4v-15.4h-4zM2003.0 871h12v3.3h-4v15.4h4v3.3h-12v-3.3h4v-15.4h-4zM2003.0 899h12v3.3h-4v15.4h4v3.3h-12v-3.3h4v-15.4h-4zM2003.0 927h12v3.3h-4v15.4h4v3.3h-12v-3.3h4v-15.4h-4zM2003.0 955h12v3.3h-4v15.4h4v3.3h-12v-3.3h4v-15.4h-4zM2003.0 1011h12v3.3h-4v15.4h4v3.3h-12v-3.3h4v-15.4h-4zM2003.0 1179h12v3.3h-4v15.4h4v3.3h-12v-3.3h4v-15.4h-4zM2003.0 1207h12v3.3h-4v15.4h4v3.3h-12v-3.3h4v-15.4h-4zM2003.0 1235h12v3.3h-4v15.4h4v3.3h-12v-3.3h4v-15.4h-4zM2513.6 675h12v3.3h-4v15.4h4v3.3h-12v-3.3h4v-15.4h-4zM2513.6 703h12v3.3h-4v15.4h4v3.3h-12v-3.3h4v-15.4h-4zM2513.6 759h12v3.3h-4v15.4h4v3.3h-12v-3.3h4v-15.4h-4zM2513.6 815h12v3.3h-4v15.4h4v3.3h-12v-3.3h4v-15.4h-4zM2513.6 843h12v3.3h-4v15.4h4v3.3h-12v-3.3h4v-15.4h-4zM2513.6 1067h12v3.3h-4v15.4h4v3.3h-12v-3.3h4v-15.4h-4zM2513.6 1179h12v3.3h-4v15.4h4v3.3h-12v-3.3h4v-15.4h-4zM878.0 871h12v3.3h-4v15.4h4v3.3h-12v-3.3h4v-15.4h-4zM878.0 1039h12v3.3h-4v15.4h4v3.3h-12v-3.3h4v-15.4h-4zM1443.4 927h12v3.3h-4v15.4h4v3.3h-12v-3.3h4v-15.4h-4zM2389.0 703h12v3.3h-4v15.4h4v3.3h-12v-3.3h4v-15.4h-4zM2389.0 1095h12v3.3h-4v15.4h4v3.3h-12v-3.3h4v-15.4h-4z" fill="#7a2ee0"/></svg>
<div class="t" style="left:761.0px;top:536.0px;font-size:16px;line-height:16px;font-weight:400;color:#111;letter-spacing:0px;transform:scaleX(1.1974);transform-origin:left top;">[0 - 67]</div>
<svg style="left:752px;top:1293px" width="1896" height="100" viewBox="752 1293 1896 100"><rect x="898" y="1315.2" width="1524" height="2.2" fill="#0000b2"/><rect x="880" y="1308.2" width="18.4" height="16" fill="#0000b2"/><rect x="898.4" y="1302.2" width="13.3" height="28" fill="#0000b2"/><rect x="1157.7" y="1302.2" width="12.6" height="28" fill="#0000b2"/><rect x="1330.0" y="1302.2" width="8.0" height="28" fill="#0000b2"/><rect x="1703.8" y="1302.2" width="8.8" height="28" fill="#0000b2"/><rect x="1728.3" y="1302.2" width="8.0" height="28" fill="#0000b2"/><rect x="1944.3" y="1302.2" width="11.5" height="28" fill="#0000b2"/><rect x="2030.2" y="1302.2" width="11.8" height="28" fill="#0000b2"/><rect x="2076.3" y="1302.2" width="10.0" height="28" fill="#0000b2"/><rect x="2105.8" y="1302.2" width="10.3" height="28" fill="#0000b2"/><rect x="2169.6" y="1302.2" width="10.7" height="28" fill="#0000b2"/><rect x="2292.0" y="1302.2" width="12.2" height="28" fill="#0000b2"/><rect x="2421.8" y="1302.2" width="12.2" height="28" fill="#0000b2"/><rect x="924" y="1308.2" width="10" height="16" fill="#0000b2"/><rect x="2434" y="1307.7" width="80" height="16.2" fill="#0000b2"/><rect x="2613.6" y="1307.7" width="40" height="16.2" fill="#0000b2"/><path d="M937.9 1311l4.5 5l-4.5 5M959.5 1311l4.5 5l-4.5 5M997.3 1311l4.5 5l-4.5 5M1018.9 1311l4.5 5l-4.5 5M1057.4 1311l4.5 5l-4.5 5M1079.7 1311l4.5 5l-4.5 5M1116.8 1311l4.5 5l-4.5 5M1139.1 1311l4.5 5l-4.5 5M1363.5 1311l4.5 5l-4.5 5M1379.9 1311l4.5 5l-4.5 5M1423.5 1311l4.5 5l-4.5 5M1440.0 1311l4.5 5l-4.5 5M1483.6 1311l4.5 5l-4.5 5M1500.3 1311l4.5 5l-4.5 5M1544.1 1311l4.5 5l-4.5 5M1559.8 1311l4.5 5l-4.5 5M1603.5 1311l4.5 5l-4.5 5M1619.9 1311l4.5 5l-4.5 5M1662.9 1311l4.5 5l-4.5 5M1679.3 1311l4.5 5l-4.5 5M1761.5 1311l4.5 5l-4.5 5M1821.2 1311l4.5 5l-4.5 5M1881.0 1311l4.5 5l-4.5 5M1981.6 1311l4.5 5l-4.5 5M2066.5 1311l4.5 5l-4.5 5M2141.3 1311l4.5 5l-4.5 5M2205.5 1311l4.5 5l-4.5 5M2265.5 1311l4.5 5l-4.5 5M2329.4 1311l4.5 5l-4.5 5M2389.1 1311l4.5 5l-4.5 5M1194.5 1311l4.5 5l-4.5 5M1198.0 1311l4.5 5l-4.5 5M1255.5 1311l4.5 5l-4.5 5M1259.0 1311l4.5 5l-4.5 5M1315.0 1311l4.5 5l-4.5 5M1318.5 1311l4.5 5l-4.5 5" stroke="#0000b2" stroke-width="2" fill="none"/><path d="M2478 1311l4.5 5l-4.5 5" stroke="#fff" stroke-width="2" fill="none"/></svg>
<div class="t" style="left:1663.6px;top:1349.7px;font-size:19px;line-height:19px;font-weight:400;color:#111;letter-spacing:0px;transform:scaleX(1.1076);transform-origin:left top;">PCSK9</div>
<div class="b" style="left:2590px;top:1340px;width:58px;height:32px;overflow:hidden;"><div class="t" style="left:8.8px;top:9.7px;font-size:19px;line-height:19px;font-weight:400;color:#111;letter-spacing:1.6px;">USP24</div></div>
</body></html>
